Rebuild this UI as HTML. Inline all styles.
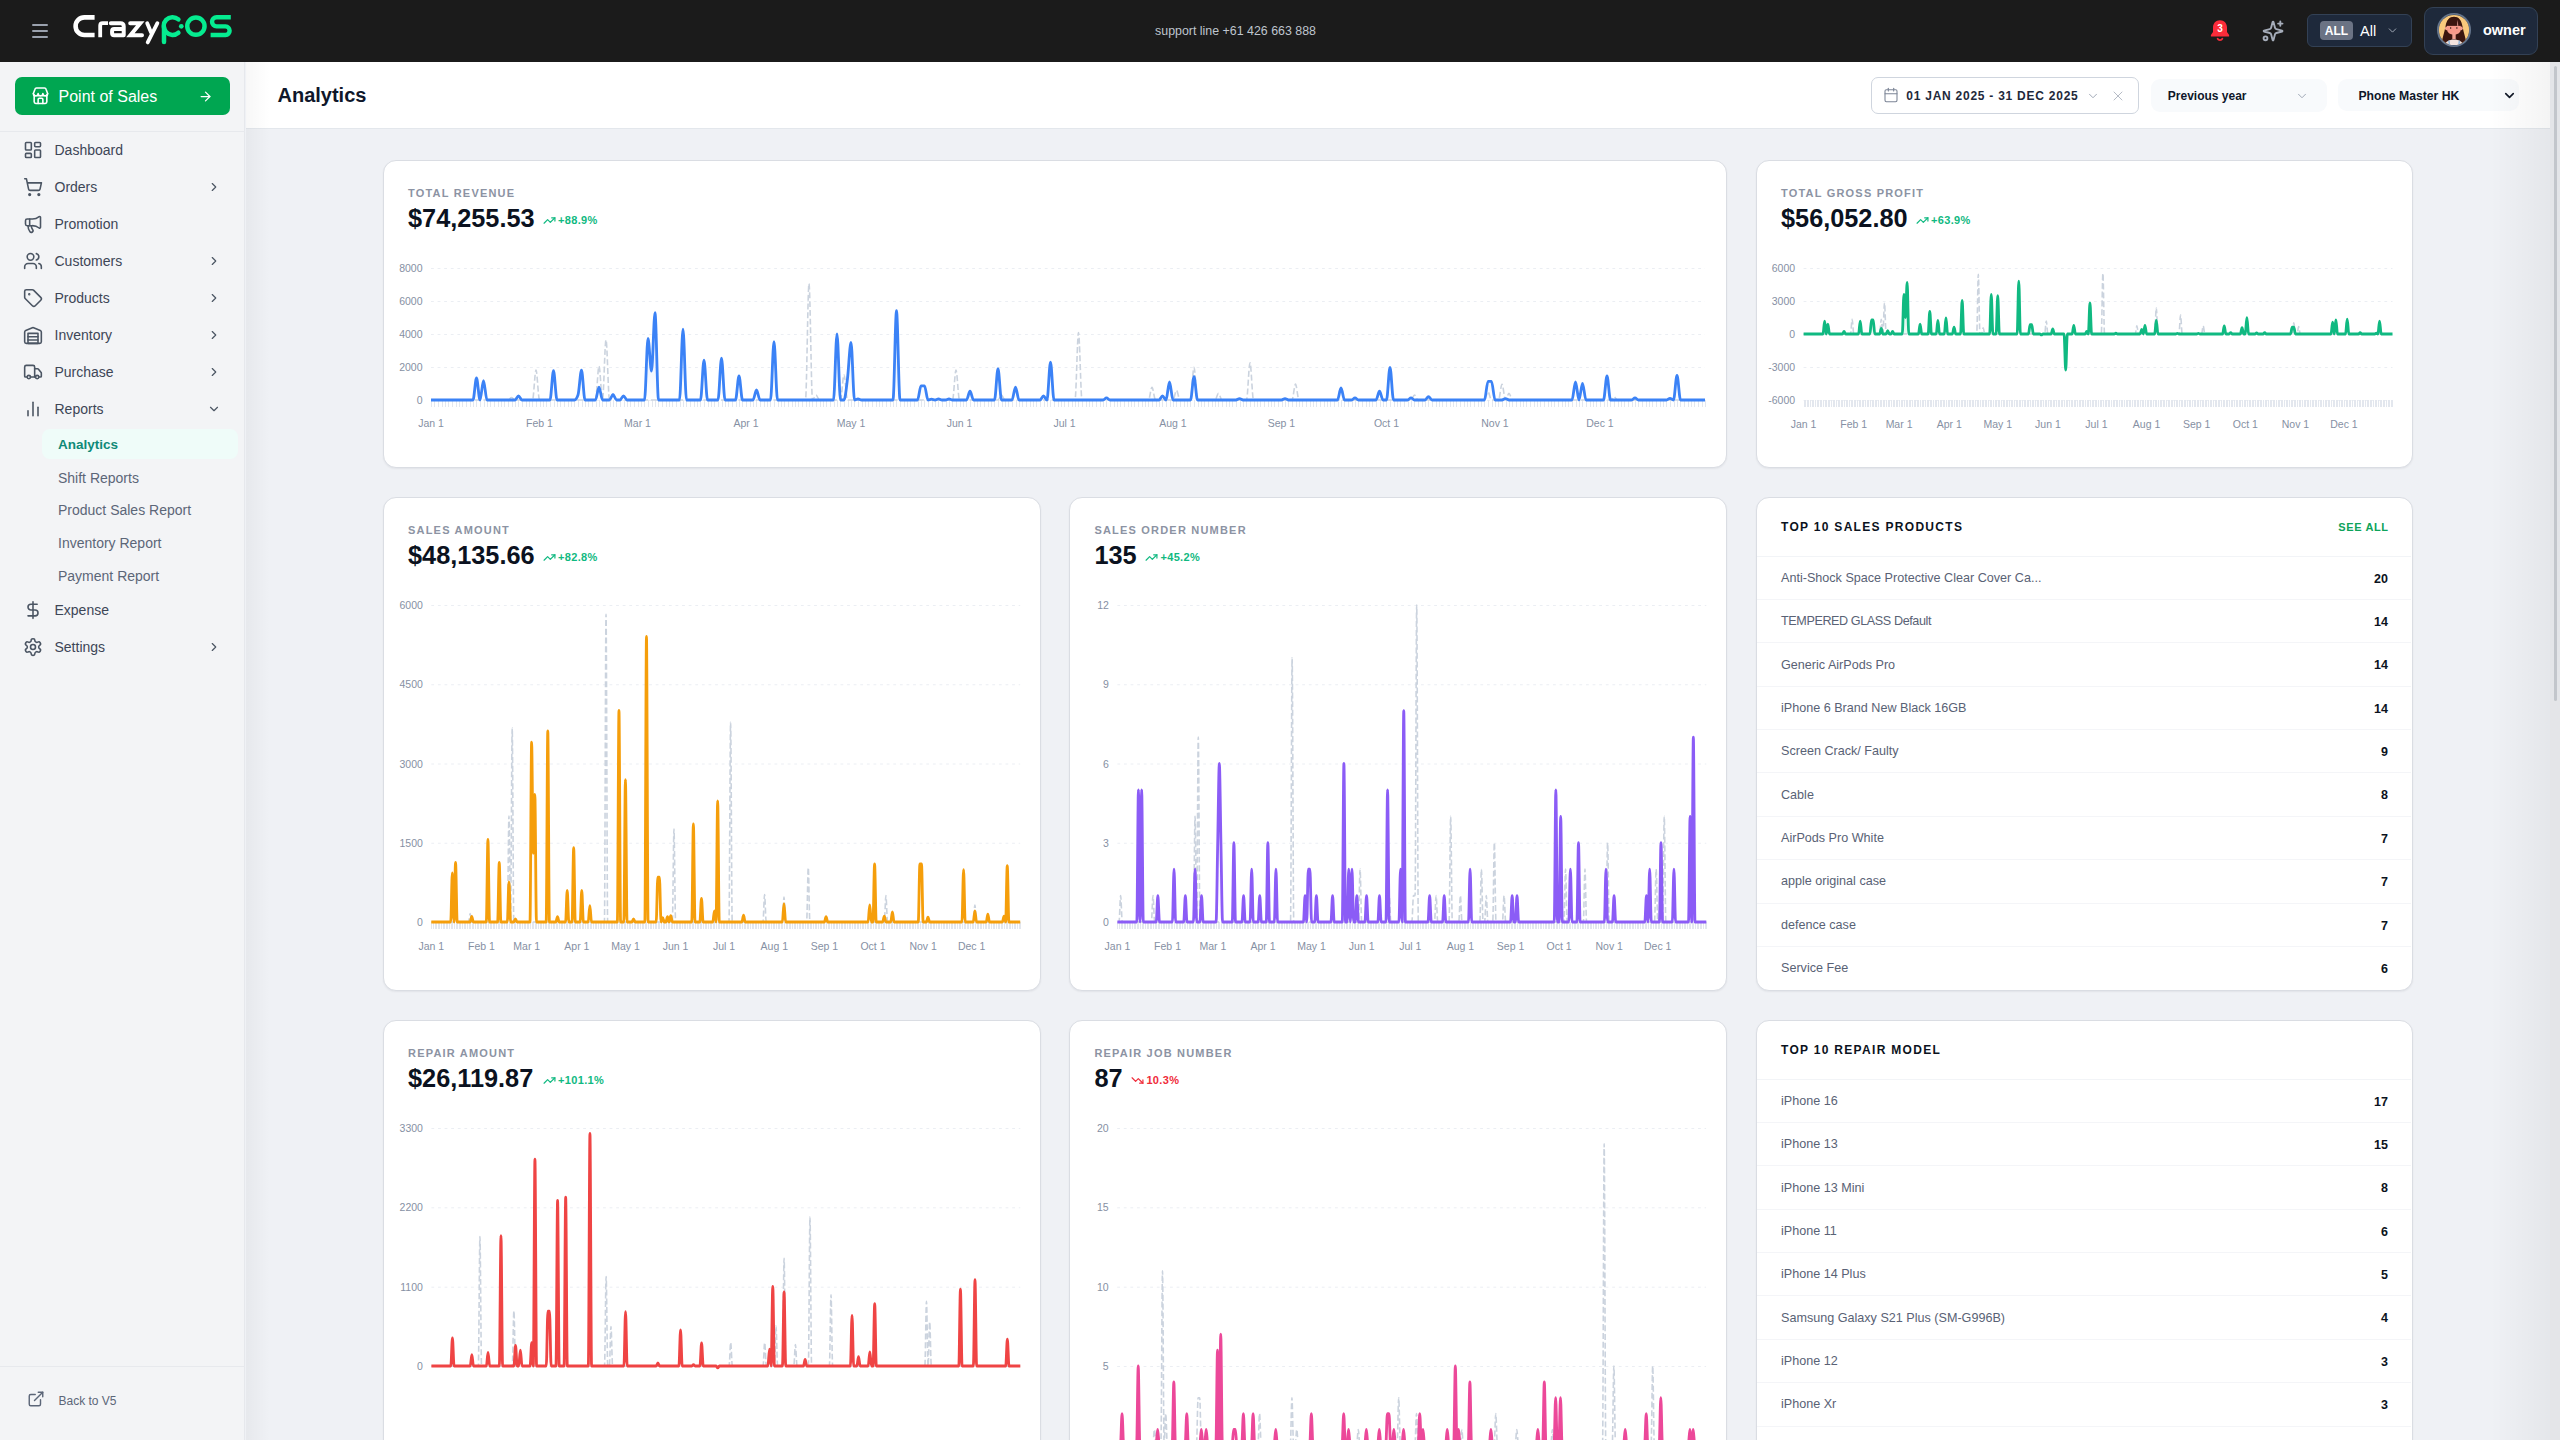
<!DOCTYPE html>
<html><head><meta charset="utf-8"><title>Analytics</title>
<style>
*{box-sizing:border-box;margin:0;padding:0}
html,body{width:2560px;height:1440px;overflow:hidden;background:#eff1f5;font-family:"Liberation Sans", sans-serif}
.t{position:absolute;white-space:nowrap}
.ic{position:absolute;display:block}
.abs{position:absolute}
.card{position:absolute;background:#fff;border:1px solid #dadde3;border-radius:13px;box-shadow:0 1px 2px rgba(16,24,40,.06)}
svg.ch{position:absolute;left:0;top:0;width:2560px;height:1440px;overflow:visible}
</style></head><body>

<div class="abs" style="left:245px;top:62px;width:2315px;height:1378px;background:#eff1f5"></div>
<div class="abs" style="left:246px;top:62px;width:24px;height:1378px;background:linear-gradient(90deg,rgba(0,0,0,.035),rgba(0,0,0,0))"></div>
<div class="abs" style="left:246px;top:62px;width:2304px;height:67px;background:#fff;border-bottom:1px solid #e3e7ec"></div>
<div class="abs" style="left:246px;top:62px;width:24px;height:67px;background:linear-gradient(90deg,rgba(0,0,0,.03),rgba(0,0,0,0))"></div>
<div class="t" style="top:85.07px;font-size:20px;line-height:20px;font-weight:700;color:#0f172a;left:277.5px;">Analytics</div>
<div class="abs" style="left:1871px;top:77px;width:268px;height:37px;border:1px solid #cfd5de;border-radius:7px;background:#fff"></div>
<svg class="ic" style="left:1883px;top:87px;width:16px;height:16px" viewBox="0 0 24 24" fill="none" stroke="#7c8596" stroke-width="1.6" stroke-linecap="round" stroke-linejoin="round"><rect width="18" height="18" x="3" y="4" rx="2" ry="2"/><line x1="16" x2="16" y1="2" y2="6"/><line x1="8" x2="8" y1="2" y2="6"/><line x1="3" x2="21" y1="10" y2="10"/></svg>
<div class="t" style="top:90.34px;font-size:12px;line-height:12px;font-weight:700;color:#1e293b;letter-spacing:0.75px;left:1906.3px;">01 JAN 2025 - 31 DEC 2025</div>
<svg class="ic" style="left:2086px;top:89px;width:14px;height:14px" viewBox="0 0 24 24" fill="none" stroke="#9aa3b2" stroke-width="1.6" stroke-linecap="round" stroke-linejoin="round"><path d="m6 9 6 6 6-6"/></svg>
<svg class="ic" style="left:2110px;top:88px;width:16px;height:16px" viewBox="0 0 24 24" fill="none" stroke="#b6bcc6" stroke-width="1.5" stroke-linecap="round" stroke-linejoin="round"><path d="M18 6 6 18"/><path d="m6 6 12 12"/></svg>
<div class="abs" style="left:2151px;top:79px;width:176px;height:33px;border-radius:9px;background:#f8fafc"></div>
<div class="t" style="top:90.34px;font-size:12px;line-height:12px;font-weight:700;color:#0f172a;left:2167.8px;">Previous year</div>
<svg class="ic" style="left:2295px;top:89px;width:14px;height:14px" viewBox="0 0 24 24" fill="none" stroke="#9aa3b2" stroke-width="1.6" stroke-linecap="round" stroke-linejoin="round"><path d="m6 9 6 6 6-6"/></svg>
<div class="abs" style="left:2338px;top:79px;width:181px;height:32px;border-radius:9px;background:#f8fafc"></div>
<div class="t" style="top:90.17px;font-size:12.2px;line-height:12.2px;font-weight:700;color:#0f172a;left:2358.4px;">Phone Master HK</div>
<svg class="ic" style="left:2502px;top:88px;width:15px;height:15px" viewBox="0 0 24 24" fill="none" stroke="#111827" stroke-width="2.6" stroke-linecap="round" stroke-linejoin="round"><path d="m6 9 6 6 6-6"/></svg>
<div class="abs" style="left:2490px;top:62px;width:60px;height:1378px;background:linear-gradient(90deg,rgba(0,0,0,0),rgba(0,0,0,.045))"></div>
<div class="abs" style="left:2550px;top:62px;width:10px;height:1378px;background:#e4e5e8"></div>
<div class="abs" style="left:2554px;top:66px;width:3px;height:635px;border-radius:2px;background:#c3c6cb"></div>
<div class="card" style="left:383px;top:160px;width:1344px;height:308px"></div>
<div class="card" style="left:1756px;top:160px;width:657px;height:308px"></div>
<div class="card" style="left:383px;top:497px;width:658px;height:494px"></div>
<div class="card" style="left:1069px;top:497px;width:658px;height:494px"></div>
<div class="card" style="left:1756px;top:497px;width:657px;height:494px"></div>
<div class="card" style="left:383px;top:1020px;width:658px;height:460px"></div>
<div class="card" style="left:1069px;top:1020px;width:658px;height:460px"></div>
<div class="card" style="left:1756px;top:1020px;width:657px;height:460px"></div>
<div class="t" style="top:187.69px;font-size:11px;line-height:11px;font-weight:700;color:#8c93a3;letter-spacing:1.2px;left:408px;">TOTAL REVENUE</div>
<div class="t" style="top:205.58px;font-size:25.3px;line-height:25.3px;font-weight:700;color:#0b1220;left:408px;">$74,255.53</div>
<svg class="ic" style="left:543px;top:214px;width:13px;height:13px" viewBox="0 0 24 24" fill="none" stroke="#10b981" stroke-width="2.2" stroke-linecap="round" stroke-linejoin="round"><polyline points="22 7 13.5 15.5 8.5 10.5 2 17"/><polyline points="16 7 22 7 22 13"/></svg>
<div class="t" style="top:214.69px;font-size:11px;line-height:11px;font-weight:700;color:#10b981;letter-spacing:0.35px;left:558px;">+88.9%</div>
<div class="t" style="top:187.69px;font-size:11px;line-height:11px;font-weight:700;color:#8c93a3;letter-spacing:1.2px;left:1781px;">TOTAL GROSS PROFIT</div>
<div class="t" style="top:205.58px;font-size:25.3px;line-height:25.3px;font-weight:700;color:#0b1220;left:1781px;">$56,052.80</div>
<svg class="ic" style="left:1916px;top:214px;width:13px;height:13px" viewBox="0 0 24 24" fill="none" stroke="#10b981" stroke-width="2.2" stroke-linecap="round" stroke-linejoin="round"><polyline points="22 7 13.5 15.5 8.5 10.5 2 17"/><polyline points="16 7 22 7 22 13"/></svg>
<div class="t" style="top:214.69px;font-size:11px;line-height:11px;font-weight:700;color:#10b981;letter-spacing:0.35px;left:1931px;">+63.9%</div>
<div class="t" style="top:524.69px;font-size:11px;line-height:11px;font-weight:700;color:#8c93a3;letter-spacing:1.2px;left:408px;">SALES AMOUNT</div>
<div class="t" style="top:542.58px;font-size:25.3px;line-height:25.3px;font-weight:700;color:#0b1220;left:408px;">$48,135.66</div>
<svg class="ic" style="left:543px;top:551px;width:13px;height:13px" viewBox="0 0 24 24" fill="none" stroke="#10b981" stroke-width="2.2" stroke-linecap="round" stroke-linejoin="round"><polyline points="22 7 13.5 15.5 8.5 10.5 2 17"/><polyline points="16 7 22 7 22 13"/></svg>
<div class="t" style="top:551.69px;font-size:11px;line-height:11px;font-weight:700;color:#10b981;letter-spacing:0.35px;left:558px;">+82.8%</div>
<div class="t" style="top:524.69px;font-size:11px;line-height:11px;font-weight:700;color:#8c93a3;letter-spacing:1.2px;left:1094.4px;">SALES ORDER NUMBER</div>
<div class="t" style="top:542.58px;font-size:25.3px;line-height:25.3px;font-weight:700;color:#0b1220;left:1094.4px;">135</div>
<svg class="ic" style="left:1145.4px;top:551px;width:13px;height:13px" viewBox="0 0 24 24" fill="none" stroke="#10b981" stroke-width="2.2" stroke-linecap="round" stroke-linejoin="round"><polyline points="22 7 13.5 15.5 8.5 10.5 2 17"/><polyline points="16 7 22 7 22 13"/></svg>
<div class="t" style="top:551.69px;font-size:11px;line-height:11px;font-weight:700;color:#10b981;letter-spacing:0.35px;left:1160.4px;">+45.2%</div>
<div class="t" style="top:1047.69px;font-size:11px;line-height:11px;font-weight:700;color:#8c93a3;letter-spacing:1.2px;left:408px;">REPAIR AMOUNT</div>
<div class="t" style="top:1065.58px;font-size:25.3px;line-height:25.3px;font-weight:700;color:#0b1220;left:408px;">$26,119.87</div>
<svg class="ic" style="left:543px;top:1074px;width:13px;height:13px" viewBox="0 0 24 24" fill="none" stroke="#10b981" stroke-width="2.2" stroke-linecap="round" stroke-linejoin="round"><polyline points="22 7 13.5 15.5 8.5 10.5 2 17"/><polyline points="16 7 22 7 22 13"/></svg>
<div class="t" style="top:1074.69px;font-size:11px;line-height:11px;font-weight:700;color:#10b981;letter-spacing:0.35px;left:558px;">+101.1%</div>
<div class="t" style="top:1047.69px;font-size:11px;line-height:11px;font-weight:700;color:#8c93a3;letter-spacing:1.2px;left:1094.4px;">REPAIR JOB NUMBER</div>
<div class="t" style="top:1065.58px;font-size:25.3px;line-height:25.3px;font-weight:700;color:#0b1220;left:1094.4px;">87</div>
<svg class="ic" style="left:1131.4px;top:1074px;width:13px;height:13px" viewBox="0 0 24 24" fill="none" stroke="#ef2b3a" stroke-width="2.2" stroke-linecap="round" stroke-linejoin="round"><polyline points="22 17 13.5 8.5 8.5 13.5 2 7"/><polyline points="16 17 22 17 22 11"/></svg>
<div class="t" style="top:1074.69px;font-size:11px;line-height:11px;font-weight:700;color:#ef2b3a;letter-spacing:0.35px;left:1146.4px;">10.3%</div>
<svg class="ch" viewBox="0 0 2560 1440"><line x1="431" x2="1705" y1="268.5" y2="268.5" stroke="#ebeef3" stroke-width="1" stroke-dasharray="2.8 3.8"/>
<line x1="431" x2="1705" y1="301.5" y2="301.5" stroke="#ebeef3" stroke-width="1" stroke-dasharray="2.8 3.8"/>
<line x1="431" x2="1705" y1="334.5" y2="334.5" stroke="#ebeef3" stroke-width="1" stroke-dasharray="2.8 3.8"/>
<line x1="431" x2="1705" y1="367.5" y2="367.5" stroke="#ebeef3" stroke-width="1" stroke-dasharray="2.8 3.8"/>
<line x1="431" x2="1705" y1="400.5" y2="400.5" stroke="#ebeef3" stroke-width="1" stroke-dasharray="2.8 3.8"/>
<path d="M431.5,400v7M434.5,400v7M438.5,400v7M442.5,400v7M445.5,400v7M448.5,400v7M452.5,400v7M456.5,400v7M459.5,400v7M462.5,400v7M466.5,400v7M470.5,400v7M473.5,400v7M476.5,400v7M480.5,400v7M484.5,400v7M487.5,400v7M490.5,400v7M494.5,400v7M498.5,400v7M501.5,400v7M504.5,400v7M508.5,400v7M512.5,400v7M515.5,400v7M518.5,400v7M522.5,400v7M526.5,400v7M529.5,400v7M532.5,400v7M536.5,400v7M540.5,400v7M543.5,400v7M546.5,400v7M550.5,400v7M554.5,400v7M557.5,400v7M560.5,400v7M564.5,400v7M568.5,400v7M571.5,400v7M574.5,400v7M578.5,400v7M582.5,400v7M585.5,400v7M588.5,400v7M592.5,400v7M596.5,400v7M599.5,400v7M602.5,400v7M606.5,400v7M610.5,400v7M613.5,400v7M616.5,400v7M620.5,400v7M624.5,400v7M627.5,400v7M630.5,400v7M634.5,400v7M638.5,400v7M641.5,400v7M644.5,400v7M648.5,400v7M652.5,400v7M655.5,400v7M658.5,400v7M662.5,400v7M666.5,400v7M669.5,400v7M672.5,400v7M676.5,400v7M680.5,400v7M683.5,400v7M686.5,400v7M690.5,400v7M694.5,400v7M697.5,400v7M700.5,400v7M704.5,400v7M708.5,400v7M711.5,400v7M714.5,400v7M718.5,400v7M722.5,400v7M725.5,400v7M728.5,400v7M732.5,400v7M736.5,400v7M739.5,400v7M742.5,400v7M746.5,400v7M750.5,400v7M753.5,400v7M756.5,400v7M760.5,400v7M764.5,400v7M767.5,400v7M770.5,400v7M774.5,400v7M778.5,400v7M781.5,400v7M784.5,400v7M788.5,400v7M792.5,400v7M795.5,400v7M798.5,400v7M802.5,400v7M806.5,400v7M809.5,400v7M812.5,400v7M816.5,400v7M820.5,400v7M823.5,400v7M826.5,400v7M830.5,400v7M834.5,400v7M837.5,400v7M840.5,400v7M844.5,400v7M848.5,400v7M851.5,400v7M854.5,400v7M858.5,400v7M862.5,400v7M865.5,400v7M868.5,400v7M872.5,400v7M876.5,400v7M879.5,400v7M882.5,400v7M886.5,400v7M890.5,400v7M893.5,400v7M896.5,400v7M900.5,400v7M904.5,400v7M907.5,400v7M910.5,400v7M914.5,400v7M918.5,400v7M921.5,400v7M924.5,400v7M928.5,400v7M932.5,400v7M935.5,400v7M938.5,400v7M942.5,400v7M946.5,400v7M949.5,400v7M952.5,400v7M956.5,400v7M960.5,400v7M963.5,400v7M966.5,400v7M970.5,400v7M974.5,400v7M977.5,400v7M980.5,400v7M984.5,400v7M988.5,400v7M991.5,400v7M994.5,400v7M998.5,400v7M1002.5,400v7M1005.5,400v7M1008.5,400v7M1012.5,400v7M1016.5,400v7M1019.5,400v7M1022.5,400v7M1026.5,400v7M1030.5,400v7M1033.5,400v7M1036.5,400v7M1040.5,400v7M1044.5,400v7M1047.5,400v7M1050.5,400v7M1054.5,400v7M1058.5,400v7M1061.5,400v7M1064.5,400v7M1068.5,400v7M1072.5,400v7M1075.5,400v7M1078.5,400v7M1082.5,400v7M1086.5,400v7M1089.5,400v7M1092.5,400v7M1096.5,400v7M1100.5,400v7M1103.5,400v7M1106.5,400v7M1110.5,400v7M1114.5,400v7M1117.5,400v7M1120.5,400v7M1124.5,400v7M1128.5,400v7M1131.5,400v7M1134.5,400v7M1138.5,400v7M1142.5,400v7M1145.5,400v7M1148.5,400v7M1152.5,400v7M1156.5,400v7M1159.5,400v7M1162.5,400v7M1166.5,400v7M1170.5,400v7M1173.5,400v7M1176.5,400v7M1180.5,400v7M1184.5,400v7M1187.5,400v7M1190.5,400v7M1194.5,400v7M1198.5,400v7M1201.5,400v7M1204.5,400v7M1208.5,400v7M1212.5,400v7M1215.5,400v7M1218.5,400v7M1222.5,400v7M1226.5,400v7M1229.5,400v7M1232.5,400v7M1236.5,400v7M1240.5,400v7M1243.5,400v7M1246.5,400v7M1250.5,400v7M1254.5,400v7M1257.5,400v7M1260.5,400v7M1264.5,400v7M1268.5,400v7M1271.5,400v7M1274.5,400v7M1278.5,400v7M1282.5,400v7M1285.5,400v7M1288.5,400v7M1292.5,400v7M1296.5,400v7M1299.5,400v7M1302.5,400v7M1306.5,400v7M1310.5,400v7M1313.5,400v7M1316.5,400v7M1320.5,400v7M1324.5,400v7M1327.5,400v7M1330.5,400v7M1334.5,400v7M1338.5,400v7M1341.5,400v7M1344.5,400v7M1348.5,400v7M1352.5,400v7M1355.5,400v7M1358.5,400v7M1362.5,400v7M1366.5,400v7M1369.5,400v7M1372.5,400v7M1376.5,400v7M1380.5,400v7M1383.5,400v7M1386.5,400v7M1390.5,400v7M1394.5,400v7M1397.5,400v7M1400.5,400v7M1404.5,400v7M1408.5,400v7M1411.5,400v7M1414.5,400v7M1418.5,400v7M1422.5,400v7M1425.5,400v7M1428.5,400v7M1432.5,400v7M1436.5,400v7M1439.5,400v7M1442.5,400v7M1446.5,400v7M1450.5,400v7M1453.5,400v7M1456.5,400v7M1460.5,400v7M1464.5,400v7M1467.5,400v7M1470.5,400v7M1474.5,400v7M1478.5,400v7M1481.5,400v7M1484.5,400v7M1488.5,400v7M1492.5,400v7M1495.5,400v7M1498.5,400v7M1502.5,400v7M1506.5,400v7M1509.5,400v7M1512.5,400v7M1516.5,400v7M1520.5,400v7M1523.5,400v7M1526.5,400v7M1530.5,400v7M1534.5,400v7M1537.5,400v7M1540.5,400v7M1544.5,400v7M1548.5,400v7M1551.5,400v7M1554.5,400v7M1558.5,400v7M1562.5,400v7M1565.5,400v7M1568.5,400v7M1572.5,400v7M1576.5,400v7M1579.5,400v7M1582.5,400v7M1586.5,400v7M1590.5,400v7M1593.5,400v7M1596.5,400v7M1600.5,400v7M1604.5,400v7M1607.5,400v7M1610.5,400v7M1614.5,400v7M1618.5,400v7M1621.5,400v7M1624.5,400v7M1628.5,400v7M1632.5,400v7M1635.5,400v7M1638.5,400v7M1642.5,400v7M1646.5,400v7M1649.5,400v7M1652.5,400v7M1656.5,400v7M1660.5,400v7M1663.5,400v7M1666.5,400v7M1670.5,400v7M1674.5,400v7M1677.5,400v7M1680.5,400v7M1684.5,400v7M1688.5,400v7M1691.5,400v7M1694.5,400v7M1698.5,400v7M1702.5,400v7M1705.5,400v7" stroke="#e3e7ee" stroke-width="1" fill="none"/>
<path d="M431.00,400.00L434.50,400.00L438.00,400.00L441.50,400.00L445.00,400.00L448.50,400.00L452.00,400.00L455.50,400.00L459.00,400.00L462.50,400.00L466.00,400.00L469.50,400.00L473.00,400.00L476.50,400.00L480.00,400.00L483.50,400.00L487.00,400.00L490.50,400.00L494.00,400.00L497.50,400.00L501.00,400.00L504.50,400.00L508.00,400.00C509.17,400.00,510.33,397.52,511.50,397.52C512.67,397.52,513.83,400.00,515.00,400.00L518.50,400.00L522.00,400.00L525.50,400.00L529.00,400.00L532.50,400.00C533.67,400.00,534.83,370.13,536.00,370.13C537.17,370.13,538.33,400.00,539.50,400.00L543.00,400.00L546.50,400.00L550.00,400.00L553.50,400.00L557.00,400.00L560.50,400.00L564.00,400.00L567.50,400.00L571.00,400.00L574.50,400.00L578.00,400.00L581.50,400.00L585.00,400.00L588.50,400.00L592.00,400.00L595.50,400.00C596.67,400.00,597.83,366.18,599.00,366.18C600.17,366.18,601.33,400.00,602.50,400.00C603.67,400.00,604.83,339.77,606.00,339.77C607.17,339.77,608.33,400.00,609.50,400.00C610.67,400.00,611.83,395.05,613.00,395.05C614.17,395.05,615.33,400.00,616.50,400.00L620.00,400.00L623.50,400.00L627.00,400.00L630.50,400.00L634.00,400.00L637.50,400.00L641.00,400.00L644.50,400.00L648.00,400.00L651.50,400.00L655.00,400.00L658.50,400.00L662.00,400.00L665.50,400.00L669.00,400.00L672.50,400.00L676.00,400.00L679.50,400.00L683.00,400.00L686.50,400.00L690.00,400.00L693.50,400.00L697.00,400.00L700.50,400.00L704.00,400.00L707.50,400.00L711.00,400.00L714.50,400.00L718.00,400.00L721.50,400.00L725.00,400.00L728.50,400.00L732.00,400.00L735.50,400.00L739.00,400.00L742.50,400.00L746.00,400.00L749.50,400.00L753.00,400.00L756.50,400.00L760.00,400.00L763.50,400.00L767.00,400.00L770.50,400.00L774.00,400.00L777.50,400.00L781.00,400.00L784.50,400.00L788.00,400.00L791.50,400.00L795.00,400.00L798.50,400.00L802.00,400.00L805.50,400.00C806.67,400.00,807.83,283.59,809.00,283.59C810.17,283.59,811.33,400.00,812.50,400.00C813.67,400.00,814.83,395.05,816.00,395.05C817.17,395.05,818.33,400.00,819.50,400.00L823.00,400.00L826.50,400.00L830.00,400.00L833.50,400.00L837.00,400.00L840.50,400.00C841.67,400.00,842.83,374.71,844.00,374.71C845.17,374.71,846.33,400.00,847.50,400.00L851.00,400.00L854.50,400.00L858.00,400.00L861.50,400.00L865.00,400.00L868.50,400.00L872.00,400.00L875.50,400.00L879.00,400.00L882.50,400.00L886.00,400.00L889.50,400.00L893.00,400.00L896.50,400.00L900.00,400.00L903.50,400.00L907.00,400.00L910.50,400.00L914.00,400.00L917.50,400.00L921.00,400.00L924.50,400.00L928.00,400.00L931.50,400.00L935.00,400.00L938.50,400.00L942.00,400.00L945.50,400.00L949.00,400.00L952.50,400.00C953.67,400.00,954.83,370.13,956.00,370.13C957.17,370.13,958.33,400.00,959.50,400.00L963.00,400.00L966.50,400.00L970.00,400.00L973.50,400.00L977.00,400.00L980.50,400.00L984.00,400.00L987.50,400.00L991.00,400.00L994.50,400.00L998.00,400.00C999.17,400.00,1000.33,395.05,1001.50,395.05C1002.67,395.05,1003.83,400.00,1005.00,400.00L1008.50,400.00L1012.00,400.00L1015.50,400.00L1019.00,400.00L1022.50,400.00L1026.00,400.00L1029.50,400.00L1033.00,400.00L1036.50,400.00L1040.00,400.00L1043.50,400.00L1047.00,400.00L1050.50,400.00L1054.00,400.00L1057.50,400.00L1061.00,400.00L1064.50,400.00L1068.00,400.00L1071.50,400.00L1075.00,400.00C1076.17,400.00,1077.33,332.51,1078.50,332.51C1079.67,332.51,1080.83,400.00,1082.00,400.00L1085.50,400.00L1089.00,400.00L1092.50,400.00L1096.00,400.00L1099.50,400.00L1103.00,400.00L1106.50,400.00L1110.00,400.00L1113.50,400.00L1117.00,400.00L1120.50,400.00L1124.00,400.00L1127.50,400.00L1131.00,400.00L1134.50,400.00L1138.00,400.00L1141.50,400.00L1145.00,400.00L1148.50,400.00C1149.67,400.00,1150.83,387.30,1152.00,387.30C1153.17,387.30,1154.33,400.00,1155.50,400.00L1159.00,400.00L1162.50,400.00L1166.00,400.00L1169.50,400.00L1173.00,400.00C1174.17,400.00,1175.33,390.43,1176.50,390.43C1177.67,390.43,1178.83,400.00,1180.00,400.00L1183.50,400.00L1187.00,400.00L1190.50,400.00C1191.67,400.00,1192.83,367.40,1194.00,367.40C1195.17,367.40,1196.33,400.00,1197.50,400.00L1201.00,400.00L1204.50,400.00L1208.00,400.00L1211.50,400.00L1215.00,400.00C1216.17,400.00,1217.33,393.40,1218.50,393.40C1219.67,393.40,1220.83,400.00,1222.00,400.00L1225.50,400.00L1229.00,400.00L1232.50,400.00L1236.00,400.00L1239.50,400.00L1243.00,400.00L1246.50,400.00C1247.67,400.00,1248.83,362.79,1250.00,362.79C1251.17,362.79,1252.33,400.00,1253.50,400.00L1257.00,400.00L1260.50,400.00L1264.00,400.00L1267.50,400.00L1271.00,400.00L1274.50,400.00L1278.00,400.00L1281.50,400.00L1285.00,400.00L1288.50,400.00L1292.00,400.00C1293.17,400.00,1294.33,384.16,1295.50,384.16C1296.67,384.16,1297.83,400.00,1299.00,400.00L1302.50,400.00L1306.00,400.00L1309.50,400.00L1313.00,400.00L1316.50,400.00L1320.00,400.00L1323.50,400.00L1327.00,400.00L1330.50,400.00L1334.00,400.00L1337.50,400.00L1341.00,400.00L1344.50,400.00L1348.00,400.00L1351.50,400.00L1355.00,400.00L1358.50,400.00L1362.00,400.00L1365.50,400.00L1369.00,400.00L1372.50,400.00L1376.00,400.00L1379.50,400.00L1383.00,400.00L1386.50,400.00L1390.00,400.00L1393.50,400.00L1397.00,400.00L1400.50,400.00L1404.00,400.00L1407.50,400.00L1411.00,400.00C1412.17,400.00,1413.33,395.05,1414.50,395.05C1415.67,395.05,1416.83,400.00,1418.00,400.00L1421.50,400.00L1425.00,400.00L1428.50,400.00L1432.00,400.00L1435.50,400.00L1439.00,400.00L1442.50,400.00L1446.00,400.00L1449.50,400.00L1453.00,400.00L1456.50,400.00L1460.00,400.00L1463.50,400.00L1467.00,400.00L1470.50,400.00L1474.00,400.00L1477.50,400.00L1481.00,400.00L1484.50,400.00C1485.67,400.00,1486.83,391.75,1488.00,391.75C1489.17,391.75,1490.33,400.00,1491.50,400.00L1495.00,400.00L1498.50,400.00C1499.67,400.00,1500.83,384.32,1502.00,384.32C1503.17,384.32,1504.33,400.00,1505.50,400.00C1506.67,400.00,1507.83,393.40,1509.00,393.40C1510.17,393.40,1511.33,400.00,1512.50,400.00L1516.00,400.00L1519.50,400.00L1523.00,400.00L1526.50,400.00L1530.00,400.00L1533.50,400.00L1537.00,400.00L1540.50,400.00L1544.00,400.00L1547.50,400.00L1551.00,400.00L1554.50,400.00L1558.00,400.00L1561.50,400.00L1565.00,400.00L1568.50,400.00L1572.00,400.00L1575.50,400.00L1579.00,400.00L1582.50,400.00L1586.00,400.00L1589.50,400.00L1593.00,400.00L1596.50,400.00L1600.00,400.00L1603.50,400.00L1607.00,400.00L1610.50,400.00C1611.67,400.00,1612.83,396.70,1614.00,396.70C1615.17,396.70,1616.33,400.00,1617.50,400.00L1621.00,400.00L1624.50,400.00L1628.00,400.00L1631.50,400.00L1635.00,400.00L1638.50,400.00L1642.00,400.00L1645.50,400.00L1649.00,400.00L1652.50,400.00L1656.00,400.00L1659.50,400.00L1663.00,400.00L1666.50,400.00L1670.00,400.00L1673.50,400.00L1677.00,400.00L1680.50,400.00L1684.00,400.00L1687.50,400.00L1691.00,400.00L1694.50,400.00L1698.00,400.00L1701.50,400.00L1705.00,400.00" stroke="#cbd3de" stroke-width="1.6" stroke-dasharray="6 2.75" fill="none"/>
<defs><linearGradient id="grev" x1="0" y1="0" x2="0" y2="1"><stop offset="0" stop-color="#3b82f6" stop-opacity="0.22"/><stop offset="1" stop-color="#3b82f6" stop-opacity="0"/></linearGradient></defs>
<path d="M431.00,400.00L434.50,400.00L438.00,400.00L441.50,400.00L445.00,400.00L448.50,400.00L452.00,400.00L455.50,400.00L459.00,400.00L462.50,400.00L466.00,400.00L469.50,400.00L473.00,400.00C474.17,400.00,475.33,378.01,476.50,378.01C477.67,378.01,478.83,400.00,480.00,400.00C481.17,400.00,482.33,380.61,483.50,380.61C484.67,380.61,485.83,400.00,487.00,400.00L490.50,400.00L494.00,400.00L497.50,400.00L501.00,400.00L504.50,400.00L508.00,400.00L511.50,400.00L515.00,400.00C516.17,400.00,517.33,395.88,518.50,395.88C519.67,395.88,520.83,400.00,522.00,400.00L525.50,400.00L529.00,400.00L532.50,400.00L536.00,400.00L539.50,400.00L543.00,400.00L546.50,400.00L550.00,400.00C551.17,400.00,552.33,370.71,553.50,370.71C554.67,370.71,555.83,400.00,557.00,400.00L560.50,400.00L564.00,400.00L567.50,400.00L571.00,400.00L574.50,400.00C575.67,400.00,576.83,398.35,578.00,395.05C579.17,391.75,580.33,370.13,581.50,370.13C582.67,370.13,583.83,400.00,585.00,400.00L588.50,400.00L592.00,400.00L595.50,400.00C596.67,400.00,597.83,387.21,599.00,387.21C600.17,387.21,601.33,400.00,602.50,400.00L606.00,400.00L609.50,400.00C610.67,400.00,611.83,394.51,613.00,394.51C614.17,394.51,615.33,400.00,616.50,400.00L620.00,400.00C621.17,400.00,622.33,395.79,623.50,395.79C624.67,395.79,625.83,400.00,627.00,400.00L630.50,400.00L634.00,400.00L637.50,400.00L641.00,400.00L644.50,400.00C645.67,400.00,646.83,338.41,648.00,338.41C649.17,338.41,650.33,371.12,651.50,371.12C652.67,371.12,653.83,312.71,655.00,312.71C656.17,312.71,657.33,400.00,658.50,400.00L662.00,400.00L665.50,400.00L669.00,400.00L672.50,400.00L676.00,400.00L679.50,400.00C680.67,400.00,681.83,329.22,683.00,329.22C684.17,329.22,685.33,400.00,686.50,400.00L690.00,400.00L693.50,400.00L697.00,400.00L700.50,400.00C701.67,400.00,702.83,360.20,704.00,360.20C705.17,360.20,706.33,400.00,707.50,400.00L711.00,400.00L714.50,400.00L718.00,400.00C719.17,400.00,720.33,358.21,721.50,358.21C722.67,358.21,723.83,400.00,725.00,400.00L728.50,400.00L732.00,400.00L735.50,400.00C736.67,400.00,737.83,375.99,739.00,375.99C740.17,375.99,741.33,400.00,742.50,400.00L746.00,400.00L749.50,400.00L753.00,400.00C754.17,400.00,755.33,389.90,756.50,389.90C757.67,389.90,758.83,400.00,760.00,400.00L763.50,400.00L767.00,400.00L770.50,400.00C771.67,400.00,772.83,341.71,774.00,341.71C775.17,341.71,776.33,400.00,777.50,400.00L781.00,400.00L784.50,400.00L788.00,400.00L791.50,400.00L795.00,400.00L798.50,400.00L802.00,400.00L805.50,400.00L809.00,400.00L812.50,400.00L816.00,400.00L819.50,400.00L823.00,400.00L826.50,400.00L830.00,400.00L833.50,400.00C834.67,400.00,835.83,333.80,837.00,333.80C838.17,333.80,839.33,400.00,840.50,400.00L844.00,400.00C845.17,400.00,846.33,388.15,847.50,378.55C848.67,368.95,849.83,342.42,851.00,342.42C852.17,342.42,853.33,400.00,854.50,400.00C855.67,400.00,856.83,399.01,858.00,399.01C859.17,399.01,860.33,400.00,861.50,400.00L865.00,400.00L868.50,400.00L872.00,400.00L875.50,400.00L879.00,400.00L882.50,400.00L886.00,400.00L889.50,400.00L893.00,400.00C894.17,400.00,895.33,310.70,896.50,310.70C897.67,310.70,898.83,400.00,900.00,400.00L903.50,400.00L907.00,400.00L910.50,400.00L914.00,400.00L917.50,400.00C918.67,400.00,919.83,385.89,921.00,385.89L924.50,385.89C925.67,385.89,926.83,400.00,928.00,400.00C929.17,400.00,930.33,399.18,931.50,399.18C932.67,399.18,933.83,400.00,935.00,400.00C936.17,400.00,937.33,398.85,938.50,398.85C939.67,398.85,940.83,400.00,942.00,400.00L945.50,400.00C946.67,400.00,947.83,399.01,949.00,399.01C950.17,399.01,951.33,400.00,952.50,400.00L956.00,400.00L959.50,400.00L963.00,400.00L966.50,400.00C967.67,400.00,968.83,391.21,970.00,391.21C971.17,391.21,972.33,400.00,973.50,400.00L977.00,400.00L980.50,400.00L984.00,400.00L987.50,400.00L991.00,400.00L994.50,400.00C995.67,400.00,996.83,368.70,998.00,368.70C999.17,368.70,1000.33,400.00,1001.50,400.00L1005.00,400.00L1008.50,400.00L1012.00,400.00C1013.17,400.00,1014.33,387.20,1015.50,387.20C1016.67,387.20,1017.83,400.00,1019.00,400.00L1022.50,400.00L1026.00,400.00L1029.50,400.00L1033.00,400.00L1036.50,400.00L1040.00,400.00C1041.17,400.00,1042.33,395.88,1043.50,395.88C1044.67,395.88,1045.83,400.00,1047.00,400.00C1048.17,400.00,1049.33,362.10,1050.50,362.10C1051.67,362.10,1052.83,400.00,1054.00,400.00L1057.50,400.00L1061.00,400.00L1064.50,400.00L1068.00,400.00L1071.50,400.00L1075.00,400.00L1078.50,400.00L1082.00,400.00L1085.50,400.00L1089.00,400.00L1092.50,400.00L1096.00,400.00L1099.50,400.00L1103.00,400.00C1104.17,400.00,1105.33,397.86,1106.50,397.86C1107.67,397.86,1108.83,400.00,1110.00,400.00L1113.50,400.00L1117.00,400.00L1120.50,400.00L1124.00,400.00L1127.50,400.00L1131.00,400.00L1134.50,400.00L1138.00,400.00L1141.50,400.00L1145.00,400.00L1148.50,400.00L1152.00,400.00L1155.50,400.00L1159.00,400.00C1160.17,400.00,1161.33,395.88,1162.50,395.88C1163.67,395.88,1164.83,400.00,1166.00,400.00C1167.17,400.00,1168.33,382.01,1169.50,382.01C1170.67,382.01,1171.83,400.00,1173.00,400.00L1176.50,400.00L1180.00,400.00L1183.50,400.00L1187.00,400.00L1190.50,400.00C1191.67,400.00,1192.83,376.70,1194.00,376.70C1195.17,376.70,1196.33,400.00,1197.50,400.00L1201.00,400.00L1204.50,400.00L1208.00,400.00L1211.50,400.00L1215.00,400.00L1218.50,400.00L1222.00,400.00L1225.50,400.00L1229.00,400.00L1232.50,400.00L1236.00,400.00C1237.17,400.00,1238.33,398.68,1239.50,398.68C1240.67,398.68,1241.83,400.00,1243.00,400.00L1246.50,400.00L1250.00,400.00L1253.50,400.00L1257.00,400.00L1260.50,400.00L1264.00,400.00L1267.50,400.00L1271.00,400.00L1274.50,400.00L1278.00,400.00L1281.50,400.00C1282.67,400.00,1283.83,398.68,1285.00,398.68C1286.17,398.68,1287.33,400.00,1288.50,400.00L1292.00,400.00L1295.50,400.00L1299.00,400.00L1302.50,400.00L1306.00,400.00L1309.50,400.00L1313.00,400.00L1316.50,400.00L1320.00,400.00L1323.50,400.00L1327.00,400.00L1330.50,400.00L1334.00,400.00L1337.50,400.00C1338.67,400.00,1339.83,387.91,1341.00,387.91C1342.17,387.91,1343.33,400.00,1344.50,400.00L1348.00,400.00L1351.50,400.00C1352.67,400.00,1353.83,397.86,1355.00,397.86C1356.17,397.86,1357.33,400.00,1358.50,400.00L1362.00,400.00L1365.50,400.00L1369.00,400.00L1372.50,400.00L1376.00,400.00C1377.17,400.00,1378.33,391.21,1379.50,391.21C1380.67,391.21,1381.83,400.00,1383.00,400.00L1386.50,400.00C1387.67,400.00,1388.83,367.40,1390.00,367.40C1391.17,367.40,1392.33,400.00,1393.50,400.00L1397.00,400.00L1400.50,400.00L1404.00,400.00L1407.50,400.00C1408.67,400.00,1409.83,397.86,1411.00,397.86C1412.17,397.86,1413.33,400.00,1414.50,400.00L1418.00,400.00L1421.50,400.00L1425.00,400.00C1426.17,400.00,1427.33,396.54,1428.50,396.54C1429.67,396.54,1430.83,400.00,1432.00,400.00L1435.50,400.00L1439.00,400.00L1442.50,400.00L1446.00,400.00L1449.50,400.00L1453.00,400.00L1456.50,400.00L1460.00,400.00L1463.50,400.00L1467.00,400.00L1470.50,400.00L1474.00,400.00L1477.50,400.00L1481.00,400.00L1484.50,400.00C1485.67,400.00,1486.83,381.31,1488.00,381.31L1491.50,381.31C1492.67,381.31,1493.83,400.00,1495.00,400.00L1498.50,400.00L1502.00,400.00C1503.17,400.00,1504.33,398.68,1505.50,398.68C1506.67,398.68,1507.83,400.00,1509.00,400.00L1512.50,400.00L1516.00,400.00L1519.50,400.00L1523.00,400.00L1526.50,400.00L1530.00,400.00L1533.50,400.00L1537.00,400.00L1540.50,400.00L1544.00,400.00L1547.50,400.00L1551.00,400.00L1554.50,400.00L1558.00,400.00L1561.50,400.00L1565.00,400.00L1568.50,400.00L1572.00,400.00C1573.17,400.00,1574.33,382.01,1575.50,382.01C1576.67,382.01,1577.83,400.00,1579.00,400.00C1580.17,400.00,1581.33,383.33,1582.50,383.33C1583.67,383.33,1584.83,400.00,1586.00,400.00L1589.50,400.00L1593.00,400.00L1596.50,400.00L1600.00,400.00L1603.50,400.00C1604.67,400.00,1605.83,375.99,1607.00,375.99C1608.17,375.99,1609.33,400.00,1610.50,400.00L1614.00,400.00L1617.50,400.00L1621.00,400.00L1624.50,400.00L1628.00,400.00L1631.50,400.00C1632.67,400.00,1633.83,397.86,1635.00,397.86C1636.17,397.86,1637.33,400.00,1638.50,400.00L1642.00,400.00L1645.50,400.00L1649.00,400.00L1652.50,400.00L1656.00,400.00L1659.50,400.00L1663.00,400.00L1666.50,400.00C1667.67,400.00,1668.83,398.35,1670.00,398.35C1671.17,398.35,1672.33,400.00,1673.50,400.00C1674.67,400.00,1675.83,375.33,1677.00,375.33C1678.17,375.33,1679.33,400.00,1680.50,400.00L1684.00,400.00L1687.50,400.00L1691.00,400.00L1694.50,400.00L1698.00,400.00L1701.50,400.00L1705.00,400.00L1705.00,400.00L431.00,400.00Z" fill="url(#grev)" stroke="none"/>
<path d="M431.00,400.00L434.50,400.00L438.00,400.00L441.50,400.00L445.00,400.00L448.50,400.00L452.00,400.00L455.50,400.00L459.00,400.00L462.50,400.00L466.00,400.00L469.50,400.00L473.00,400.00C474.17,400.00,475.33,378.01,476.50,378.01C477.67,378.01,478.83,400.00,480.00,400.00C481.17,400.00,482.33,380.61,483.50,380.61C484.67,380.61,485.83,400.00,487.00,400.00L490.50,400.00L494.00,400.00L497.50,400.00L501.00,400.00L504.50,400.00L508.00,400.00L511.50,400.00L515.00,400.00C516.17,400.00,517.33,395.88,518.50,395.88C519.67,395.88,520.83,400.00,522.00,400.00L525.50,400.00L529.00,400.00L532.50,400.00L536.00,400.00L539.50,400.00L543.00,400.00L546.50,400.00L550.00,400.00C551.17,400.00,552.33,370.71,553.50,370.71C554.67,370.71,555.83,400.00,557.00,400.00L560.50,400.00L564.00,400.00L567.50,400.00L571.00,400.00L574.50,400.00C575.67,400.00,576.83,398.35,578.00,395.05C579.17,391.75,580.33,370.13,581.50,370.13C582.67,370.13,583.83,400.00,585.00,400.00L588.50,400.00L592.00,400.00L595.50,400.00C596.67,400.00,597.83,387.21,599.00,387.21C600.17,387.21,601.33,400.00,602.50,400.00L606.00,400.00L609.50,400.00C610.67,400.00,611.83,394.51,613.00,394.51C614.17,394.51,615.33,400.00,616.50,400.00L620.00,400.00C621.17,400.00,622.33,395.79,623.50,395.79C624.67,395.79,625.83,400.00,627.00,400.00L630.50,400.00L634.00,400.00L637.50,400.00L641.00,400.00L644.50,400.00C645.67,400.00,646.83,338.41,648.00,338.41C649.17,338.41,650.33,371.12,651.50,371.12C652.67,371.12,653.83,312.71,655.00,312.71C656.17,312.71,657.33,400.00,658.50,400.00L662.00,400.00L665.50,400.00L669.00,400.00L672.50,400.00L676.00,400.00L679.50,400.00C680.67,400.00,681.83,329.22,683.00,329.22C684.17,329.22,685.33,400.00,686.50,400.00L690.00,400.00L693.50,400.00L697.00,400.00L700.50,400.00C701.67,400.00,702.83,360.20,704.00,360.20C705.17,360.20,706.33,400.00,707.50,400.00L711.00,400.00L714.50,400.00L718.00,400.00C719.17,400.00,720.33,358.21,721.50,358.21C722.67,358.21,723.83,400.00,725.00,400.00L728.50,400.00L732.00,400.00L735.50,400.00C736.67,400.00,737.83,375.99,739.00,375.99C740.17,375.99,741.33,400.00,742.50,400.00L746.00,400.00L749.50,400.00L753.00,400.00C754.17,400.00,755.33,389.90,756.50,389.90C757.67,389.90,758.83,400.00,760.00,400.00L763.50,400.00L767.00,400.00L770.50,400.00C771.67,400.00,772.83,341.71,774.00,341.71C775.17,341.71,776.33,400.00,777.50,400.00L781.00,400.00L784.50,400.00L788.00,400.00L791.50,400.00L795.00,400.00L798.50,400.00L802.00,400.00L805.50,400.00L809.00,400.00L812.50,400.00L816.00,400.00L819.50,400.00L823.00,400.00L826.50,400.00L830.00,400.00L833.50,400.00C834.67,400.00,835.83,333.80,837.00,333.80C838.17,333.80,839.33,400.00,840.50,400.00L844.00,400.00C845.17,400.00,846.33,388.15,847.50,378.55C848.67,368.95,849.83,342.42,851.00,342.42C852.17,342.42,853.33,400.00,854.50,400.00C855.67,400.00,856.83,399.01,858.00,399.01C859.17,399.01,860.33,400.00,861.50,400.00L865.00,400.00L868.50,400.00L872.00,400.00L875.50,400.00L879.00,400.00L882.50,400.00L886.00,400.00L889.50,400.00L893.00,400.00C894.17,400.00,895.33,310.70,896.50,310.70C897.67,310.70,898.83,400.00,900.00,400.00L903.50,400.00L907.00,400.00L910.50,400.00L914.00,400.00L917.50,400.00C918.67,400.00,919.83,385.89,921.00,385.89L924.50,385.89C925.67,385.89,926.83,400.00,928.00,400.00C929.17,400.00,930.33,399.18,931.50,399.18C932.67,399.18,933.83,400.00,935.00,400.00C936.17,400.00,937.33,398.85,938.50,398.85C939.67,398.85,940.83,400.00,942.00,400.00L945.50,400.00C946.67,400.00,947.83,399.01,949.00,399.01C950.17,399.01,951.33,400.00,952.50,400.00L956.00,400.00L959.50,400.00L963.00,400.00L966.50,400.00C967.67,400.00,968.83,391.21,970.00,391.21C971.17,391.21,972.33,400.00,973.50,400.00L977.00,400.00L980.50,400.00L984.00,400.00L987.50,400.00L991.00,400.00L994.50,400.00C995.67,400.00,996.83,368.70,998.00,368.70C999.17,368.70,1000.33,400.00,1001.50,400.00L1005.00,400.00L1008.50,400.00L1012.00,400.00C1013.17,400.00,1014.33,387.20,1015.50,387.20C1016.67,387.20,1017.83,400.00,1019.00,400.00L1022.50,400.00L1026.00,400.00L1029.50,400.00L1033.00,400.00L1036.50,400.00L1040.00,400.00C1041.17,400.00,1042.33,395.88,1043.50,395.88C1044.67,395.88,1045.83,400.00,1047.00,400.00C1048.17,400.00,1049.33,362.10,1050.50,362.10C1051.67,362.10,1052.83,400.00,1054.00,400.00L1057.50,400.00L1061.00,400.00L1064.50,400.00L1068.00,400.00L1071.50,400.00L1075.00,400.00L1078.50,400.00L1082.00,400.00L1085.50,400.00L1089.00,400.00L1092.50,400.00L1096.00,400.00L1099.50,400.00L1103.00,400.00C1104.17,400.00,1105.33,397.86,1106.50,397.86C1107.67,397.86,1108.83,400.00,1110.00,400.00L1113.50,400.00L1117.00,400.00L1120.50,400.00L1124.00,400.00L1127.50,400.00L1131.00,400.00L1134.50,400.00L1138.00,400.00L1141.50,400.00L1145.00,400.00L1148.50,400.00L1152.00,400.00L1155.50,400.00L1159.00,400.00C1160.17,400.00,1161.33,395.88,1162.50,395.88C1163.67,395.88,1164.83,400.00,1166.00,400.00C1167.17,400.00,1168.33,382.01,1169.50,382.01C1170.67,382.01,1171.83,400.00,1173.00,400.00L1176.50,400.00L1180.00,400.00L1183.50,400.00L1187.00,400.00L1190.50,400.00C1191.67,400.00,1192.83,376.70,1194.00,376.70C1195.17,376.70,1196.33,400.00,1197.50,400.00L1201.00,400.00L1204.50,400.00L1208.00,400.00L1211.50,400.00L1215.00,400.00L1218.50,400.00L1222.00,400.00L1225.50,400.00L1229.00,400.00L1232.50,400.00L1236.00,400.00C1237.17,400.00,1238.33,398.68,1239.50,398.68C1240.67,398.68,1241.83,400.00,1243.00,400.00L1246.50,400.00L1250.00,400.00L1253.50,400.00L1257.00,400.00L1260.50,400.00L1264.00,400.00L1267.50,400.00L1271.00,400.00L1274.50,400.00L1278.00,400.00L1281.50,400.00C1282.67,400.00,1283.83,398.68,1285.00,398.68C1286.17,398.68,1287.33,400.00,1288.50,400.00L1292.00,400.00L1295.50,400.00L1299.00,400.00L1302.50,400.00L1306.00,400.00L1309.50,400.00L1313.00,400.00L1316.50,400.00L1320.00,400.00L1323.50,400.00L1327.00,400.00L1330.50,400.00L1334.00,400.00L1337.50,400.00C1338.67,400.00,1339.83,387.91,1341.00,387.91C1342.17,387.91,1343.33,400.00,1344.50,400.00L1348.00,400.00L1351.50,400.00C1352.67,400.00,1353.83,397.86,1355.00,397.86C1356.17,397.86,1357.33,400.00,1358.50,400.00L1362.00,400.00L1365.50,400.00L1369.00,400.00L1372.50,400.00L1376.00,400.00C1377.17,400.00,1378.33,391.21,1379.50,391.21C1380.67,391.21,1381.83,400.00,1383.00,400.00L1386.50,400.00C1387.67,400.00,1388.83,367.40,1390.00,367.40C1391.17,367.40,1392.33,400.00,1393.50,400.00L1397.00,400.00L1400.50,400.00L1404.00,400.00L1407.50,400.00C1408.67,400.00,1409.83,397.86,1411.00,397.86C1412.17,397.86,1413.33,400.00,1414.50,400.00L1418.00,400.00L1421.50,400.00L1425.00,400.00C1426.17,400.00,1427.33,396.54,1428.50,396.54C1429.67,396.54,1430.83,400.00,1432.00,400.00L1435.50,400.00L1439.00,400.00L1442.50,400.00L1446.00,400.00L1449.50,400.00L1453.00,400.00L1456.50,400.00L1460.00,400.00L1463.50,400.00L1467.00,400.00L1470.50,400.00L1474.00,400.00L1477.50,400.00L1481.00,400.00L1484.50,400.00C1485.67,400.00,1486.83,381.31,1488.00,381.31L1491.50,381.31C1492.67,381.31,1493.83,400.00,1495.00,400.00L1498.50,400.00L1502.00,400.00C1503.17,400.00,1504.33,398.68,1505.50,398.68C1506.67,398.68,1507.83,400.00,1509.00,400.00L1512.50,400.00L1516.00,400.00L1519.50,400.00L1523.00,400.00L1526.50,400.00L1530.00,400.00L1533.50,400.00L1537.00,400.00L1540.50,400.00L1544.00,400.00L1547.50,400.00L1551.00,400.00L1554.50,400.00L1558.00,400.00L1561.50,400.00L1565.00,400.00L1568.50,400.00L1572.00,400.00C1573.17,400.00,1574.33,382.01,1575.50,382.01C1576.67,382.01,1577.83,400.00,1579.00,400.00C1580.17,400.00,1581.33,383.33,1582.50,383.33C1583.67,383.33,1584.83,400.00,1586.00,400.00L1589.50,400.00L1593.00,400.00L1596.50,400.00L1600.00,400.00L1603.50,400.00C1604.67,400.00,1605.83,375.99,1607.00,375.99C1608.17,375.99,1609.33,400.00,1610.50,400.00L1614.00,400.00L1617.50,400.00L1621.00,400.00L1624.50,400.00L1628.00,400.00L1631.50,400.00C1632.67,400.00,1633.83,397.86,1635.00,397.86C1636.17,397.86,1637.33,400.00,1638.50,400.00L1642.00,400.00L1645.50,400.00L1649.00,400.00L1652.50,400.00L1656.00,400.00L1659.50,400.00L1663.00,400.00L1666.50,400.00C1667.67,400.00,1668.83,398.35,1670.00,398.35C1671.17,398.35,1672.33,400.00,1673.50,400.00C1674.67,400.00,1675.83,375.33,1677.00,375.33C1678.17,375.33,1679.33,400.00,1680.50,400.00L1684.00,400.00L1687.50,400.00L1691.00,400.00L1694.50,400.00L1698.00,400.00L1701.50,400.00L1705.00,400.00" stroke="#3b82f6" stroke-width="2.8" fill="none" stroke-linejoin="round"/>
<line x1="1803.6" x2="2392.5" y1="268.5" y2="268.5" stroke="#ebeef3" stroke-width="1" stroke-dasharray="2.8 3.8"/>
<line x1="1803.6" x2="2392.5" y1="301.5" y2="301.5" stroke="#ebeef3" stroke-width="1" stroke-dasharray="2.8 3.8"/>
<line x1="1803.6" x2="2392.5" y1="334.5" y2="334.5" stroke="#ebeef3" stroke-width="1" stroke-dasharray="2.8 3.8"/>
<line x1="1803.6" x2="2392.5" y1="367.5" y2="367.5" stroke="#ebeef3" stroke-width="1" stroke-dasharray="2.8 3.8"/>
<line x1="1803.6" x2="2392.5" y1="400.5" y2="400.5" stroke="#ebeef3" stroke-width="1" stroke-dasharray="2.8 3.8"/>
<path d="M1804.5,400v7M1805.5,400v7M1807.5,400v7M1808.5,400v7M1810.5,400v7M1812.5,400v7M1813.5,400v7M1815.5,400v7M1817.5,400v7M1818.5,400v7M1820.5,400v7M1821.5,400v7M1823.5,400v7M1825.5,400v7M1826.5,400v7M1828.5,400v7M1829.5,400v7M1831.5,400v7M1833.5,400v7M1834.5,400v7M1836.5,400v7M1838.5,400v7M1839.5,400v7M1841.5,400v7M1842.5,400v7M1844.5,400v7M1846.5,400v7M1847.5,400v7M1849.5,400v7M1851.5,400v7M1852.5,400v7M1854.5,400v7M1855.5,400v7M1857.5,400v7M1859.5,400v7M1860.5,400v7M1862.5,400v7M1863.5,400v7M1865.5,400v7M1867.5,400v7M1868.5,400v7M1870.5,400v7M1872.5,400v7M1873.5,400v7M1875.5,400v7M1876.5,400v7M1878.5,400v7M1880.5,400v7M1881.5,400v7M1883.5,400v7M1884.5,400v7M1886.5,400v7M1888.5,400v7M1889.5,400v7M1891.5,400v7M1893.5,400v7M1894.5,400v7M1896.5,400v7M1897.5,400v7M1899.5,400v7M1901.5,400v7M1902.5,400v7M1904.5,400v7M1906.5,400v7M1907.5,400v7M1909.5,400v7M1910.5,400v7M1912.5,400v7M1914.5,400v7M1915.5,400v7M1917.5,400v7M1918.5,400v7M1920.5,400v7M1922.5,400v7M1923.5,400v7M1925.5,400v7M1927.5,400v7M1928.5,400v7M1930.5,400v7M1931.5,400v7M1933.5,400v7M1935.5,400v7M1936.5,400v7M1938.5,400v7M1940.5,400v7M1941.5,400v7M1943.5,400v7M1944.5,400v7M1946.5,400v7M1948.5,400v7M1949.5,400v7M1951.5,400v7M1952.5,400v7M1954.5,400v7M1956.5,400v7M1957.5,400v7M1959.5,400v7M1961.5,400v7M1962.5,400v7M1964.5,400v7M1965.5,400v7M1967.5,400v7M1969.5,400v7M1970.5,400v7M1972.5,400v7M1973.5,400v7M1975.5,400v7M1977.5,400v7M1978.5,400v7M1980.5,400v7M1982.5,400v7M1983.5,400v7M1985.5,400v7M1986.5,400v7M1988.5,400v7M1990.5,400v7M1991.5,400v7M1993.5,400v7M1995.5,400v7M1996.5,400v7M1998.5,400v7M1999.5,400v7M2001.5,400v7M2003.5,400v7M2004.5,400v7M2006.5,400v7M2007.5,400v7M2009.5,400v7M2011.5,400v7M2012.5,400v7M2014.5,400v7M2016.5,400v7M2017.5,400v7M2019.5,400v7M2020.5,400v7M2022.5,400v7M2024.5,400v7M2025.5,400v7M2027.5,400v7M2028.5,400v7M2030.5,400v7M2032.5,400v7M2033.5,400v7M2035.5,400v7M2037.5,400v7M2038.5,400v7M2040.5,400v7M2041.5,400v7M2043.5,400v7M2045.5,400v7M2046.5,400v7M2048.5,400v7M2050.5,400v7M2051.5,400v7M2053.5,400v7M2054.5,400v7M2056.5,400v7M2058.5,400v7M2059.5,400v7M2061.5,400v7M2062.5,400v7M2064.5,400v7M2066.5,400v7M2067.5,400v7M2069.5,400v7M2071.5,400v7M2072.5,400v7M2074.5,400v7M2075.5,400v7M2077.5,400v7M2079.5,400v7M2080.5,400v7M2082.5,400v7M2083.5,400v7M2085.5,400v7M2087.5,400v7M2088.5,400v7M2090.5,400v7M2092.5,400v7M2093.5,400v7M2095.5,400v7M2096.5,400v7M2098.5,400v7M2100.5,400v7M2101.5,400v7M2103.5,400v7M2105.5,400v7M2106.5,400v7M2108.5,400v7M2109.5,400v7M2111.5,400v7M2113.5,400v7M2114.5,400v7M2116.5,400v7M2117.5,400v7M2119.5,400v7M2121.5,400v7M2122.5,400v7M2124.5,400v7M2126.5,400v7M2127.5,400v7M2129.5,400v7M2130.5,400v7M2132.5,400v7M2134.5,400v7M2135.5,400v7M2137.5,400v7M2138.5,400v7M2140.5,400v7M2142.5,400v7M2143.5,400v7M2145.5,400v7M2147.5,400v7M2148.5,400v7M2150.5,400v7M2151.5,400v7M2153.5,400v7M2155.5,400v7M2156.5,400v7M2158.5,400v7M2160.5,400v7M2161.5,400v7M2163.5,400v7M2164.5,400v7M2166.5,400v7M2168.5,400v7M2169.5,400v7M2171.5,400v7M2172.5,400v7M2174.5,400v7M2176.5,400v7M2177.5,400v7M2179.5,400v7M2181.5,400v7M2182.5,400v7M2184.5,400v7M2185.5,400v7M2187.5,400v7M2189.5,400v7M2190.5,400v7M2192.5,400v7M2194.5,400v7M2195.5,400v7M2197.5,400v7M2198.5,400v7M2200.5,400v7M2202.5,400v7M2203.5,400v7M2205.5,400v7M2206.5,400v7M2208.5,400v7M2210.5,400v7M2211.5,400v7M2213.5,400v7M2215.5,400v7M2216.5,400v7M2218.5,400v7M2219.5,400v7M2221.5,400v7M2223.5,400v7M2224.5,400v7M2226.5,400v7M2227.5,400v7M2229.5,400v7M2231.5,400v7M2232.5,400v7M2234.5,400v7M2236.5,400v7M2237.5,400v7M2239.5,400v7M2240.5,400v7M2242.5,400v7M2244.5,400v7M2245.5,400v7M2247.5,400v7M2249.5,400v7M2250.5,400v7M2252.5,400v7M2253.5,400v7M2255.5,400v7M2257.5,400v7M2258.5,400v7M2260.5,400v7M2261.5,400v7M2263.5,400v7M2265.5,400v7M2266.5,400v7M2268.5,400v7M2270.5,400v7M2271.5,400v7M2273.5,400v7M2274.5,400v7M2276.5,400v7M2278.5,400v7M2279.5,400v7M2281.5,400v7M2282.5,400v7M2284.5,400v7M2286.5,400v7M2287.5,400v7M2289.5,400v7M2291.5,400v7M2292.5,400v7M2294.5,400v7M2295.5,400v7M2297.5,400v7M2299.5,400v7M2300.5,400v7M2302.5,400v7M2304.5,400v7M2305.5,400v7M2307.5,400v7M2308.5,400v7M2310.5,400v7M2312.5,400v7M2313.5,400v7M2315.5,400v7M2316.5,400v7M2318.5,400v7M2320.5,400v7M2321.5,400v7M2323.5,400v7M2325.5,400v7M2326.5,400v7M2328.5,400v7M2329.5,400v7M2331.5,400v7M2333.5,400v7M2334.5,400v7M2336.5,400v7M2337.5,400v7M2339.5,400v7M2341.5,400v7M2342.5,400v7M2344.5,400v7M2346.5,400v7M2347.5,400v7M2349.5,400v7M2350.5,400v7M2352.5,400v7M2354.5,400v7M2355.5,400v7M2357.5,400v7M2359.5,400v7M2360.5,400v7M2362.5,400v7M2363.5,400v7M2365.5,400v7M2367.5,400v7M2368.5,400v7M2370.5,400v7M2371.5,400v7M2373.5,400v7M2375.5,400v7M2376.5,400v7M2378.5,400v7M2380.5,400v7M2381.5,400v7M2383.5,400v7M2384.5,400v7M2386.5,400v7M2388.5,400v7M2389.5,400v7M2391.5,400v7M2392.5,400v7" stroke="#e3e7ee" stroke-width="1" fill="none"/>
<path d="M1803.60,334.00L1805.22,334.00L1806.84,334.00L1808.45,334.00L1810.07,334.00L1811.69,334.00L1813.31,334.00L1814.92,334.00L1816.54,334.00L1818.16,334.00L1819.78,334.00L1821.40,334.00L1823.01,334.00L1824.63,334.00L1826.25,334.00L1827.87,334.00L1829.49,334.00L1831.10,334.00L1832.72,334.00L1834.34,334.00L1835.96,334.00L1837.57,334.00L1839.19,334.00L1840.81,334.00L1842.43,334.00L1844.05,334.00L1845.66,334.00L1847.28,334.00L1848.90,334.00L1850.52,334.00C1851.06,334.00,1851.60,319.23,1852.14,319.23C1852.67,319.23,1853.21,334.00,1853.75,334.00L1855.37,334.00L1856.99,334.00L1858.61,334.00L1860.22,334.00L1861.84,334.00L1863.46,334.00L1865.08,334.00L1866.70,334.00L1868.31,334.00L1869.93,334.00L1871.55,334.00L1873.17,334.00L1874.79,334.00L1876.40,334.00L1878.02,334.00L1879.64,334.00C1880.18,334.00,1880.72,319.23,1881.26,319.23C1881.80,319.23,1882.34,334.00,1882.88,334.00C1883.41,334.00,1883.95,302.88,1884.49,302.88C1885.03,302.88,1885.57,334.00,1886.11,334.00L1887.73,334.00L1889.35,334.00L1890.96,334.00L1892.58,334.00L1894.20,334.00L1895.82,334.00L1897.44,334.00L1899.05,334.00L1900.67,334.00L1902.29,334.00L1903.91,334.00L1905.52,334.00L1907.14,334.00L1908.76,334.00L1910.38,334.00L1912.00,334.00L1913.61,334.00L1915.23,334.00L1916.85,334.00L1918.47,334.00L1920.09,334.00L1921.70,334.00L1923.32,334.00L1924.94,334.00L1926.56,334.00L1928.17,334.00L1929.79,334.00L1931.41,334.00L1933.03,334.00L1934.65,334.00L1936.26,334.00L1937.88,334.00L1939.50,334.00L1941.12,334.00L1942.74,334.00L1944.35,334.00L1945.97,334.00L1947.59,334.00L1949.21,334.00L1950.82,334.00L1952.44,334.00L1954.06,334.00L1955.68,334.00L1957.30,334.00L1958.91,334.00L1960.53,334.00L1962.15,334.00L1963.77,334.00L1965.39,334.00L1967.00,334.00L1968.62,334.00L1970.24,334.00L1971.86,334.00L1973.47,334.00L1975.09,334.00L1976.71,334.00C1977.25,334.00,1977.79,274.42,1978.33,274.42C1978.87,274.42,1979.41,334.00,1979.95,334.00L1981.56,334.00C1982.10,334.00,1982.64,327.71,1983.18,327.71C1983.72,327.71,1984.26,334.00,1984.80,334.00L1986.42,334.00L1988.04,334.00L1989.65,334.00L1991.27,334.00L1992.89,334.00L1994.51,334.00L1996.12,334.00L1997.74,334.00L1999.36,334.00L2000.98,334.00L2002.60,334.00L2004.21,334.00L2005.83,334.00L2007.45,334.00L2009.07,334.00L2010.69,334.00L2012.30,334.00L2013.92,334.00L2015.54,334.00L2017.16,334.00L2018.77,334.00L2020.39,334.00L2022.01,334.00L2023.63,334.00L2025.25,334.00L2026.86,334.00L2028.48,334.00L2030.10,334.00L2031.72,334.00L2033.34,334.00L2034.95,334.00L2036.57,334.00L2038.19,334.00L2039.81,334.00L2041.42,334.00L2043.04,334.00L2044.66,334.00C2045.20,334.00,2045.74,321.04,2046.28,321.04C2046.82,321.04,2047.36,334.00,2047.90,334.00L2049.51,334.00L2051.13,334.00L2052.75,334.00L2054.37,334.00L2055.99,334.00L2057.60,334.00L2059.22,334.00L2060.84,334.00L2062.46,334.00L2064.07,334.00L2065.69,334.00L2067.31,334.00L2068.93,334.00L2070.55,334.00L2072.16,334.00L2073.78,334.00L2075.40,334.00L2077.02,334.00L2078.64,334.00L2080.25,334.00L2081.87,334.00L2083.49,334.00L2085.11,334.00L2086.72,334.00L2088.34,334.00L2089.96,334.00L2091.58,334.00L2093.20,334.00L2094.81,334.00L2096.43,334.00L2098.05,334.00L2099.67,334.00L2101.29,334.00C2101.82,334.00,2102.36,273.21,2102.90,273.21C2103.44,273.21,2103.98,334.00,2104.52,334.00L2106.14,334.00L2107.76,334.00L2109.38,334.00L2110.99,334.00L2112.61,334.00L2114.23,334.00L2115.85,334.00L2117.46,334.00L2119.08,334.00L2120.70,334.00L2122.32,334.00L2123.94,334.00L2125.55,334.00L2127.17,334.00L2128.79,334.00L2130.41,334.00L2132.03,334.00L2133.64,334.00L2135.26,334.00C2135.80,334.00,2136.34,325.88,2136.88,325.88C2137.42,325.88,2137.96,334.00,2138.50,334.00L2140.11,334.00L2141.73,334.00L2143.35,334.00L2144.97,334.00L2146.59,334.00L2148.20,334.00L2149.82,334.00L2151.44,334.00L2153.06,334.00L2154.68,334.00C2155.21,334.00,2155.75,307.72,2156.29,307.72C2156.83,307.72,2157.37,334.00,2157.91,334.00L2159.53,334.00L2161.15,334.00L2162.76,334.00L2164.38,334.00L2166.00,334.00L2167.62,334.00L2169.24,334.00L2170.85,334.00L2172.47,334.00L2174.09,334.00L2175.71,334.00L2177.32,334.00L2178.94,334.00C2179.48,334.00,2180.02,314.99,2180.56,314.99C2181.10,314.99,2181.64,334.00,2182.18,334.00L2183.80,334.00L2185.41,334.00L2187.03,334.00L2188.65,334.00L2190.27,334.00L2191.89,334.00L2193.50,334.00L2195.12,334.00L2196.74,334.00L2198.36,334.00L2199.97,334.00L2201.59,334.00C2202.13,334.00,2202.67,325.88,2203.21,325.88C2203.75,325.88,2204.29,334.00,2204.83,334.00L2206.45,334.00L2208.06,334.00L2209.68,334.00L2211.30,334.00L2212.92,334.00L2214.54,334.00L2216.15,334.00L2217.77,334.00L2219.39,334.00L2221.01,334.00L2222.62,334.00L2224.24,334.00L2225.86,334.00L2227.48,334.00L2229.10,334.00L2230.71,334.00L2232.33,334.00L2233.95,334.00L2235.57,334.00L2237.19,334.00L2238.80,334.00L2240.42,334.00L2242.04,334.00L2243.66,334.00L2245.28,334.00L2246.89,334.00L2248.51,334.00L2250.13,334.00L2251.75,334.00L2253.36,334.00L2254.98,334.00L2256.60,334.00L2258.22,334.00L2259.84,334.00L2261.45,334.00L2263.07,334.00L2264.69,334.00L2266.31,334.00L2267.93,334.00L2269.54,334.00L2271.16,334.00L2272.78,334.00L2274.40,334.00L2276.01,334.00L2277.63,334.00L2279.25,334.00L2280.87,334.00L2282.49,334.00L2284.10,334.00L2285.72,334.00L2287.34,334.00L2288.96,334.00L2290.57,334.00L2292.19,334.00C2292.73,334.00,2293.27,322.86,2293.81,322.86C2294.35,322.86,2294.89,334.00,2295.43,334.00L2297.05,334.00C2297.59,334.00,2298.12,326.50,2298.66,326.50C2299.20,326.50,2299.74,334.00,2300.28,334.00L2301.90,334.00L2303.52,334.00L2305.14,334.00L2306.75,334.00L2308.37,334.00L2309.99,334.00L2311.61,334.00L2313.22,334.00L2314.84,334.00L2316.46,334.00L2318.08,334.00L2319.70,334.00L2321.31,334.00L2322.93,334.00L2324.55,334.00L2326.17,334.00L2327.79,334.00L2329.40,334.00L2331.02,334.00L2332.64,334.00L2334.26,334.00L2335.88,334.00L2337.49,334.00L2339.11,334.00L2340.73,334.00L2342.35,334.00L2343.96,334.00L2345.58,334.00L2347.20,334.00L2348.82,334.00L2350.44,334.00L2352.05,334.00L2353.67,334.00L2355.29,334.00L2356.91,334.00L2358.53,334.00L2360.14,334.00L2361.76,334.00L2363.38,334.00L2365.00,334.00L2366.61,334.00L2368.23,334.00L2369.85,334.00L2371.47,334.00L2373.09,334.00L2374.70,334.00L2376.32,334.00L2377.94,334.00L2379.56,334.00L2381.18,334.00L2382.79,334.00L2384.41,334.00L2386.03,334.00L2387.65,334.00L2389.26,334.00L2390.88,334.00L2392.50,334.00" stroke="#cbd3de" stroke-width="1.6" stroke-dasharray="6 2.75" fill="none"/>
<defs><linearGradient id="ggp" x1="0" y1="0" x2="0" y2="1"><stop offset="0" stop-color="#10b981" stop-opacity="0.22"/><stop offset="1" stop-color="#10b981" stop-opacity="0"/></linearGradient></defs>
<path d="M1803.60,334.00L1805.22,334.00L1806.84,334.00L1808.45,334.00L1810.07,334.00L1811.69,334.00L1813.31,334.00L1814.92,334.00L1816.54,334.00L1818.16,334.00L1819.78,334.00L1821.40,334.00L1823.01,334.00C1823.55,334.00,1824.09,321.04,1824.63,321.04C1825.17,321.04,1825.71,334.00,1826.25,334.00C1826.79,334.00,1827.33,324.07,1827.87,324.07C1828.41,324.07,1828.95,334.00,1829.49,334.00L1831.10,334.00L1832.72,334.00L1834.34,334.00L1835.96,334.00L1837.57,334.00L1839.19,334.00L1840.81,334.00L1842.43,334.00C1842.97,334.00,1843.51,331.34,1844.05,331.34C1844.59,331.34,1845.12,334.00,1845.66,334.00L1847.28,334.00L1848.90,334.00L1850.52,334.00L1852.14,334.00L1853.75,334.00L1855.37,334.00L1856.99,334.00L1858.61,334.00C1859.15,334.00,1859.69,321.04,1860.22,321.04C1860.76,321.04,1861.30,334.00,1861.84,334.00L1863.46,334.00L1865.08,334.00L1866.70,334.00L1868.31,334.00L1869.93,334.00C1870.47,334.00,1871.01,319.83,1871.55,319.83L1873.17,319.83C1873.71,319.83,1874.25,334.00,1874.79,334.00L1876.40,334.00L1878.02,334.00L1879.64,334.00C1880.18,334.00,1880.72,328.31,1881.26,328.31C1881.80,328.31,1882.34,334.00,1882.88,334.00L1884.49,334.00L1886.11,334.00C1886.65,334.00,1887.19,330.73,1887.73,330.73C1888.27,330.73,1888.81,334.00,1889.35,334.00L1890.96,334.00C1891.50,334.00,1892.04,331.34,1892.58,331.34C1893.12,331.34,1893.66,334.00,1894.20,334.00L1895.82,334.00L1897.44,334.00L1899.05,334.00L1900.67,334.00L1902.29,334.00C1902.83,334.00,1903.37,294.40,1903.91,294.40C1904.45,294.40,1904.99,317.50,1905.52,317.50C1906.06,317.50,1906.60,282.30,1907.14,282.30C1907.68,282.30,1908.22,334.00,1908.76,334.00L1910.38,334.00L1912.00,334.00L1913.61,334.00L1915.23,334.00L1916.85,334.00L1918.47,334.00C1919.01,334.00,1919.55,324.07,1920.09,324.07C1920.62,324.07,1921.16,334.00,1921.70,334.00L1923.32,334.00L1924.94,334.00L1926.56,334.00L1928.17,334.00C1928.71,334.00,1929.25,311.36,1929.79,311.36C1930.33,311.36,1930.87,334.00,1931.41,334.00L1933.03,334.00L1934.65,334.00L1936.26,334.00C1936.80,334.00,1937.34,320.44,1937.88,320.44C1938.42,320.44,1938.96,334.00,1939.50,334.00L1941.12,334.00L1942.74,334.00L1944.35,334.00C1944.89,334.00,1945.43,318.02,1945.97,318.02C1946.51,318.02,1947.05,334.00,1947.59,334.00L1949.21,334.00L1950.82,334.00L1952.44,334.00C1952.98,334.00,1953.52,327.10,1954.06,327.10C1954.60,327.10,1955.14,334.00,1955.68,334.00L1957.30,334.00L1958.91,334.00L1960.53,334.00C1961.07,334.00,1961.61,300.46,1962.15,300.46C1962.69,300.46,1963.23,334.00,1963.77,334.00L1965.39,334.00L1967.00,334.00L1968.62,334.00L1970.24,334.00L1971.86,334.00L1973.47,334.00L1975.09,334.00L1976.71,334.00L1978.33,334.00L1979.95,334.00L1981.56,334.00L1983.18,334.00L1984.80,334.00L1986.42,334.00L1988.04,334.00L1989.65,334.00C1990.19,334.00,1990.73,294.40,1991.27,294.40C1991.81,294.40,1992.35,334.00,1992.89,334.00L1994.51,334.00L1996.12,334.00C1996.66,334.00,1997.20,295.61,1997.74,295.61C1998.28,295.61,1998.82,334.00,1999.36,334.00L2000.98,334.00L2002.60,334.00L2004.21,334.00L2005.83,334.00L2007.45,334.00L2009.07,334.00L2010.69,334.00L2012.30,334.00L2013.92,334.00L2015.54,334.00L2017.16,334.00C2017.70,334.00,2018.24,281.09,2018.77,281.09C2019.31,281.09,2019.85,334.00,2020.39,334.00L2022.01,334.00L2023.63,334.00L2025.25,334.00L2026.86,334.00L2028.48,334.00C2029.02,334.00,2029.56,324.67,2030.10,324.67L2031.72,324.67C2032.26,324.67,2032.80,334.00,2033.34,334.00L2034.95,334.00L2036.57,334.00L2038.19,334.00L2039.81,334.00C2040.35,334.00,2040.89,334.97,2041.42,334.97C2041.96,334.97,2042.50,334.00,2043.04,334.00L2044.66,334.00L2046.28,334.00L2047.90,334.00L2049.51,334.00L2051.13,334.00C2051.67,334.00,2052.21,328.92,2052.75,328.92C2053.29,328.92,2053.83,334.00,2054.37,334.00L2055.99,334.00L2057.60,334.00L2059.22,334.00L2060.84,334.00L2062.46,334.00L2064.07,334.00C2064.61,334.00,2065.15,370.08,2065.69,370.08C2066.23,370.08,2066.77,334.00,2067.31,334.00L2068.93,334.00L2070.55,334.00L2072.16,334.00C2072.70,334.00,2073.24,325.28,2073.78,325.28C2074.32,325.28,2074.86,334.00,2075.40,334.00L2077.02,334.00L2078.64,334.00L2080.25,334.00L2081.87,334.00L2083.49,334.00L2085.11,334.00C2085.65,334.00,2086.19,331.34,2086.72,331.34C2087.26,331.34,2087.80,334.00,2088.34,334.00C2088.88,334.00,2089.42,302.88,2089.96,302.88C2090.50,302.88,2091.04,334.00,2091.58,334.00L2093.20,334.00L2094.81,334.00L2096.43,334.00L2098.05,334.00L2099.67,334.00L2101.29,334.00L2102.90,334.00L2104.52,334.00L2106.14,334.00L2107.76,334.00L2109.38,334.00L2110.99,334.00L2112.61,334.00L2114.23,334.00C2114.77,334.00,2115.31,333.12,2115.85,333.12C2116.39,333.12,2116.93,334.00,2117.46,334.00L2119.08,334.00L2120.70,334.00L2122.32,334.00L2123.94,334.00L2125.55,334.00L2127.17,334.00L2128.79,334.00L2130.41,334.00L2132.03,334.00L2133.64,334.00L2135.26,334.00L2136.88,334.00L2138.50,334.00L2140.11,334.00C2140.65,334.00,2141.19,329.52,2141.73,329.52C2142.27,329.52,2142.81,334.00,2143.35,334.00C2143.89,334.00,2144.43,325.28,2144.97,325.28C2145.51,325.28,2146.05,334.00,2146.59,334.00L2148.20,334.00L2149.82,334.00L2151.44,334.00L2153.06,334.00L2154.68,334.00C2155.21,334.00,2155.75,320.44,2156.29,320.44C2156.83,320.44,2157.37,334.00,2157.91,334.00L2159.53,334.00L2161.15,334.00L2162.76,334.00L2164.38,334.00L2166.00,334.00L2167.62,334.00L2169.24,334.00L2170.85,334.00L2172.47,334.00L2174.09,334.00L2175.71,334.00C2176.25,334.00,2176.79,333.34,2177.32,333.34C2177.86,333.34,2178.40,334.00,2178.94,334.00L2180.56,334.00L2182.18,334.00L2183.80,334.00L2185.41,334.00L2187.03,334.00L2188.65,334.00L2190.27,334.00L2191.89,334.00L2193.50,334.00L2195.12,334.00L2196.74,334.00C2197.28,334.00,2197.82,333.34,2198.36,333.34C2198.90,333.34,2199.44,334.00,2199.97,334.00L2201.59,334.00L2203.21,334.00L2204.83,334.00L2206.45,334.00L2208.06,334.00L2209.68,334.00L2211.30,334.00L2212.92,334.00L2214.54,334.00L2216.15,334.00L2217.77,334.00L2219.39,334.00L2221.01,334.00L2222.62,334.00C2223.16,334.00,2223.70,325.88,2224.24,325.88C2224.78,325.88,2225.32,334.00,2225.86,334.00L2227.48,334.00L2229.10,334.00C2229.64,334.00,2230.18,332.57,2230.71,332.57C2231.25,332.57,2231.79,334.00,2232.33,334.00L2233.95,334.00L2235.57,334.00L2237.19,334.00L2238.80,334.00L2240.42,334.00C2240.96,334.00,2241.50,327.71,2242.04,327.71C2242.58,327.71,2243.12,334.00,2243.66,334.00L2245.28,334.00C2245.81,334.00,2246.35,317.77,2246.89,317.77C2247.43,317.77,2247.97,334.00,2248.51,334.00L2250.13,334.00L2251.75,334.00L2253.36,334.00L2254.98,334.00C2255.52,334.00,2256.06,332.90,2256.60,332.90C2257.14,332.90,2257.68,334.00,2258.22,334.00L2259.84,334.00L2261.45,334.00L2263.07,334.00C2263.61,334.00,2264.15,332.57,2264.69,332.57C2265.23,332.57,2265.77,334.00,2266.31,334.00L2267.93,334.00L2269.54,334.00L2271.16,334.00L2272.78,334.00L2274.40,334.00L2276.01,334.00L2277.63,334.00L2279.25,334.00L2280.87,334.00L2282.49,334.00L2284.10,334.00L2285.72,334.00L2287.34,334.00L2288.96,334.00L2290.57,334.00C2291.11,334.00,2291.65,327.10,2292.19,327.10L2293.81,327.10C2294.35,327.10,2294.89,334.00,2295.43,334.00L2297.05,334.00L2298.66,334.00L2300.28,334.00L2301.90,334.00L2303.52,334.00L2305.14,334.00L2306.75,334.00L2308.37,334.00L2309.99,334.00L2311.61,334.00L2313.22,334.00L2314.84,334.00L2316.46,334.00L2318.08,334.00L2319.70,334.00L2321.31,334.00L2322.93,334.00L2324.55,334.00L2326.17,334.00L2327.79,334.00L2329.40,334.00L2331.02,334.00C2331.56,334.00,2332.10,322.25,2332.64,322.25C2333.18,322.25,2333.72,334.00,2334.26,334.00C2334.80,334.00,2335.34,319.83,2335.88,319.83C2336.41,319.83,2336.95,334.00,2337.49,334.00L2339.11,334.00L2340.73,334.00L2342.35,334.00L2343.96,334.00L2345.58,334.00C2346.12,334.00,2346.66,319.23,2347.20,319.23C2347.74,319.23,2348.28,334.00,2348.82,334.00L2350.44,334.00L2352.05,334.00L2353.67,334.00L2355.29,334.00L2356.91,334.00L2358.53,334.00C2359.06,334.00,2359.60,332.57,2360.14,332.57C2360.68,332.57,2361.22,334.00,2361.76,334.00L2363.38,334.00L2365.00,334.00L2366.61,334.00L2368.23,334.00L2369.85,334.00L2371.47,334.00L2373.09,334.00L2374.70,334.00C2375.24,334.00,2375.78,333.12,2376.32,333.12C2376.86,333.12,2377.40,334.00,2377.94,334.00C2378.48,334.00,2379.02,321.04,2379.56,321.04C2380.10,321.04,2380.64,334.00,2381.18,334.00L2382.79,334.00L2384.41,334.00L2386.03,334.00L2387.65,334.00L2389.26,334.00L2390.88,334.00L2392.50,334.00L2392.50,334.00L1803.60,334.00Z" fill="url(#ggp)" stroke="none"/>
<path d="M1803.60,334.00L1805.22,334.00L1806.84,334.00L1808.45,334.00L1810.07,334.00L1811.69,334.00L1813.31,334.00L1814.92,334.00L1816.54,334.00L1818.16,334.00L1819.78,334.00L1821.40,334.00L1823.01,334.00C1823.55,334.00,1824.09,321.04,1824.63,321.04C1825.17,321.04,1825.71,334.00,1826.25,334.00C1826.79,334.00,1827.33,324.07,1827.87,324.07C1828.41,324.07,1828.95,334.00,1829.49,334.00L1831.10,334.00L1832.72,334.00L1834.34,334.00L1835.96,334.00L1837.57,334.00L1839.19,334.00L1840.81,334.00L1842.43,334.00C1842.97,334.00,1843.51,331.34,1844.05,331.34C1844.59,331.34,1845.12,334.00,1845.66,334.00L1847.28,334.00L1848.90,334.00L1850.52,334.00L1852.14,334.00L1853.75,334.00L1855.37,334.00L1856.99,334.00L1858.61,334.00C1859.15,334.00,1859.69,321.04,1860.22,321.04C1860.76,321.04,1861.30,334.00,1861.84,334.00L1863.46,334.00L1865.08,334.00L1866.70,334.00L1868.31,334.00L1869.93,334.00C1870.47,334.00,1871.01,319.83,1871.55,319.83L1873.17,319.83C1873.71,319.83,1874.25,334.00,1874.79,334.00L1876.40,334.00L1878.02,334.00L1879.64,334.00C1880.18,334.00,1880.72,328.31,1881.26,328.31C1881.80,328.31,1882.34,334.00,1882.88,334.00L1884.49,334.00L1886.11,334.00C1886.65,334.00,1887.19,330.73,1887.73,330.73C1888.27,330.73,1888.81,334.00,1889.35,334.00L1890.96,334.00C1891.50,334.00,1892.04,331.34,1892.58,331.34C1893.12,331.34,1893.66,334.00,1894.20,334.00L1895.82,334.00L1897.44,334.00L1899.05,334.00L1900.67,334.00L1902.29,334.00C1902.83,334.00,1903.37,294.40,1903.91,294.40C1904.45,294.40,1904.99,317.50,1905.52,317.50C1906.06,317.50,1906.60,282.30,1907.14,282.30C1907.68,282.30,1908.22,334.00,1908.76,334.00L1910.38,334.00L1912.00,334.00L1913.61,334.00L1915.23,334.00L1916.85,334.00L1918.47,334.00C1919.01,334.00,1919.55,324.07,1920.09,324.07C1920.62,324.07,1921.16,334.00,1921.70,334.00L1923.32,334.00L1924.94,334.00L1926.56,334.00L1928.17,334.00C1928.71,334.00,1929.25,311.36,1929.79,311.36C1930.33,311.36,1930.87,334.00,1931.41,334.00L1933.03,334.00L1934.65,334.00L1936.26,334.00C1936.80,334.00,1937.34,320.44,1937.88,320.44C1938.42,320.44,1938.96,334.00,1939.50,334.00L1941.12,334.00L1942.74,334.00L1944.35,334.00C1944.89,334.00,1945.43,318.02,1945.97,318.02C1946.51,318.02,1947.05,334.00,1947.59,334.00L1949.21,334.00L1950.82,334.00L1952.44,334.00C1952.98,334.00,1953.52,327.10,1954.06,327.10C1954.60,327.10,1955.14,334.00,1955.68,334.00L1957.30,334.00L1958.91,334.00L1960.53,334.00C1961.07,334.00,1961.61,300.46,1962.15,300.46C1962.69,300.46,1963.23,334.00,1963.77,334.00L1965.39,334.00L1967.00,334.00L1968.62,334.00L1970.24,334.00L1971.86,334.00L1973.47,334.00L1975.09,334.00L1976.71,334.00L1978.33,334.00L1979.95,334.00L1981.56,334.00L1983.18,334.00L1984.80,334.00L1986.42,334.00L1988.04,334.00L1989.65,334.00C1990.19,334.00,1990.73,294.40,1991.27,294.40C1991.81,294.40,1992.35,334.00,1992.89,334.00L1994.51,334.00L1996.12,334.00C1996.66,334.00,1997.20,295.61,1997.74,295.61C1998.28,295.61,1998.82,334.00,1999.36,334.00L2000.98,334.00L2002.60,334.00L2004.21,334.00L2005.83,334.00L2007.45,334.00L2009.07,334.00L2010.69,334.00L2012.30,334.00L2013.92,334.00L2015.54,334.00L2017.16,334.00C2017.70,334.00,2018.24,281.09,2018.77,281.09C2019.31,281.09,2019.85,334.00,2020.39,334.00L2022.01,334.00L2023.63,334.00L2025.25,334.00L2026.86,334.00L2028.48,334.00C2029.02,334.00,2029.56,324.67,2030.10,324.67L2031.72,324.67C2032.26,324.67,2032.80,334.00,2033.34,334.00L2034.95,334.00L2036.57,334.00L2038.19,334.00L2039.81,334.00C2040.35,334.00,2040.89,334.97,2041.42,334.97C2041.96,334.97,2042.50,334.00,2043.04,334.00L2044.66,334.00L2046.28,334.00L2047.90,334.00L2049.51,334.00L2051.13,334.00C2051.67,334.00,2052.21,328.92,2052.75,328.92C2053.29,328.92,2053.83,334.00,2054.37,334.00L2055.99,334.00L2057.60,334.00L2059.22,334.00L2060.84,334.00L2062.46,334.00L2064.07,334.00C2064.61,334.00,2065.15,370.08,2065.69,370.08C2066.23,370.08,2066.77,334.00,2067.31,334.00L2068.93,334.00L2070.55,334.00L2072.16,334.00C2072.70,334.00,2073.24,325.28,2073.78,325.28C2074.32,325.28,2074.86,334.00,2075.40,334.00L2077.02,334.00L2078.64,334.00L2080.25,334.00L2081.87,334.00L2083.49,334.00L2085.11,334.00C2085.65,334.00,2086.19,331.34,2086.72,331.34C2087.26,331.34,2087.80,334.00,2088.34,334.00C2088.88,334.00,2089.42,302.88,2089.96,302.88C2090.50,302.88,2091.04,334.00,2091.58,334.00L2093.20,334.00L2094.81,334.00L2096.43,334.00L2098.05,334.00L2099.67,334.00L2101.29,334.00L2102.90,334.00L2104.52,334.00L2106.14,334.00L2107.76,334.00L2109.38,334.00L2110.99,334.00L2112.61,334.00L2114.23,334.00C2114.77,334.00,2115.31,333.12,2115.85,333.12C2116.39,333.12,2116.93,334.00,2117.46,334.00L2119.08,334.00L2120.70,334.00L2122.32,334.00L2123.94,334.00L2125.55,334.00L2127.17,334.00L2128.79,334.00L2130.41,334.00L2132.03,334.00L2133.64,334.00L2135.26,334.00L2136.88,334.00L2138.50,334.00L2140.11,334.00C2140.65,334.00,2141.19,329.52,2141.73,329.52C2142.27,329.52,2142.81,334.00,2143.35,334.00C2143.89,334.00,2144.43,325.28,2144.97,325.28C2145.51,325.28,2146.05,334.00,2146.59,334.00L2148.20,334.00L2149.82,334.00L2151.44,334.00L2153.06,334.00L2154.68,334.00C2155.21,334.00,2155.75,320.44,2156.29,320.44C2156.83,320.44,2157.37,334.00,2157.91,334.00L2159.53,334.00L2161.15,334.00L2162.76,334.00L2164.38,334.00L2166.00,334.00L2167.62,334.00L2169.24,334.00L2170.85,334.00L2172.47,334.00L2174.09,334.00L2175.71,334.00C2176.25,334.00,2176.79,333.34,2177.32,333.34C2177.86,333.34,2178.40,334.00,2178.94,334.00L2180.56,334.00L2182.18,334.00L2183.80,334.00L2185.41,334.00L2187.03,334.00L2188.65,334.00L2190.27,334.00L2191.89,334.00L2193.50,334.00L2195.12,334.00L2196.74,334.00C2197.28,334.00,2197.82,333.34,2198.36,333.34C2198.90,333.34,2199.44,334.00,2199.97,334.00L2201.59,334.00L2203.21,334.00L2204.83,334.00L2206.45,334.00L2208.06,334.00L2209.68,334.00L2211.30,334.00L2212.92,334.00L2214.54,334.00L2216.15,334.00L2217.77,334.00L2219.39,334.00L2221.01,334.00L2222.62,334.00C2223.16,334.00,2223.70,325.88,2224.24,325.88C2224.78,325.88,2225.32,334.00,2225.86,334.00L2227.48,334.00L2229.10,334.00C2229.64,334.00,2230.18,332.57,2230.71,332.57C2231.25,332.57,2231.79,334.00,2232.33,334.00L2233.95,334.00L2235.57,334.00L2237.19,334.00L2238.80,334.00L2240.42,334.00C2240.96,334.00,2241.50,327.71,2242.04,327.71C2242.58,327.71,2243.12,334.00,2243.66,334.00L2245.28,334.00C2245.81,334.00,2246.35,317.77,2246.89,317.77C2247.43,317.77,2247.97,334.00,2248.51,334.00L2250.13,334.00L2251.75,334.00L2253.36,334.00L2254.98,334.00C2255.52,334.00,2256.06,332.90,2256.60,332.90C2257.14,332.90,2257.68,334.00,2258.22,334.00L2259.84,334.00L2261.45,334.00L2263.07,334.00C2263.61,334.00,2264.15,332.57,2264.69,332.57C2265.23,332.57,2265.77,334.00,2266.31,334.00L2267.93,334.00L2269.54,334.00L2271.16,334.00L2272.78,334.00L2274.40,334.00L2276.01,334.00L2277.63,334.00L2279.25,334.00L2280.87,334.00L2282.49,334.00L2284.10,334.00L2285.72,334.00L2287.34,334.00L2288.96,334.00L2290.57,334.00C2291.11,334.00,2291.65,327.10,2292.19,327.10L2293.81,327.10C2294.35,327.10,2294.89,334.00,2295.43,334.00L2297.05,334.00L2298.66,334.00L2300.28,334.00L2301.90,334.00L2303.52,334.00L2305.14,334.00L2306.75,334.00L2308.37,334.00L2309.99,334.00L2311.61,334.00L2313.22,334.00L2314.84,334.00L2316.46,334.00L2318.08,334.00L2319.70,334.00L2321.31,334.00L2322.93,334.00L2324.55,334.00L2326.17,334.00L2327.79,334.00L2329.40,334.00L2331.02,334.00C2331.56,334.00,2332.10,322.25,2332.64,322.25C2333.18,322.25,2333.72,334.00,2334.26,334.00C2334.80,334.00,2335.34,319.83,2335.88,319.83C2336.41,319.83,2336.95,334.00,2337.49,334.00L2339.11,334.00L2340.73,334.00L2342.35,334.00L2343.96,334.00L2345.58,334.00C2346.12,334.00,2346.66,319.23,2347.20,319.23C2347.74,319.23,2348.28,334.00,2348.82,334.00L2350.44,334.00L2352.05,334.00L2353.67,334.00L2355.29,334.00L2356.91,334.00L2358.53,334.00C2359.06,334.00,2359.60,332.57,2360.14,332.57C2360.68,332.57,2361.22,334.00,2361.76,334.00L2363.38,334.00L2365.00,334.00L2366.61,334.00L2368.23,334.00L2369.85,334.00L2371.47,334.00L2373.09,334.00L2374.70,334.00C2375.24,334.00,2375.78,333.12,2376.32,333.12C2376.86,333.12,2377.40,334.00,2377.94,334.00C2378.48,334.00,2379.02,321.04,2379.56,321.04C2380.10,321.04,2380.64,334.00,2381.18,334.00L2382.79,334.00L2384.41,334.00L2386.03,334.00L2387.65,334.00L2389.26,334.00L2390.88,334.00L2392.50,334.00" stroke="#10b981" stroke-width="2.8" fill="none" stroke-linejoin="round"/>
<line x1="431.3" x2="1020.2" y1="605.5" y2="605.5" stroke="#ebeef3" stroke-width="1" stroke-dasharray="2.8 3.8"/>
<line x1="431.3" x2="1020.2" y1="684.75" y2="684.75" stroke="#ebeef3" stroke-width="1" stroke-dasharray="2.8 3.8"/>
<line x1="431.3" x2="1020.2" y1="764.0" y2="764.0" stroke="#ebeef3" stroke-width="1" stroke-dasharray="2.8 3.8"/>
<line x1="431.3" x2="1020.2" y1="843.25" y2="843.25" stroke="#ebeef3" stroke-width="1" stroke-dasharray="2.8 3.8"/>
<line x1="431.3" x2="1020.2" y1="922.5" y2="922.5" stroke="#ebeef3" stroke-width="1" stroke-dasharray="2.8 3.8"/>
<path d="M431.5,922v7M433.5,922v7M435.5,922v7M436.5,922v7M438.5,922v7M439.5,922v7M441.5,922v7M443.5,922v7M444.5,922v7M446.5,922v7M447.5,922v7M449.5,922v7M451.5,922v7M452.5,922v7M454.5,922v7M456.5,922v7M457.5,922v7M459.5,922v7M460.5,922v7M462.5,922v7M464.5,922v7M465.5,922v7M467.5,922v7M469.5,922v7M470.5,922v7M472.5,922v7M473.5,922v7M475.5,922v7M477.5,922v7M478.5,922v7M480.5,922v7M481.5,922v7M483.5,922v7M485.5,922v7M486.5,922v7M488.5,922v7M490.5,922v7M491.5,922v7M493.5,922v7M494.5,922v7M496.5,922v7M498.5,922v7M499.5,922v7M501.5,922v7M502.5,922v7M504.5,922v7M506.5,922v7M507.5,922v7M509.5,922v7M511.5,922v7M512.5,922v7M514.5,922v7M515.5,922v7M517.5,922v7M519.5,922v7M520.5,922v7M522.5,922v7M524.5,922v7M525.5,922v7M527.5,922v7M528.5,922v7M530.5,922v7M532.5,922v7M533.5,922v7M535.5,922v7M536.5,922v7M538.5,922v7M540.5,922v7M541.5,922v7M543.5,922v7M545.5,922v7M546.5,922v7M548.5,922v7M549.5,922v7M551.5,922v7M553.5,922v7M554.5,922v7M556.5,922v7M557.5,922v7M559.5,922v7M561.5,922v7M562.5,922v7M564.5,922v7M566.5,922v7M567.5,922v7M569.5,922v7M570.5,922v7M572.5,922v7M574.5,922v7M575.5,922v7M577.5,922v7M579.5,922v7M580.5,922v7M582.5,922v7M583.5,922v7M585.5,922v7M587.5,922v7M588.5,922v7M590.5,922v7M591.5,922v7M593.5,922v7M595.5,922v7M596.5,922v7M598.5,922v7M600.5,922v7M601.5,922v7M603.5,922v7M604.5,922v7M606.5,922v7M608.5,922v7M609.5,922v7M611.5,922v7M612.5,922v7M614.5,922v7M616.5,922v7M617.5,922v7M619.5,922v7M621.5,922v7M622.5,922v7M624.5,922v7M625.5,922v7M627.5,922v7M629.5,922v7M630.5,922v7M632.5,922v7M634.5,922v7M635.5,922v7M637.5,922v7M638.5,922v7M640.5,922v7M642.5,922v7M643.5,922v7M645.5,922v7M646.5,922v7M648.5,922v7M650.5,922v7M651.5,922v7M653.5,922v7M655.5,922v7M656.5,922v7M658.5,922v7M659.5,922v7M661.5,922v7M663.5,922v7M664.5,922v7M666.5,922v7M668.5,922v7M669.5,922v7M671.5,922v7M672.5,922v7M674.5,922v7M676.5,922v7M677.5,922v7M679.5,922v7M680.5,922v7M682.5,922v7M684.5,922v7M685.5,922v7M687.5,922v7M689.5,922v7M690.5,922v7M692.5,922v7M693.5,922v7M695.5,922v7M697.5,922v7M698.5,922v7M700.5,922v7M701.5,922v7M703.5,922v7M705.5,922v7M706.5,922v7M708.5,922v7M710.5,922v7M711.5,922v7M713.5,922v7M714.5,922v7M716.5,922v7M718.5,922v7M719.5,922v7M721.5,922v7M723.5,922v7M724.5,922v7M726.5,922v7M727.5,922v7M729.5,922v7M731.5,922v7M732.5,922v7M734.5,922v7M735.5,922v7M737.5,922v7M739.5,922v7M740.5,922v7M742.5,922v7M744.5,922v7M745.5,922v7M747.5,922v7M748.5,922v7M750.5,922v7M752.5,922v7M753.5,922v7M755.5,922v7M756.5,922v7M758.5,922v7M760.5,922v7M761.5,922v7M763.5,922v7M765.5,922v7M766.5,922v7M768.5,922v7M769.5,922v7M771.5,922v7M773.5,922v7M774.5,922v7M776.5,922v7M778.5,922v7M779.5,922v7M781.5,922v7M782.5,922v7M784.5,922v7M786.5,922v7M787.5,922v7M789.5,922v7M790.5,922v7M792.5,922v7M794.5,922v7M795.5,922v7M797.5,922v7M799.5,922v7M800.5,922v7M802.5,922v7M803.5,922v7M805.5,922v7M807.5,922v7M808.5,922v7M810.5,922v7M811.5,922v7M813.5,922v7M815.5,922v7M816.5,922v7M818.5,922v7M820.5,922v7M821.5,922v7M823.5,922v7M824.5,922v7M826.5,922v7M828.5,922v7M829.5,922v7M831.5,922v7M833.5,922v7M834.5,922v7M836.5,922v7M837.5,922v7M839.5,922v7M841.5,922v7M842.5,922v7M844.5,922v7M845.5,922v7M847.5,922v7M849.5,922v7M850.5,922v7M852.5,922v7M854.5,922v7M855.5,922v7M857.5,922v7M858.5,922v7M860.5,922v7M862.5,922v7M863.5,922v7M865.5,922v7M867.5,922v7M868.5,922v7M870.5,922v7M871.5,922v7M873.5,922v7M875.5,922v7M876.5,922v7M878.5,922v7M879.5,922v7M881.5,922v7M883.5,922v7M884.5,922v7M886.5,922v7M888.5,922v7M889.5,922v7M891.5,922v7M892.5,922v7M894.5,922v7M896.5,922v7M897.5,922v7M899.5,922v7M900.5,922v7M902.5,922v7M904.5,922v7M905.5,922v7M907.5,922v7M909.5,922v7M910.5,922v7M912.5,922v7M913.5,922v7M915.5,922v7M917.5,922v7M918.5,922v7M920.5,922v7M922.5,922v7M923.5,922v7M925.5,922v7M926.5,922v7M928.5,922v7M930.5,922v7M931.5,922v7M933.5,922v7M934.5,922v7M936.5,922v7M938.5,922v7M939.5,922v7M941.5,922v7M943.5,922v7M944.5,922v7M946.5,922v7M947.5,922v7M949.5,922v7M951.5,922v7M952.5,922v7M954.5,922v7M955.5,922v7M957.5,922v7M959.5,922v7M960.5,922v7M962.5,922v7M964.5,922v7M965.5,922v7M967.5,922v7M968.5,922v7M970.5,922v7M972.5,922v7M973.5,922v7M975.5,922v7M977.5,922v7M978.5,922v7M980.5,922v7M981.5,922v7M983.5,922v7M985.5,922v7M986.5,922v7M988.5,922v7M989.5,922v7M991.5,922v7M993.5,922v7M994.5,922v7M996.5,922v7M998.5,922v7M999.5,922v7M1001.5,922v7M1002.5,922v7M1004.5,922v7M1006.5,922v7M1007.5,922v7M1009.5,922v7M1010.5,922v7M1012.5,922v7M1014.5,922v7M1015.5,922v7M1017.5,922v7M1019.5,922v7M1020.5,922v7" stroke="#e3e7ee" stroke-width="1" fill="none"/>
<path d="M431.30,922.00L432.92,922.00L434.54,922.00L436.15,922.00L437.77,922.00L439.39,922.00L441.01,922.00L442.62,922.00L444.24,922.00L445.86,922.00L447.48,922.00L449.10,922.00L450.71,922.00L452.33,922.00L453.95,922.00L455.57,922.00L457.19,922.00L458.80,922.00L460.42,922.00L462.04,922.00L463.66,922.00L465.28,922.00L466.89,922.00L468.51,922.00C469.05,922.00,469.59,913.55,470.13,913.55C470.67,913.55,471.21,922.00,471.75,922.00L473.36,922.00L474.98,922.00L476.60,922.00L478.22,922.00L479.84,922.00L481.45,922.00L483.07,922.00L484.69,922.00L486.31,922.00L487.93,922.00L489.54,922.00L491.16,922.00L492.78,922.00L494.40,922.00L496.01,922.00L497.63,922.00L499.25,922.00L500.87,922.00L502.49,922.00L504.10,922.00L505.72,922.00L507.34,922.00C507.88,922.00,508.42,816.17,508.96,816.17C509.50,816.17,510.04,922.00,510.58,922.00C511.11,922.00,511.65,728.00,512.19,728.00C512.73,728.00,513.27,922.00,513.81,922.00L515.43,922.00L517.05,922.00L518.66,922.00L520.28,922.00L521.90,922.00L523.52,922.00L525.14,922.00L526.75,922.00L528.37,922.00L529.99,922.00L531.61,922.00L533.23,922.00L534.84,922.00L536.46,922.00L538.08,922.00L539.70,922.00L541.31,922.00L542.93,922.00L544.55,922.00L546.17,922.00L547.79,922.00L549.40,922.00L551.02,922.00L552.64,922.00L554.26,922.00L555.88,922.00L557.49,922.00L559.11,922.00L560.73,922.00L562.35,922.00L563.96,922.00L565.58,922.00L567.20,922.00L568.82,922.00L570.44,922.00L572.05,922.00L573.67,922.00L575.29,922.00L576.91,922.00L578.53,922.00L580.14,922.00L581.76,922.00L583.38,922.00L585.00,922.00L586.61,922.00L588.23,922.00L589.85,922.00L591.47,922.00L593.09,922.00L594.70,922.00L596.32,922.00L597.94,922.00L599.56,922.00L601.18,922.00L602.79,922.00L604.41,922.00C604.95,922.00,605.49,614.40,606.03,614.40C606.57,614.40,607.11,922.00,607.65,922.00L609.26,922.00L610.88,922.00L612.50,922.00L614.12,922.00L615.74,922.00L617.35,922.00L618.97,922.00L620.59,922.00L622.21,922.00L623.83,922.00L625.44,922.00L627.06,922.00L628.68,922.00L630.30,922.00L631.91,922.00L633.53,922.00L635.15,922.00L636.77,922.00L638.39,922.00L640.00,922.00L641.62,922.00L643.24,922.00L644.86,922.00L646.48,922.00L648.09,922.00L649.71,922.00L651.33,922.00L652.95,922.00L654.56,922.00L656.18,922.00L657.80,922.00L659.42,922.00L661.04,922.00L662.65,922.00L664.27,922.00L665.89,922.00L667.51,922.00L669.12,922.00L670.74,922.00L672.36,922.00C672.90,922.00,673.44,829.12,673.98,829.12C674.52,829.12,675.06,922.00,675.60,922.00L677.21,922.00L678.83,922.00L680.45,922.00L682.07,922.00L683.69,922.00L685.30,922.00L686.92,922.00L688.54,922.00L690.16,922.00L691.78,922.00L693.39,922.00L695.01,922.00L696.63,922.00L698.25,922.00L699.86,922.00L701.48,922.00L703.10,922.00L704.72,922.00L706.34,922.00L707.95,922.00L709.57,922.00L711.19,922.00L712.81,922.00L714.43,922.00L716.04,922.00L717.66,922.00L719.28,922.00L720.90,922.00L722.51,922.00L724.13,922.00L725.75,922.00L727.37,922.00L728.99,922.00C729.52,922.00,730.06,722.40,730.60,722.40C731.14,722.40,731.68,922.00,732.22,922.00L733.84,922.00L735.46,922.00L737.08,922.00L738.69,922.00L740.31,922.00L741.93,922.00L743.55,922.00L745.16,922.00L746.78,922.00L748.40,922.00L750.02,922.00L751.64,922.00L753.25,922.00L754.87,922.00L756.49,922.00L758.11,922.00L759.73,922.00L761.34,922.00L762.96,922.00C763.50,922.00,764.04,894.58,764.58,894.58C765.12,894.58,765.66,922.00,766.20,922.00L767.81,922.00L769.43,922.00L771.05,922.00L772.67,922.00L774.29,922.00L775.90,922.00L777.52,922.00L779.14,922.00L780.76,922.00L782.38,922.00C782.91,922.00,783.45,897.17,783.99,897.17C784.53,897.17,785.07,922.00,785.61,922.00L787.23,922.00L788.85,922.00L790.46,922.00L792.08,922.00L793.70,922.00L795.32,922.00L796.94,922.00L798.55,922.00L800.17,922.00L801.79,922.00L803.41,922.00L805.03,922.00L806.64,922.00C807.18,922.00,807.72,867.58,808.26,867.58C808.80,867.58,809.34,922.00,809.88,922.00L811.50,922.00L813.11,922.00L814.73,922.00L816.35,922.00L817.97,922.00L819.59,922.00L821.20,922.00L822.82,922.00L824.44,922.00L826.06,922.00L827.68,922.00L829.29,922.00L830.91,922.00L832.53,922.00L834.15,922.00L835.76,922.00L837.38,922.00L839.00,922.00L840.62,922.00L842.24,922.00L843.85,922.00L845.47,922.00L847.09,922.00L848.71,922.00L850.33,922.00L851.94,922.00L853.56,922.00L855.18,922.00L856.80,922.00L858.41,922.00L860.03,922.00L861.65,922.00L863.27,922.00L864.89,922.00L866.50,922.00L868.12,922.00L869.74,922.00L871.36,922.00L872.98,922.00L874.59,922.00L876.21,922.00L877.83,922.00L879.45,922.00L881.06,922.00L882.68,922.00L884.30,922.00C884.84,922.00,885.38,895.58,885.92,895.58C886.46,895.58,887.00,922.00,887.54,922.00L889.15,922.00L890.77,922.00L892.39,922.00L894.01,922.00L895.62,922.00L897.24,922.00L898.86,922.00L900.48,922.00L902.10,922.00L903.71,922.00L905.33,922.00L906.95,922.00L908.57,922.00L910.19,922.00L911.80,922.00L913.42,922.00L915.04,922.00L916.66,922.00L918.28,922.00L919.89,922.00L921.51,922.00L923.13,922.00L924.75,922.00L926.36,922.00L927.98,922.00L929.60,922.00L931.22,922.00L932.84,922.00L934.45,922.00L936.07,922.00L937.69,922.00L939.31,922.00L940.93,922.00L942.54,922.00L944.16,922.00L945.78,922.00L947.40,922.00L949.01,922.00L950.63,922.00L952.25,922.00L953.87,922.00L955.49,922.00L957.10,922.00L958.72,922.00L960.34,922.00L961.96,922.00L963.58,922.00L965.19,922.00L966.81,922.00L968.43,922.00L970.05,922.00L971.66,922.00L973.28,922.00C973.82,922.00,974.36,905.09,974.90,905.09C975.44,905.09,975.98,922.00,976.52,922.00L978.14,922.00L979.75,922.00L981.37,922.00L982.99,922.00L984.61,922.00L986.23,922.00L987.84,922.00L989.46,922.00L991.08,922.00L992.70,922.00L994.31,922.00L995.93,922.00L997.55,922.00L999.17,922.00L1000.79,922.00L1002.40,922.00L1004.02,922.00L1005.64,922.00L1007.26,922.00L1008.88,922.00L1010.49,922.00L1012.11,922.00L1013.73,922.00L1015.35,922.00L1016.96,922.00L1018.58,922.00L1020.20,922.00" stroke="#cbd3de" stroke-width="1.6" stroke-dasharray="6 2.75" fill="none"/>
<defs><linearGradient id="gsa" x1="0" y1="0" x2="0" y2="1"><stop offset="0" stop-color="#f59e0b" stop-opacity="0.22"/><stop offset="1" stop-color="#f59e0b" stop-opacity="0"/></linearGradient></defs>
<path d="M431.30,922.00L432.92,922.00L434.54,922.00L436.15,922.00L437.77,922.00L439.39,922.00L441.01,922.00L442.62,922.00L444.24,922.00L445.86,922.00L447.48,922.00L449.10,922.00L450.71,922.00C451.25,922.00,451.79,872.81,452.33,872.81C452.87,872.81,453.41,922.00,453.95,922.00C454.49,922.00,455.03,862.51,455.57,862.51C456.11,862.51,456.65,922.00,457.19,922.00L458.80,922.00L460.42,922.00L462.04,922.00L463.66,922.00L465.28,922.00L466.89,922.00L468.51,922.00L470.13,922.00C470.67,922.00,471.21,916.51,471.75,916.51C472.29,916.51,472.83,922.00,473.36,922.00L474.98,922.00L476.60,922.00L478.22,922.00L479.84,922.00L481.45,922.00L483.07,922.00L484.69,922.00L486.31,922.00C486.85,922.00,487.39,839.42,487.93,839.42C488.46,839.42,489.00,922.00,489.54,922.00L491.16,922.00L492.78,922.00L494.40,922.00L496.01,922.00L497.63,922.00C498.17,922.00,498.71,862.51,499.25,862.51C499.79,862.51,500.33,922.00,500.87,922.00L502.49,922.00L504.10,922.00L505.72,922.00L507.34,922.00C507.88,922.00,508.42,881.79,508.96,881.79C509.50,881.79,510.04,922.00,510.58,922.00L512.19,922.00L513.81,922.00C514.35,922.00,514.89,918.83,515.43,918.83C515.97,918.83,516.51,922.00,517.05,922.00L518.66,922.00L520.28,922.00L521.90,922.00L523.52,922.00L525.14,922.00L526.75,922.00L528.37,922.00L529.99,922.00C530.53,922.00,531.07,742.21,531.61,742.21C532.15,742.21,532.69,853.32,533.23,853.32C533.76,853.32,534.30,794.41,534.84,794.41C535.38,794.41,535.92,922.00,536.46,922.00L538.08,922.00L539.70,922.00L541.31,922.00L542.93,922.00L544.55,922.00L546.17,922.00C546.71,922.00,547.25,730.90,547.79,730.90C548.33,730.90,548.86,922.00,549.40,922.00L551.02,922.00L552.64,922.00L554.26,922.00L555.88,922.00C556.41,922.00,556.95,916.72,557.49,916.72C558.03,916.72,558.57,922.00,559.11,922.00L560.73,922.00L562.35,922.00L563.96,922.00L565.58,922.00C566.12,922.00,566.66,890.30,567.20,890.30C567.74,890.30,568.28,922.00,568.82,922.00L570.44,922.00L572.05,922.00C572.59,922.00,573.13,847.61,573.67,847.61C574.21,847.61,574.75,922.00,575.29,922.00L576.91,922.00L578.53,922.00L580.14,922.00C580.68,922.00,581.22,890.30,581.76,890.30C582.30,890.30,582.84,922.00,583.38,922.00L585.00,922.00L586.61,922.00L588.23,922.00C588.77,922.00,589.31,905.73,589.85,905.73C590.39,905.73,590.93,922.00,591.47,922.00L593.09,922.00L594.70,922.00L596.32,922.00L597.94,922.00L599.56,922.00L601.18,922.00L602.79,922.00L604.41,922.00L606.03,922.00L607.65,922.00L609.26,922.00L610.88,922.00L612.50,922.00L614.12,922.00L615.74,922.00L617.35,922.00C617.89,922.00,618.43,710.30,618.97,710.30C619.51,710.30,620.05,922.00,620.59,922.00L622.21,922.00L623.83,922.00C624.36,922.00,624.90,779.72,625.44,779.72C625.98,779.72,626.52,922.00,627.06,922.00L628.68,922.00L630.30,922.00L631.91,922.00C632.45,922.00,632.99,918.83,633.53,918.83C634.07,918.83,634.61,922.00,635.15,922.00L636.77,922.00L638.39,922.00L640.00,922.00L641.62,922.00L643.24,922.00L644.86,922.00C645.40,922.00,645.94,636.28,646.48,636.28C647.01,636.28,647.55,922.00,648.09,922.00L649.71,922.00L651.33,922.00L652.95,922.00L654.56,922.00L656.18,922.00C656.72,922.00,657.26,877.09,657.80,877.09L659.42,877.09C659.96,877.09,660.50,922.00,661.04,922.00C661.58,922.00,662.11,917.77,662.65,917.77C663.19,917.77,663.73,922.00,664.27,922.00L665.89,922.00C666.43,922.00,666.97,916.72,667.51,916.72C668.05,916.72,668.59,922.00,669.12,922.00C669.66,922.00,670.20,915.66,670.74,915.66C671.28,915.66,671.82,922.00,672.36,922.00L673.98,922.00L675.60,922.00L677.21,922.00L678.83,922.00L680.45,922.00L682.07,922.00L683.69,922.00L685.30,922.00L686.92,922.00L688.54,922.00L690.16,922.00L691.78,922.00C692.31,922.00,692.85,823.89,693.39,823.89C693.93,823.89,694.47,922.00,695.01,922.00L696.63,922.00L698.25,922.00L699.86,922.00C700.40,922.00,700.94,898.49,701.48,898.49C702.02,898.49,702.56,922.00,703.10,922.00L704.72,922.00L706.34,922.00L707.95,922.00L709.57,922.00L711.19,922.00L712.81,922.00C713.35,922.00,713.89,910.90,714.43,910.90C714.96,910.90,715.50,922.00,716.04,922.00C716.58,922.00,717.12,800.80,717.66,800.80C718.20,800.80,718.74,922.00,719.28,922.00L720.90,922.00L722.51,922.00L724.13,922.00L725.75,922.00L727.37,922.00L728.99,922.00L730.60,922.00L732.22,922.00L733.84,922.00L735.46,922.00L737.08,922.00L738.69,922.00L740.31,922.00L741.93,922.00C742.47,922.00,743.01,915.18,743.55,915.18C744.09,915.18,744.63,922.00,745.16,922.00L746.78,922.00L748.40,922.00L750.02,922.00L751.64,922.00L753.25,922.00L754.87,922.00L756.49,922.00L758.11,922.00L759.73,922.00L761.34,922.00L762.96,922.00L764.58,922.00L766.20,922.00L767.81,922.00L769.43,922.00L771.05,922.00L772.67,922.00L774.29,922.00L775.90,922.00L777.52,922.00L779.14,922.00L780.76,922.00L782.38,922.00C782.91,922.00,783.45,903.61,783.99,903.61C784.53,903.61,785.07,922.00,785.61,922.00L787.23,922.00L788.85,922.00L790.46,922.00L792.08,922.00L793.70,922.00L795.32,922.00L796.94,922.00L798.55,922.00L800.17,922.00L801.79,922.00L803.41,922.00L805.03,922.00L806.64,922.00L808.26,922.00L809.88,922.00L811.50,922.00L813.11,922.00L814.73,922.00L816.35,922.00L817.97,922.00L819.59,922.00L821.20,922.00L822.82,922.00L824.44,922.00C824.98,922.00,825.52,916.72,826.06,916.72C826.60,916.72,827.14,922.00,827.68,922.00L829.29,922.00L830.91,922.00L832.53,922.00L834.15,922.00L835.76,922.00L837.38,922.00L839.00,922.00L840.62,922.00L842.24,922.00L843.85,922.00L845.47,922.00L847.09,922.00L848.71,922.00L850.33,922.00L851.94,922.00L853.56,922.00L855.18,922.00L856.80,922.00L858.41,922.00L860.03,922.00L861.65,922.00L863.27,922.00L864.89,922.00L866.50,922.00L868.12,922.00C868.66,922.00,869.20,904.88,869.74,904.88C870.28,904.88,870.82,922.00,871.36,922.00L872.98,922.00C873.51,922.00,874.05,863.83,874.59,863.83C875.13,863.83,875.67,922.00,876.21,922.00L877.83,922.00L879.45,922.00L881.06,922.00L882.68,922.00C883.22,922.00,883.76,916.19,884.30,916.19C884.84,916.19,885.38,922.00,885.92,922.00L887.54,922.00L889.15,922.00L890.77,922.00C891.31,922.00,891.85,911.80,892.39,911.80C892.93,911.80,893.47,922.00,894.01,922.00L895.62,922.00L897.24,922.00L898.86,922.00L900.48,922.00L902.10,922.00L903.71,922.00L905.33,922.00L906.95,922.00L908.57,922.00L910.19,922.00L911.80,922.00L913.42,922.00L915.04,922.00L916.66,922.00L918.28,922.00C918.81,922.00,919.35,863.83,919.89,863.83L921.51,863.83C922.05,863.83,922.59,922.00,923.13,922.00L924.75,922.00L926.36,922.00C926.90,922.00,927.44,917.25,927.98,917.25C928.52,917.25,929.06,922.00,929.60,922.00L931.22,922.00L932.84,922.00L934.45,922.00L936.07,922.00L937.69,922.00L939.31,922.00L940.93,922.00L942.54,922.00L944.16,922.00L945.78,922.00L947.40,922.00L949.01,922.00L950.63,922.00L952.25,922.00L953.87,922.00L955.49,922.00L957.10,922.00L958.72,922.00L960.34,922.00L961.96,922.00C962.50,922.00,963.04,869.70,963.58,869.70C964.11,869.70,964.65,922.00,965.19,922.00L966.81,922.00L968.43,922.00L970.05,922.00L971.66,922.00L973.28,922.00C973.82,922.00,974.36,910.80,974.90,910.80C975.44,910.80,975.98,922.00,976.52,922.00L978.14,922.00L979.75,922.00L981.37,922.00L982.99,922.00L984.61,922.00L986.23,922.00C986.76,922.00,987.30,914.08,987.84,914.08C988.38,914.08,988.92,922.00,989.46,922.00L991.08,922.00L992.70,922.00L994.31,922.00L995.93,922.00L997.55,922.00L999.17,922.00L1000.79,922.00L1002.40,922.00C1002.94,922.00,1003.48,916.19,1004.02,916.19C1004.56,916.19,1005.10,922.00,1005.64,922.00C1006.18,922.00,1006.72,865.57,1007.26,865.57C1007.80,865.57,1008.34,922.00,1008.88,922.00L1010.49,922.00L1012.11,922.00L1013.73,922.00L1015.35,922.00L1016.96,922.00L1018.58,922.00L1020.20,922.00L1020.20,922.00L431.30,922.00Z" fill="url(#gsa)" stroke="none"/>
<path d="M431.30,922.00L432.92,922.00L434.54,922.00L436.15,922.00L437.77,922.00L439.39,922.00L441.01,922.00L442.62,922.00L444.24,922.00L445.86,922.00L447.48,922.00L449.10,922.00L450.71,922.00C451.25,922.00,451.79,872.81,452.33,872.81C452.87,872.81,453.41,922.00,453.95,922.00C454.49,922.00,455.03,862.51,455.57,862.51C456.11,862.51,456.65,922.00,457.19,922.00L458.80,922.00L460.42,922.00L462.04,922.00L463.66,922.00L465.28,922.00L466.89,922.00L468.51,922.00L470.13,922.00C470.67,922.00,471.21,916.51,471.75,916.51C472.29,916.51,472.83,922.00,473.36,922.00L474.98,922.00L476.60,922.00L478.22,922.00L479.84,922.00L481.45,922.00L483.07,922.00L484.69,922.00L486.31,922.00C486.85,922.00,487.39,839.42,487.93,839.42C488.46,839.42,489.00,922.00,489.54,922.00L491.16,922.00L492.78,922.00L494.40,922.00L496.01,922.00L497.63,922.00C498.17,922.00,498.71,862.51,499.25,862.51C499.79,862.51,500.33,922.00,500.87,922.00L502.49,922.00L504.10,922.00L505.72,922.00L507.34,922.00C507.88,922.00,508.42,881.79,508.96,881.79C509.50,881.79,510.04,922.00,510.58,922.00L512.19,922.00L513.81,922.00C514.35,922.00,514.89,918.83,515.43,918.83C515.97,918.83,516.51,922.00,517.05,922.00L518.66,922.00L520.28,922.00L521.90,922.00L523.52,922.00L525.14,922.00L526.75,922.00L528.37,922.00L529.99,922.00C530.53,922.00,531.07,742.21,531.61,742.21C532.15,742.21,532.69,853.32,533.23,853.32C533.76,853.32,534.30,794.41,534.84,794.41C535.38,794.41,535.92,922.00,536.46,922.00L538.08,922.00L539.70,922.00L541.31,922.00L542.93,922.00L544.55,922.00L546.17,922.00C546.71,922.00,547.25,730.90,547.79,730.90C548.33,730.90,548.86,922.00,549.40,922.00L551.02,922.00L552.64,922.00L554.26,922.00L555.88,922.00C556.41,922.00,556.95,916.72,557.49,916.72C558.03,916.72,558.57,922.00,559.11,922.00L560.73,922.00L562.35,922.00L563.96,922.00L565.58,922.00C566.12,922.00,566.66,890.30,567.20,890.30C567.74,890.30,568.28,922.00,568.82,922.00L570.44,922.00L572.05,922.00C572.59,922.00,573.13,847.61,573.67,847.61C574.21,847.61,574.75,922.00,575.29,922.00L576.91,922.00L578.53,922.00L580.14,922.00C580.68,922.00,581.22,890.30,581.76,890.30C582.30,890.30,582.84,922.00,583.38,922.00L585.00,922.00L586.61,922.00L588.23,922.00C588.77,922.00,589.31,905.73,589.85,905.73C590.39,905.73,590.93,922.00,591.47,922.00L593.09,922.00L594.70,922.00L596.32,922.00L597.94,922.00L599.56,922.00L601.18,922.00L602.79,922.00L604.41,922.00L606.03,922.00L607.65,922.00L609.26,922.00L610.88,922.00L612.50,922.00L614.12,922.00L615.74,922.00L617.35,922.00C617.89,922.00,618.43,710.30,618.97,710.30C619.51,710.30,620.05,922.00,620.59,922.00L622.21,922.00L623.83,922.00C624.36,922.00,624.90,779.72,625.44,779.72C625.98,779.72,626.52,922.00,627.06,922.00L628.68,922.00L630.30,922.00L631.91,922.00C632.45,922.00,632.99,918.83,633.53,918.83C634.07,918.83,634.61,922.00,635.15,922.00L636.77,922.00L638.39,922.00L640.00,922.00L641.62,922.00L643.24,922.00L644.86,922.00C645.40,922.00,645.94,636.28,646.48,636.28C647.01,636.28,647.55,922.00,648.09,922.00L649.71,922.00L651.33,922.00L652.95,922.00L654.56,922.00L656.18,922.00C656.72,922.00,657.26,877.09,657.80,877.09L659.42,877.09C659.96,877.09,660.50,922.00,661.04,922.00C661.58,922.00,662.11,917.77,662.65,917.77C663.19,917.77,663.73,922.00,664.27,922.00L665.89,922.00C666.43,922.00,666.97,916.72,667.51,916.72C668.05,916.72,668.59,922.00,669.12,922.00C669.66,922.00,670.20,915.66,670.74,915.66C671.28,915.66,671.82,922.00,672.36,922.00L673.98,922.00L675.60,922.00L677.21,922.00L678.83,922.00L680.45,922.00L682.07,922.00L683.69,922.00L685.30,922.00L686.92,922.00L688.54,922.00L690.16,922.00L691.78,922.00C692.31,922.00,692.85,823.89,693.39,823.89C693.93,823.89,694.47,922.00,695.01,922.00L696.63,922.00L698.25,922.00L699.86,922.00C700.40,922.00,700.94,898.49,701.48,898.49C702.02,898.49,702.56,922.00,703.10,922.00L704.72,922.00L706.34,922.00L707.95,922.00L709.57,922.00L711.19,922.00L712.81,922.00C713.35,922.00,713.89,910.90,714.43,910.90C714.96,910.90,715.50,922.00,716.04,922.00C716.58,922.00,717.12,800.80,717.66,800.80C718.20,800.80,718.74,922.00,719.28,922.00L720.90,922.00L722.51,922.00L724.13,922.00L725.75,922.00L727.37,922.00L728.99,922.00L730.60,922.00L732.22,922.00L733.84,922.00L735.46,922.00L737.08,922.00L738.69,922.00L740.31,922.00L741.93,922.00C742.47,922.00,743.01,915.18,743.55,915.18C744.09,915.18,744.63,922.00,745.16,922.00L746.78,922.00L748.40,922.00L750.02,922.00L751.64,922.00L753.25,922.00L754.87,922.00L756.49,922.00L758.11,922.00L759.73,922.00L761.34,922.00L762.96,922.00L764.58,922.00L766.20,922.00L767.81,922.00L769.43,922.00L771.05,922.00L772.67,922.00L774.29,922.00L775.90,922.00L777.52,922.00L779.14,922.00L780.76,922.00L782.38,922.00C782.91,922.00,783.45,903.61,783.99,903.61C784.53,903.61,785.07,922.00,785.61,922.00L787.23,922.00L788.85,922.00L790.46,922.00L792.08,922.00L793.70,922.00L795.32,922.00L796.94,922.00L798.55,922.00L800.17,922.00L801.79,922.00L803.41,922.00L805.03,922.00L806.64,922.00L808.26,922.00L809.88,922.00L811.50,922.00L813.11,922.00L814.73,922.00L816.35,922.00L817.97,922.00L819.59,922.00L821.20,922.00L822.82,922.00L824.44,922.00C824.98,922.00,825.52,916.72,826.06,916.72C826.60,916.72,827.14,922.00,827.68,922.00L829.29,922.00L830.91,922.00L832.53,922.00L834.15,922.00L835.76,922.00L837.38,922.00L839.00,922.00L840.62,922.00L842.24,922.00L843.85,922.00L845.47,922.00L847.09,922.00L848.71,922.00L850.33,922.00L851.94,922.00L853.56,922.00L855.18,922.00L856.80,922.00L858.41,922.00L860.03,922.00L861.65,922.00L863.27,922.00L864.89,922.00L866.50,922.00L868.12,922.00C868.66,922.00,869.20,904.88,869.74,904.88C870.28,904.88,870.82,922.00,871.36,922.00L872.98,922.00C873.51,922.00,874.05,863.83,874.59,863.83C875.13,863.83,875.67,922.00,876.21,922.00L877.83,922.00L879.45,922.00L881.06,922.00L882.68,922.00C883.22,922.00,883.76,916.19,884.30,916.19C884.84,916.19,885.38,922.00,885.92,922.00L887.54,922.00L889.15,922.00L890.77,922.00C891.31,922.00,891.85,911.80,892.39,911.80C892.93,911.80,893.47,922.00,894.01,922.00L895.62,922.00L897.24,922.00L898.86,922.00L900.48,922.00L902.10,922.00L903.71,922.00L905.33,922.00L906.95,922.00L908.57,922.00L910.19,922.00L911.80,922.00L913.42,922.00L915.04,922.00L916.66,922.00L918.28,922.00C918.81,922.00,919.35,863.83,919.89,863.83L921.51,863.83C922.05,863.83,922.59,922.00,923.13,922.00L924.75,922.00L926.36,922.00C926.90,922.00,927.44,917.25,927.98,917.25C928.52,917.25,929.06,922.00,929.60,922.00L931.22,922.00L932.84,922.00L934.45,922.00L936.07,922.00L937.69,922.00L939.31,922.00L940.93,922.00L942.54,922.00L944.16,922.00L945.78,922.00L947.40,922.00L949.01,922.00L950.63,922.00L952.25,922.00L953.87,922.00L955.49,922.00L957.10,922.00L958.72,922.00L960.34,922.00L961.96,922.00C962.50,922.00,963.04,869.70,963.58,869.70C964.11,869.70,964.65,922.00,965.19,922.00L966.81,922.00L968.43,922.00L970.05,922.00L971.66,922.00L973.28,922.00C973.82,922.00,974.36,910.80,974.90,910.80C975.44,910.80,975.98,922.00,976.52,922.00L978.14,922.00L979.75,922.00L981.37,922.00L982.99,922.00L984.61,922.00L986.23,922.00C986.76,922.00,987.30,914.08,987.84,914.08C988.38,914.08,988.92,922.00,989.46,922.00L991.08,922.00L992.70,922.00L994.31,922.00L995.93,922.00L997.55,922.00L999.17,922.00L1000.79,922.00L1002.40,922.00C1002.94,922.00,1003.48,916.19,1004.02,916.19C1004.56,916.19,1005.10,922.00,1005.64,922.00C1006.18,922.00,1006.72,865.57,1007.26,865.57C1007.80,865.57,1008.34,922.00,1008.88,922.00L1010.49,922.00L1012.11,922.00L1013.73,922.00L1015.35,922.00L1016.96,922.00L1018.58,922.00L1020.20,922.00" stroke="#f59e0b" stroke-width="2.8" fill="none" stroke-linejoin="round"/>
<line x1="1117.4" x2="1706.3" y1="605.5" y2="605.5" stroke="#ebeef3" stroke-width="1" stroke-dasharray="2.8 3.8"/>
<line x1="1117.4" x2="1706.3" y1="684.75" y2="684.75" stroke="#ebeef3" stroke-width="1" stroke-dasharray="2.8 3.8"/>
<line x1="1117.4" x2="1706.3" y1="764.0" y2="764.0" stroke="#ebeef3" stroke-width="1" stroke-dasharray="2.8 3.8"/>
<line x1="1117.4" x2="1706.3" y1="843.25" y2="843.25" stroke="#ebeef3" stroke-width="1" stroke-dasharray="2.8 3.8"/>
<line x1="1117.4" x2="1706.3" y1="922.5" y2="922.5" stroke="#ebeef3" stroke-width="1" stroke-dasharray="2.8 3.8"/>
<path d="M1117.5,922v7M1119.5,922v7M1121.5,922v7M1122.5,922v7M1124.5,922v7M1125.5,922v7M1127.5,922v7M1129.5,922v7M1130.5,922v7M1132.5,922v7M1134.5,922v7M1135.5,922v7M1137.5,922v7M1138.5,922v7M1140.5,922v7M1142.5,922v7M1143.5,922v7M1145.5,922v7M1147.5,922v7M1148.5,922v7M1150.5,922v7M1151.5,922v7M1153.5,922v7M1155.5,922v7M1156.5,922v7M1158.5,922v7M1159.5,922v7M1161.5,922v7M1163.5,922v7M1164.5,922v7M1166.5,922v7M1168.5,922v7M1169.5,922v7M1171.5,922v7M1172.5,922v7M1174.5,922v7M1176.5,922v7M1177.5,922v7M1179.5,922v7M1180.5,922v7M1182.5,922v7M1184.5,922v7M1185.5,922v7M1187.5,922v7M1189.5,922v7M1190.5,922v7M1192.5,922v7M1193.5,922v7M1195.5,922v7M1197.5,922v7M1198.5,922v7M1200.5,922v7M1202.5,922v7M1203.5,922v7M1205.5,922v7M1206.5,922v7M1208.5,922v7M1210.5,922v7M1211.5,922v7M1213.5,922v7M1214.5,922v7M1216.5,922v7M1218.5,922v7M1219.5,922v7M1221.5,922v7M1223.5,922v7M1224.5,922v7M1226.5,922v7M1227.5,922v7M1229.5,922v7M1231.5,922v7M1232.5,922v7M1234.5,922v7M1236.5,922v7M1237.5,922v7M1239.5,922v7M1240.5,922v7M1242.5,922v7M1244.5,922v7M1245.5,922v7M1247.5,922v7M1248.5,922v7M1250.5,922v7M1252.5,922v7M1253.5,922v7M1255.5,922v7M1257.5,922v7M1258.5,922v7M1260.5,922v7M1261.5,922v7M1263.5,922v7M1265.5,922v7M1266.5,922v7M1268.5,922v7M1269.5,922v7M1271.5,922v7M1273.5,922v7M1274.5,922v7M1276.5,922v7M1278.5,922v7M1279.5,922v7M1281.5,922v7M1282.5,922v7M1284.5,922v7M1286.5,922v7M1287.5,922v7M1289.5,922v7M1291.5,922v7M1292.5,922v7M1294.5,922v7M1295.5,922v7M1297.5,922v7M1299.5,922v7M1300.5,922v7M1302.5,922v7M1303.5,922v7M1305.5,922v7M1307.5,922v7M1308.5,922v7M1310.5,922v7M1312.5,922v7M1313.5,922v7M1315.5,922v7M1316.5,922v7M1318.5,922v7M1320.5,922v7M1321.5,922v7M1323.5,922v7M1324.5,922v7M1326.5,922v7M1328.5,922v7M1329.5,922v7M1331.5,922v7M1333.5,922v7M1334.5,922v7M1336.5,922v7M1337.5,922v7M1339.5,922v7M1341.5,922v7M1342.5,922v7M1344.5,922v7M1346.5,922v7M1347.5,922v7M1349.5,922v7M1350.5,922v7M1352.5,922v7M1354.5,922v7M1355.5,922v7M1357.5,922v7M1358.5,922v7M1360.5,922v7M1362.5,922v7M1363.5,922v7M1365.5,922v7M1367.5,922v7M1368.5,922v7M1370.5,922v7M1371.5,922v7M1373.5,922v7M1375.5,922v7M1376.5,922v7M1378.5,922v7M1379.5,922v7M1381.5,922v7M1383.5,922v7M1384.5,922v7M1386.5,922v7M1388.5,922v7M1389.5,922v7M1391.5,922v7M1392.5,922v7M1394.5,922v7M1396.5,922v7M1397.5,922v7M1399.5,922v7M1401.5,922v7M1402.5,922v7M1404.5,922v7M1405.5,922v7M1407.5,922v7M1409.5,922v7M1410.5,922v7M1412.5,922v7M1413.5,922v7M1415.5,922v7M1417.5,922v7M1418.5,922v7M1420.5,922v7M1422.5,922v7M1423.5,922v7M1425.5,922v7M1426.5,922v7M1428.5,922v7M1430.5,922v7M1431.5,922v7M1433.5,922v7M1434.5,922v7M1436.5,922v7M1438.5,922v7M1439.5,922v7M1441.5,922v7M1443.5,922v7M1444.5,922v7M1446.5,922v7M1447.5,922v7M1449.5,922v7M1451.5,922v7M1452.5,922v7M1454.5,922v7M1456.5,922v7M1457.5,922v7M1459.5,922v7M1460.5,922v7M1462.5,922v7M1464.5,922v7M1465.5,922v7M1467.5,922v7M1468.5,922v7M1470.5,922v7M1472.5,922v7M1473.5,922v7M1475.5,922v7M1477.5,922v7M1478.5,922v7M1480.5,922v7M1481.5,922v7M1483.5,922v7M1485.5,922v7M1486.5,922v7M1488.5,922v7M1490.5,922v7M1491.5,922v7M1493.5,922v7M1494.5,922v7M1496.5,922v7M1498.5,922v7M1499.5,922v7M1501.5,922v7M1502.5,922v7M1504.5,922v7M1506.5,922v7M1507.5,922v7M1509.5,922v7M1511.5,922v7M1512.5,922v7M1514.5,922v7M1515.5,922v7M1517.5,922v7M1519.5,922v7M1520.5,922v7M1522.5,922v7M1523.5,922v7M1525.5,922v7M1527.5,922v7M1528.5,922v7M1530.5,922v7M1532.5,922v7M1533.5,922v7M1535.5,922v7M1536.5,922v7M1538.5,922v7M1540.5,922v7M1541.5,922v7M1543.5,922v7M1545.5,922v7M1546.5,922v7M1548.5,922v7M1549.5,922v7M1551.5,922v7M1553.5,922v7M1554.5,922v7M1556.5,922v7M1557.5,922v7M1559.5,922v7M1561.5,922v7M1562.5,922v7M1564.5,922v7M1566.5,922v7M1567.5,922v7M1569.5,922v7M1570.5,922v7M1572.5,922v7M1574.5,922v7M1575.5,922v7M1577.5,922v7M1578.5,922v7M1580.5,922v7M1582.5,922v7M1583.5,922v7M1585.5,922v7M1587.5,922v7M1588.5,922v7M1590.5,922v7M1591.5,922v7M1593.5,922v7M1595.5,922v7M1596.5,922v7M1598.5,922v7M1600.5,922v7M1601.5,922v7M1603.5,922v7M1604.5,922v7M1606.5,922v7M1608.5,922v7M1609.5,922v7M1611.5,922v7M1612.5,922v7M1614.5,922v7M1616.5,922v7M1617.5,922v7M1619.5,922v7M1621.5,922v7M1622.5,922v7M1624.5,922v7M1625.5,922v7M1627.5,922v7M1629.5,922v7M1630.5,922v7M1632.5,922v7M1633.5,922v7M1635.5,922v7M1637.5,922v7M1638.5,922v7M1640.5,922v7M1642.5,922v7M1643.5,922v7M1645.5,922v7M1646.5,922v7M1648.5,922v7M1650.5,922v7M1651.5,922v7M1653.5,922v7M1655.5,922v7M1656.5,922v7M1658.5,922v7M1659.5,922v7M1661.5,922v7M1663.5,922v7M1664.5,922v7M1666.5,922v7M1667.5,922v7M1669.5,922v7M1671.5,922v7M1672.5,922v7M1674.5,922v7M1676.5,922v7M1677.5,922v7M1679.5,922v7M1680.5,922v7M1682.5,922v7M1684.5,922v7M1685.5,922v7M1687.5,922v7M1689.5,922v7M1690.5,922v7M1692.5,922v7M1693.5,922v7M1695.5,922v7M1697.5,922v7M1698.5,922v7M1700.5,922v7M1701.5,922v7M1703.5,922v7M1705.5,922v7M1706.5,922v7" stroke="#e3e7ee" stroke-width="1" fill="none"/>
<path d="M1117.40,922.00L1119.02,922.00C1119.56,922.00,1120.10,895.58,1120.64,895.58C1121.18,895.58,1121.71,922.00,1122.25,922.00L1123.87,922.00L1125.49,922.00L1127.11,922.00L1128.73,922.00L1130.34,922.00L1131.96,922.00L1133.58,922.00L1135.20,922.00L1136.81,922.00L1138.43,922.00L1140.05,922.00L1141.67,922.00L1143.29,922.00L1144.90,922.00L1146.52,922.00L1148.14,922.00L1149.76,922.00L1151.38,922.00C1151.91,922.00,1152.45,895.58,1152.99,895.58C1153.53,895.58,1154.07,922.00,1154.61,922.00L1156.23,922.00L1157.85,922.00L1159.46,922.00L1161.08,922.00L1162.70,922.00L1164.32,922.00L1165.94,922.00L1167.55,922.00L1169.17,922.00L1170.79,922.00L1172.41,922.00L1174.03,922.00L1175.64,922.00L1177.26,922.00L1178.88,922.00L1180.50,922.00L1182.11,922.00L1183.73,922.00L1185.35,922.00L1186.97,922.00L1188.59,922.00L1190.20,922.00L1191.82,922.00L1193.44,922.00C1193.98,922.00,1194.52,816.33,1195.06,816.33C1195.60,816.33,1196.14,922.00,1196.68,922.00C1197.21,922.00,1197.75,737.08,1198.29,737.08C1198.83,737.08,1199.37,922.00,1199.91,922.00L1201.53,922.00L1203.15,922.00L1204.76,922.00L1206.38,922.00L1208.00,922.00L1209.62,922.00L1211.24,922.00L1212.85,922.00L1214.47,922.00L1216.09,922.00L1217.71,922.00L1219.33,922.00L1220.94,922.00L1222.56,922.00L1224.18,922.00L1225.80,922.00L1227.41,922.00L1229.03,922.00L1230.65,922.00L1232.27,922.00L1233.89,922.00L1235.50,922.00L1237.12,922.00L1238.74,922.00L1240.36,922.00L1241.98,922.00L1243.59,922.00L1245.21,922.00L1246.83,922.00L1248.45,922.00L1250.06,922.00L1251.68,922.00L1253.30,922.00L1254.92,922.00L1256.54,922.00L1258.15,922.00L1259.77,922.00L1261.39,922.00L1263.01,922.00L1264.62,922.00L1266.24,922.00L1267.86,922.00L1269.48,922.00L1271.10,922.00L1272.71,922.00L1274.33,922.00L1275.95,922.00L1277.57,922.00L1279.19,922.00L1280.80,922.00L1282.42,922.00L1284.04,922.00L1285.66,922.00L1287.28,922.00L1288.89,922.00L1290.51,922.00C1291.05,922.00,1291.59,657.83,1292.13,657.83C1292.67,657.83,1293.21,922.00,1293.75,922.00L1295.36,922.00L1296.98,922.00L1298.60,922.00L1300.22,922.00L1301.84,922.00L1303.45,922.00L1305.07,922.00L1306.69,922.00L1308.31,922.00L1309.92,922.00L1311.54,922.00L1313.16,922.00L1314.78,922.00L1316.40,922.00L1318.01,922.00L1319.63,922.00L1321.25,922.00L1322.87,922.00L1324.49,922.00L1326.10,922.00L1327.72,922.00L1329.34,922.00L1330.96,922.00L1332.58,922.00L1334.19,922.00L1335.81,922.00L1337.43,922.00L1339.05,922.00L1340.66,922.00L1342.28,922.00L1343.90,922.00L1345.52,922.00L1347.14,922.00L1348.75,922.00L1350.37,922.00L1351.99,922.00L1353.61,922.00L1355.22,922.00L1356.84,922.00L1358.46,922.00C1359.00,922.00,1359.54,869.17,1360.08,869.17C1360.62,869.17,1361.16,922.00,1361.70,922.00L1363.31,922.00L1364.93,922.00L1366.55,922.00L1368.17,922.00L1369.79,922.00L1371.40,922.00L1373.02,922.00L1374.64,922.00L1376.26,922.00L1377.88,922.00L1379.49,922.00L1381.11,922.00L1382.73,922.00L1384.35,922.00L1385.96,922.00L1387.58,922.00C1388.12,922.00,1388.66,895.58,1389.20,895.58C1389.74,895.58,1390.28,922.00,1390.82,922.00L1392.44,922.00L1394.05,922.00L1395.67,922.00L1397.29,922.00L1398.91,922.00L1400.53,922.00L1402.14,922.00L1403.76,922.00L1405.38,922.00L1407.00,922.00L1408.61,922.00L1410.23,922.00L1411.85,922.00C1412.39,922.00,1412.93,895.58,1413.47,895.58L1415.09,895.58C1415.62,895.58,1416.16,605.00,1416.70,605.00C1417.24,605.00,1417.78,922.00,1418.32,922.00L1419.94,922.00L1421.56,922.00L1423.17,922.00L1424.79,922.00L1426.41,922.00L1428.03,922.00L1429.65,922.00L1431.26,922.00L1432.88,922.00L1434.50,922.00C1435.04,922.00,1435.58,895.58,1436.12,895.58C1436.66,895.58,1437.20,922.00,1437.74,922.00L1439.35,922.00L1440.97,922.00L1442.59,922.00L1444.21,922.00L1445.83,922.00L1447.44,922.00L1449.06,922.00C1449.60,922.00,1450.14,816.33,1450.68,816.33C1451.22,816.33,1451.76,922.00,1452.30,922.00L1453.91,922.00L1455.53,922.00L1457.15,922.00L1458.77,922.00C1459.31,922.00,1459.85,895.58,1460.39,895.58C1460.92,895.58,1461.46,922.00,1462.00,922.00L1463.62,922.00L1465.24,922.00L1466.86,922.00L1468.47,922.00L1470.09,922.00L1471.71,922.00L1473.33,922.00L1474.95,922.00L1476.56,922.00L1478.18,922.00L1479.80,922.00C1480.34,922.00,1480.88,869.17,1481.42,869.17C1481.96,869.17,1482.50,922.00,1483.04,922.00L1484.65,922.00C1485.19,922.00,1485.73,895.58,1486.27,895.58C1486.81,895.58,1487.35,922.00,1487.89,922.00L1489.51,922.00L1491.12,922.00L1492.74,922.00C1493.28,922.00,1493.82,842.75,1494.36,842.75C1494.90,842.75,1495.44,922.00,1495.98,922.00L1497.60,922.00L1499.21,922.00L1500.83,922.00L1502.45,922.00C1502.99,922.00,1503.53,895.58,1504.07,895.58C1504.61,895.58,1505.15,922.00,1505.69,922.00L1507.30,922.00L1508.92,922.00L1510.54,922.00L1512.16,922.00L1513.78,922.00L1515.39,922.00L1517.01,922.00L1518.63,922.00L1520.25,922.00L1521.86,922.00L1523.48,922.00L1525.10,922.00L1526.72,922.00L1528.34,922.00L1529.95,922.00L1531.57,922.00L1533.19,922.00L1534.81,922.00L1536.42,922.00L1538.04,922.00L1539.66,922.00L1541.28,922.00L1542.90,922.00L1544.51,922.00L1546.13,922.00L1547.75,922.00L1549.37,922.00L1550.99,922.00L1552.60,922.00L1554.22,922.00L1555.84,922.00L1557.46,922.00L1559.08,922.00L1560.69,922.00L1562.31,922.00L1563.93,922.00C1564.47,922.00,1565.01,869.17,1565.55,869.17C1566.09,869.17,1566.62,922.00,1567.16,922.00L1568.78,922.00L1570.40,922.00L1572.02,922.00L1573.64,922.00L1575.25,922.00L1576.87,922.00L1578.49,922.00L1580.11,922.00L1581.72,922.00L1583.34,922.00C1583.88,922.00,1584.42,869.17,1584.96,869.17C1585.50,869.17,1586.04,922.00,1586.58,922.00L1588.20,922.00L1589.81,922.00L1591.43,922.00L1593.05,922.00L1594.67,922.00L1596.29,922.00L1597.90,922.00L1599.52,922.00L1601.14,922.00L1602.76,922.00L1604.38,922.00L1605.99,922.00C1606.53,922.00,1607.07,842.75,1607.61,842.75C1608.15,842.75,1608.69,922.00,1609.23,922.00L1610.85,922.00L1612.46,922.00L1614.08,922.00L1615.70,922.00L1617.32,922.00L1618.94,922.00L1620.55,922.00L1622.17,922.00L1623.79,922.00L1625.41,922.00L1627.03,922.00L1628.64,922.00L1630.26,922.00L1631.88,922.00L1633.50,922.00L1635.11,922.00L1636.73,922.00L1638.35,922.00L1639.97,922.00L1641.59,922.00L1643.20,922.00L1644.82,922.00L1646.44,922.00L1648.06,922.00L1649.67,922.00L1651.29,922.00L1652.91,922.00L1654.53,922.00C1655.07,922.00,1655.61,869.17,1656.15,869.17C1656.69,869.17,1657.22,922.00,1657.76,922.00L1659.38,922.00L1661.00,922.00L1662.62,922.00C1663.16,922.00,1663.70,816.33,1664.24,816.33C1664.77,816.33,1665.31,922.00,1665.85,922.00L1667.47,922.00L1669.09,922.00L1670.71,922.00L1672.32,922.00L1673.94,922.00L1675.56,922.00L1677.18,922.00L1678.80,922.00L1680.41,922.00L1682.03,922.00L1683.65,922.00L1685.27,922.00L1686.89,922.00L1688.50,922.00L1690.12,922.00L1691.74,922.00L1693.36,922.00L1694.97,922.00L1696.59,922.00L1698.21,922.00L1699.83,922.00L1701.45,922.00L1703.06,922.00L1704.68,922.00L1706.30,922.00" stroke="#cbd3de" stroke-width="1.6" stroke-dasharray="6 2.75" fill="none"/>
<defs><linearGradient id="gso" x1="0" y1="0" x2="0" y2="1"><stop offset="0" stop-color="#8b5cf6" stop-opacity="0.22"/><stop offset="1" stop-color="#8b5cf6" stop-opacity="0"/></linearGradient></defs>
<path d="M1117.40,922.00L1119.02,922.00L1120.64,922.00L1122.25,922.00L1123.87,922.00L1125.49,922.00L1127.11,922.00L1128.73,922.00L1130.34,922.00L1131.96,922.00L1133.58,922.00L1135.20,922.00L1136.81,922.00C1137.35,922.00,1137.89,789.92,1138.43,789.92C1138.97,789.92,1139.51,922.00,1140.05,922.00C1140.59,922.00,1141.13,789.92,1141.67,789.92C1142.21,789.92,1142.75,922.00,1143.29,922.00L1144.90,922.00L1146.52,922.00L1148.14,922.00L1149.76,922.00L1151.38,922.00L1152.99,922.00L1154.61,922.00L1156.23,922.00C1156.77,922.00,1157.31,895.58,1157.85,895.58C1158.39,895.58,1158.93,922.00,1159.46,922.00L1161.08,922.00L1162.70,922.00L1164.32,922.00L1165.94,922.00L1167.55,922.00L1169.17,922.00L1170.79,922.00L1172.41,922.00C1172.95,922.00,1173.49,869.17,1174.03,869.17C1174.56,869.17,1175.10,922.00,1175.64,922.00L1177.26,922.00L1178.88,922.00L1180.50,922.00L1182.11,922.00L1183.73,922.00C1184.27,922.00,1184.81,895.58,1185.35,895.58C1185.89,895.58,1186.43,922.00,1186.97,922.00L1188.59,922.00L1190.20,922.00L1191.82,922.00L1193.44,922.00C1193.98,922.00,1194.52,869.17,1195.06,869.17C1195.60,869.17,1196.14,922.00,1196.68,922.00L1198.29,922.00L1199.91,922.00C1200.45,922.00,1200.99,895.58,1201.53,895.58C1202.07,895.58,1202.61,922.00,1203.15,922.00L1204.76,922.00L1206.38,922.00L1208.00,922.00L1209.62,922.00L1211.24,922.00L1212.85,922.00L1214.47,922.00L1216.09,922.00C1216.63,922.00,1217.17,869.17,1217.71,842.75C1218.25,816.33,1218.79,763.50,1219.33,763.50C1219.86,763.50,1220.40,816.33,1220.94,842.75C1221.48,869.17,1222.02,922.00,1222.56,922.00L1224.18,922.00L1225.80,922.00L1227.41,922.00L1229.03,922.00L1230.65,922.00L1232.27,922.00C1232.81,922.00,1233.35,842.75,1233.89,842.75C1234.42,842.75,1234.96,922.00,1235.50,922.00L1237.12,922.00L1238.74,922.00L1240.36,922.00L1241.98,922.00C1242.51,922.00,1243.05,895.58,1243.59,895.58C1244.13,895.58,1244.67,922.00,1245.21,922.00L1246.83,922.00L1248.45,922.00L1250.06,922.00C1250.60,922.00,1251.14,869.17,1251.68,869.17C1252.22,869.17,1252.76,922.00,1253.30,922.00L1254.92,922.00L1256.54,922.00L1258.15,922.00C1258.69,922.00,1259.23,895.58,1259.77,895.58C1260.31,895.58,1260.85,922.00,1261.39,922.00L1263.01,922.00L1264.62,922.00L1266.24,922.00C1266.78,922.00,1267.32,842.75,1267.86,842.75C1268.40,842.75,1268.94,922.00,1269.48,922.00L1271.10,922.00L1272.71,922.00L1274.33,922.00C1274.87,922.00,1275.41,869.17,1275.95,869.17C1276.49,869.17,1277.03,922.00,1277.57,922.00L1279.19,922.00L1280.80,922.00L1282.42,922.00L1284.04,922.00L1285.66,922.00L1287.28,922.00L1288.89,922.00L1290.51,922.00L1292.13,922.00L1293.75,922.00L1295.36,922.00L1296.98,922.00L1298.60,922.00L1300.22,922.00L1301.84,922.00L1303.45,922.00C1303.99,922.00,1304.53,895.58,1305.07,895.58C1305.61,895.58,1306.15,922.00,1306.69,922.00C1307.23,922.00,1307.77,869.17,1308.31,869.17L1309.92,869.17C1310.46,869.17,1311.00,922.00,1311.54,922.00L1313.16,922.00L1314.78,922.00C1315.32,922.00,1315.86,895.58,1316.40,895.58C1316.94,895.58,1317.48,922.00,1318.01,922.00L1319.63,922.00L1321.25,922.00L1322.87,922.00L1324.49,922.00L1326.10,922.00L1327.72,922.00L1329.34,922.00L1330.96,922.00C1331.50,922.00,1332.04,895.58,1332.58,895.58C1333.11,895.58,1333.65,922.00,1334.19,922.00L1335.81,922.00L1337.43,922.00L1339.05,922.00L1340.66,922.00L1342.28,922.00C1342.82,922.00,1343.36,763.50,1343.90,763.50C1344.44,763.50,1344.98,922.00,1345.52,922.00L1347.14,922.00C1347.67,922.00,1348.21,869.17,1348.75,869.17C1349.29,869.17,1349.83,922.00,1350.37,922.00C1350.91,922.00,1351.45,869.17,1351.99,869.17C1352.53,869.17,1353.07,922.00,1353.61,922.00L1355.22,922.00C1355.76,922.00,1356.30,895.58,1356.84,895.58C1357.38,895.58,1357.92,922.00,1358.46,922.00L1360.08,922.00L1361.70,922.00L1363.31,922.00L1364.93,922.00C1365.47,922.00,1366.01,895.58,1366.55,895.58C1367.09,895.58,1367.63,922.00,1368.17,922.00L1369.79,922.00L1371.40,922.00L1373.02,922.00L1374.64,922.00L1376.26,922.00L1377.88,922.00C1378.41,922.00,1378.95,895.58,1379.49,895.58C1380.03,895.58,1380.57,922.00,1381.11,922.00L1382.73,922.00L1384.35,922.00L1385.96,922.00C1386.50,922.00,1387.04,789.92,1387.58,789.92C1388.12,789.92,1388.66,922.00,1389.20,922.00L1390.82,922.00L1392.44,922.00L1394.05,922.00L1395.67,922.00L1397.29,922.00L1398.91,922.00C1399.45,922.00,1399.99,869.17,1400.53,869.17C1401.06,869.17,1401.60,922.00,1402.14,922.00C1402.68,922.00,1403.22,710.67,1403.76,710.67C1404.30,710.67,1404.84,922.00,1405.38,922.00L1407.00,922.00L1408.61,922.00L1410.23,922.00L1411.85,922.00L1413.47,922.00L1415.09,922.00L1416.70,922.00L1418.32,922.00L1419.94,922.00L1421.56,922.00L1423.17,922.00L1424.79,922.00L1426.41,922.00L1428.03,922.00C1428.57,922.00,1429.11,895.58,1429.65,895.58C1430.19,895.58,1430.73,922.00,1431.26,922.00L1432.88,922.00L1434.50,922.00L1436.12,922.00L1437.74,922.00L1439.35,922.00L1440.97,922.00L1442.59,922.00C1443.13,922.00,1443.67,895.58,1444.21,895.58C1444.75,895.58,1445.29,922.00,1445.83,922.00L1447.44,922.00L1449.06,922.00L1450.68,922.00L1452.30,922.00L1453.91,922.00L1455.53,922.00L1457.15,922.00L1458.77,922.00L1460.39,922.00L1462.00,922.00L1463.62,922.00L1465.24,922.00L1466.86,922.00L1468.47,922.00C1469.01,922.00,1469.55,869.17,1470.09,869.17C1470.63,869.17,1471.17,922.00,1471.71,922.00L1473.33,922.00L1474.95,922.00L1476.56,922.00L1478.18,922.00L1479.80,922.00L1481.42,922.00L1483.04,922.00L1484.65,922.00L1486.27,922.00L1487.89,922.00L1489.51,922.00L1491.12,922.00L1492.74,922.00L1494.36,922.00L1495.98,922.00L1497.60,922.00L1499.21,922.00L1500.83,922.00L1502.45,922.00L1504.07,922.00L1505.69,922.00L1507.30,922.00L1508.92,922.00L1510.54,922.00C1511.08,922.00,1511.62,895.58,1512.16,895.58C1512.70,895.58,1513.24,922.00,1513.78,922.00L1515.39,922.00C1515.93,922.00,1516.47,895.58,1517.01,895.58C1517.55,895.58,1518.09,922.00,1518.63,922.00L1520.25,922.00L1521.86,922.00L1523.48,922.00L1525.10,922.00L1526.72,922.00L1528.34,922.00L1529.95,922.00L1531.57,922.00L1533.19,922.00L1534.81,922.00L1536.42,922.00L1538.04,922.00L1539.66,922.00L1541.28,922.00L1542.90,922.00L1544.51,922.00L1546.13,922.00L1547.75,922.00L1549.37,922.00L1550.99,922.00L1552.60,922.00L1554.22,922.00C1554.76,922.00,1555.30,789.92,1555.84,789.92C1556.38,789.92,1556.92,922.00,1557.46,922.00L1559.08,922.00C1559.61,922.00,1560.15,816.33,1560.69,816.33C1561.23,816.33,1561.77,922.00,1562.31,922.00L1563.93,922.00L1565.55,922.00L1567.16,922.00L1568.78,922.00C1569.32,922.00,1569.86,869.17,1570.40,869.17C1570.94,869.17,1571.48,922.00,1572.02,922.00L1573.64,922.00L1575.25,922.00L1576.87,922.00C1577.41,922.00,1577.95,842.75,1578.49,842.75C1579.03,842.75,1579.57,922.00,1580.11,922.00L1581.72,922.00L1583.34,922.00L1584.96,922.00L1586.58,922.00L1588.20,922.00L1589.81,922.00L1591.43,922.00L1593.05,922.00L1594.67,922.00L1596.29,922.00L1597.90,922.00L1599.52,922.00L1601.14,922.00L1602.76,922.00L1604.38,922.00C1604.91,922.00,1605.45,869.17,1605.99,869.17C1606.53,869.17,1607.07,922.00,1607.61,922.00L1609.23,922.00L1610.85,922.00L1612.46,922.00C1613.00,922.00,1613.54,895.58,1614.08,895.58C1614.62,895.58,1615.16,922.00,1615.70,922.00L1617.32,922.00L1618.94,922.00L1620.55,922.00L1622.17,922.00L1623.79,922.00L1625.41,922.00L1627.03,922.00L1628.64,922.00L1630.26,922.00L1631.88,922.00L1633.50,922.00L1635.11,922.00L1636.73,922.00L1638.35,922.00L1639.97,922.00L1641.59,922.00L1643.20,922.00L1644.82,922.00C1645.36,922.00,1645.90,895.58,1646.44,895.58C1646.98,895.58,1647.52,922.00,1648.06,922.00C1648.60,922.00,1649.14,869.17,1649.67,869.17C1650.21,869.17,1650.75,922.00,1651.29,922.00L1652.91,922.00L1654.53,922.00L1656.15,922.00L1657.76,922.00L1659.38,922.00C1659.92,922.00,1660.46,842.75,1661.00,842.75C1661.54,842.75,1662.08,922.00,1662.62,922.00L1664.24,922.00L1665.85,922.00L1667.47,922.00L1669.09,922.00L1670.71,922.00L1672.32,922.00C1672.86,922.00,1673.40,869.17,1673.94,869.17C1674.48,869.17,1675.02,922.00,1675.56,922.00L1677.18,922.00L1678.80,922.00L1680.41,922.00L1682.03,922.00L1683.65,922.00L1685.27,922.00L1686.89,922.00L1688.50,922.00C1689.04,922.00,1689.58,816.33,1690.12,816.33C1690.66,816.33,1691.20,922.00,1691.74,922.00C1692.28,922.00,1692.82,737.08,1693.36,737.08C1693.90,737.08,1694.44,922.00,1694.97,922.00L1696.59,922.00L1698.21,922.00L1699.83,922.00L1701.45,922.00L1703.06,922.00L1704.68,922.00L1706.30,922.00L1706.30,922.00L1117.40,922.00Z" fill="url(#gso)" stroke="none"/>
<path d="M1117.40,922.00L1119.02,922.00L1120.64,922.00L1122.25,922.00L1123.87,922.00L1125.49,922.00L1127.11,922.00L1128.73,922.00L1130.34,922.00L1131.96,922.00L1133.58,922.00L1135.20,922.00L1136.81,922.00C1137.35,922.00,1137.89,789.92,1138.43,789.92C1138.97,789.92,1139.51,922.00,1140.05,922.00C1140.59,922.00,1141.13,789.92,1141.67,789.92C1142.21,789.92,1142.75,922.00,1143.29,922.00L1144.90,922.00L1146.52,922.00L1148.14,922.00L1149.76,922.00L1151.38,922.00L1152.99,922.00L1154.61,922.00L1156.23,922.00C1156.77,922.00,1157.31,895.58,1157.85,895.58C1158.39,895.58,1158.93,922.00,1159.46,922.00L1161.08,922.00L1162.70,922.00L1164.32,922.00L1165.94,922.00L1167.55,922.00L1169.17,922.00L1170.79,922.00L1172.41,922.00C1172.95,922.00,1173.49,869.17,1174.03,869.17C1174.56,869.17,1175.10,922.00,1175.64,922.00L1177.26,922.00L1178.88,922.00L1180.50,922.00L1182.11,922.00L1183.73,922.00C1184.27,922.00,1184.81,895.58,1185.35,895.58C1185.89,895.58,1186.43,922.00,1186.97,922.00L1188.59,922.00L1190.20,922.00L1191.82,922.00L1193.44,922.00C1193.98,922.00,1194.52,869.17,1195.06,869.17C1195.60,869.17,1196.14,922.00,1196.68,922.00L1198.29,922.00L1199.91,922.00C1200.45,922.00,1200.99,895.58,1201.53,895.58C1202.07,895.58,1202.61,922.00,1203.15,922.00L1204.76,922.00L1206.38,922.00L1208.00,922.00L1209.62,922.00L1211.24,922.00L1212.85,922.00L1214.47,922.00L1216.09,922.00C1216.63,922.00,1217.17,869.17,1217.71,842.75C1218.25,816.33,1218.79,763.50,1219.33,763.50C1219.86,763.50,1220.40,816.33,1220.94,842.75C1221.48,869.17,1222.02,922.00,1222.56,922.00L1224.18,922.00L1225.80,922.00L1227.41,922.00L1229.03,922.00L1230.65,922.00L1232.27,922.00C1232.81,922.00,1233.35,842.75,1233.89,842.75C1234.42,842.75,1234.96,922.00,1235.50,922.00L1237.12,922.00L1238.74,922.00L1240.36,922.00L1241.98,922.00C1242.51,922.00,1243.05,895.58,1243.59,895.58C1244.13,895.58,1244.67,922.00,1245.21,922.00L1246.83,922.00L1248.45,922.00L1250.06,922.00C1250.60,922.00,1251.14,869.17,1251.68,869.17C1252.22,869.17,1252.76,922.00,1253.30,922.00L1254.92,922.00L1256.54,922.00L1258.15,922.00C1258.69,922.00,1259.23,895.58,1259.77,895.58C1260.31,895.58,1260.85,922.00,1261.39,922.00L1263.01,922.00L1264.62,922.00L1266.24,922.00C1266.78,922.00,1267.32,842.75,1267.86,842.75C1268.40,842.75,1268.94,922.00,1269.48,922.00L1271.10,922.00L1272.71,922.00L1274.33,922.00C1274.87,922.00,1275.41,869.17,1275.95,869.17C1276.49,869.17,1277.03,922.00,1277.57,922.00L1279.19,922.00L1280.80,922.00L1282.42,922.00L1284.04,922.00L1285.66,922.00L1287.28,922.00L1288.89,922.00L1290.51,922.00L1292.13,922.00L1293.75,922.00L1295.36,922.00L1296.98,922.00L1298.60,922.00L1300.22,922.00L1301.84,922.00L1303.45,922.00C1303.99,922.00,1304.53,895.58,1305.07,895.58C1305.61,895.58,1306.15,922.00,1306.69,922.00C1307.23,922.00,1307.77,869.17,1308.31,869.17L1309.92,869.17C1310.46,869.17,1311.00,922.00,1311.54,922.00L1313.16,922.00L1314.78,922.00C1315.32,922.00,1315.86,895.58,1316.40,895.58C1316.94,895.58,1317.48,922.00,1318.01,922.00L1319.63,922.00L1321.25,922.00L1322.87,922.00L1324.49,922.00L1326.10,922.00L1327.72,922.00L1329.34,922.00L1330.96,922.00C1331.50,922.00,1332.04,895.58,1332.58,895.58C1333.11,895.58,1333.65,922.00,1334.19,922.00L1335.81,922.00L1337.43,922.00L1339.05,922.00L1340.66,922.00L1342.28,922.00C1342.82,922.00,1343.36,763.50,1343.90,763.50C1344.44,763.50,1344.98,922.00,1345.52,922.00L1347.14,922.00C1347.67,922.00,1348.21,869.17,1348.75,869.17C1349.29,869.17,1349.83,922.00,1350.37,922.00C1350.91,922.00,1351.45,869.17,1351.99,869.17C1352.53,869.17,1353.07,922.00,1353.61,922.00L1355.22,922.00C1355.76,922.00,1356.30,895.58,1356.84,895.58C1357.38,895.58,1357.92,922.00,1358.46,922.00L1360.08,922.00L1361.70,922.00L1363.31,922.00L1364.93,922.00C1365.47,922.00,1366.01,895.58,1366.55,895.58C1367.09,895.58,1367.63,922.00,1368.17,922.00L1369.79,922.00L1371.40,922.00L1373.02,922.00L1374.64,922.00L1376.26,922.00L1377.88,922.00C1378.41,922.00,1378.95,895.58,1379.49,895.58C1380.03,895.58,1380.57,922.00,1381.11,922.00L1382.73,922.00L1384.35,922.00L1385.96,922.00C1386.50,922.00,1387.04,789.92,1387.58,789.92C1388.12,789.92,1388.66,922.00,1389.20,922.00L1390.82,922.00L1392.44,922.00L1394.05,922.00L1395.67,922.00L1397.29,922.00L1398.91,922.00C1399.45,922.00,1399.99,869.17,1400.53,869.17C1401.06,869.17,1401.60,922.00,1402.14,922.00C1402.68,922.00,1403.22,710.67,1403.76,710.67C1404.30,710.67,1404.84,922.00,1405.38,922.00L1407.00,922.00L1408.61,922.00L1410.23,922.00L1411.85,922.00L1413.47,922.00L1415.09,922.00L1416.70,922.00L1418.32,922.00L1419.94,922.00L1421.56,922.00L1423.17,922.00L1424.79,922.00L1426.41,922.00L1428.03,922.00C1428.57,922.00,1429.11,895.58,1429.65,895.58C1430.19,895.58,1430.73,922.00,1431.26,922.00L1432.88,922.00L1434.50,922.00L1436.12,922.00L1437.74,922.00L1439.35,922.00L1440.97,922.00L1442.59,922.00C1443.13,922.00,1443.67,895.58,1444.21,895.58C1444.75,895.58,1445.29,922.00,1445.83,922.00L1447.44,922.00L1449.06,922.00L1450.68,922.00L1452.30,922.00L1453.91,922.00L1455.53,922.00L1457.15,922.00L1458.77,922.00L1460.39,922.00L1462.00,922.00L1463.62,922.00L1465.24,922.00L1466.86,922.00L1468.47,922.00C1469.01,922.00,1469.55,869.17,1470.09,869.17C1470.63,869.17,1471.17,922.00,1471.71,922.00L1473.33,922.00L1474.95,922.00L1476.56,922.00L1478.18,922.00L1479.80,922.00L1481.42,922.00L1483.04,922.00L1484.65,922.00L1486.27,922.00L1487.89,922.00L1489.51,922.00L1491.12,922.00L1492.74,922.00L1494.36,922.00L1495.98,922.00L1497.60,922.00L1499.21,922.00L1500.83,922.00L1502.45,922.00L1504.07,922.00L1505.69,922.00L1507.30,922.00L1508.92,922.00L1510.54,922.00C1511.08,922.00,1511.62,895.58,1512.16,895.58C1512.70,895.58,1513.24,922.00,1513.78,922.00L1515.39,922.00C1515.93,922.00,1516.47,895.58,1517.01,895.58C1517.55,895.58,1518.09,922.00,1518.63,922.00L1520.25,922.00L1521.86,922.00L1523.48,922.00L1525.10,922.00L1526.72,922.00L1528.34,922.00L1529.95,922.00L1531.57,922.00L1533.19,922.00L1534.81,922.00L1536.42,922.00L1538.04,922.00L1539.66,922.00L1541.28,922.00L1542.90,922.00L1544.51,922.00L1546.13,922.00L1547.75,922.00L1549.37,922.00L1550.99,922.00L1552.60,922.00L1554.22,922.00C1554.76,922.00,1555.30,789.92,1555.84,789.92C1556.38,789.92,1556.92,922.00,1557.46,922.00L1559.08,922.00C1559.61,922.00,1560.15,816.33,1560.69,816.33C1561.23,816.33,1561.77,922.00,1562.31,922.00L1563.93,922.00L1565.55,922.00L1567.16,922.00L1568.78,922.00C1569.32,922.00,1569.86,869.17,1570.40,869.17C1570.94,869.17,1571.48,922.00,1572.02,922.00L1573.64,922.00L1575.25,922.00L1576.87,922.00C1577.41,922.00,1577.95,842.75,1578.49,842.75C1579.03,842.75,1579.57,922.00,1580.11,922.00L1581.72,922.00L1583.34,922.00L1584.96,922.00L1586.58,922.00L1588.20,922.00L1589.81,922.00L1591.43,922.00L1593.05,922.00L1594.67,922.00L1596.29,922.00L1597.90,922.00L1599.52,922.00L1601.14,922.00L1602.76,922.00L1604.38,922.00C1604.91,922.00,1605.45,869.17,1605.99,869.17C1606.53,869.17,1607.07,922.00,1607.61,922.00L1609.23,922.00L1610.85,922.00L1612.46,922.00C1613.00,922.00,1613.54,895.58,1614.08,895.58C1614.62,895.58,1615.16,922.00,1615.70,922.00L1617.32,922.00L1618.94,922.00L1620.55,922.00L1622.17,922.00L1623.79,922.00L1625.41,922.00L1627.03,922.00L1628.64,922.00L1630.26,922.00L1631.88,922.00L1633.50,922.00L1635.11,922.00L1636.73,922.00L1638.35,922.00L1639.97,922.00L1641.59,922.00L1643.20,922.00L1644.82,922.00C1645.36,922.00,1645.90,895.58,1646.44,895.58C1646.98,895.58,1647.52,922.00,1648.06,922.00C1648.60,922.00,1649.14,869.17,1649.67,869.17C1650.21,869.17,1650.75,922.00,1651.29,922.00L1652.91,922.00L1654.53,922.00L1656.15,922.00L1657.76,922.00L1659.38,922.00C1659.92,922.00,1660.46,842.75,1661.00,842.75C1661.54,842.75,1662.08,922.00,1662.62,922.00L1664.24,922.00L1665.85,922.00L1667.47,922.00L1669.09,922.00L1670.71,922.00L1672.32,922.00C1672.86,922.00,1673.40,869.17,1673.94,869.17C1674.48,869.17,1675.02,922.00,1675.56,922.00L1677.18,922.00L1678.80,922.00L1680.41,922.00L1682.03,922.00L1683.65,922.00L1685.27,922.00L1686.89,922.00L1688.50,922.00C1689.04,922.00,1689.58,816.33,1690.12,816.33C1690.66,816.33,1691.20,922.00,1691.74,922.00C1692.28,922.00,1692.82,737.08,1693.36,737.08C1693.90,737.08,1694.44,922.00,1694.97,922.00L1696.59,922.00L1698.21,922.00L1699.83,922.00L1701.45,922.00L1703.06,922.00L1704.68,922.00L1706.30,922.00" stroke="#8b5cf6" stroke-width="2.8" fill="none" stroke-linejoin="round"/>
<line x1="431.4" x2="1020.3" y1="1128.5" y2="1128.5" stroke="#ebeef3" stroke-width="1" stroke-dasharray="2.8 3.8"/>
<line x1="431.4" x2="1020.3" y1="1207.8" y2="1207.8" stroke="#ebeef3" stroke-width="1" stroke-dasharray="2.8 3.8"/>
<line x1="431.4" x2="1020.3" y1="1287.2" y2="1287.2" stroke="#ebeef3" stroke-width="1" stroke-dasharray="2.8 3.8"/>
<line x1="431.4" x2="1020.3" y1="1366.5" y2="1366.5" stroke="#ebeef3" stroke-width="1" stroke-dasharray="2.8 3.8"/>
<path d="M431.40,1366.00L433.02,1366.00L434.64,1366.00L436.25,1366.00L437.87,1366.00L439.49,1366.00L441.11,1366.00L442.72,1366.00L444.34,1366.00L445.96,1366.00L447.58,1366.00L449.20,1366.00L450.81,1366.00L452.43,1366.00L454.05,1366.00L455.67,1366.00L457.29,1366.00L458.90,1366.00L460.52,1366.00L462.14,1366.00L463.76,1366.00L465.38,1366.00L466.99,1366.00L468.61,1366.00L470.23,1366.00L471.85,1366.00L473.46,1366.00L475.08,1366.00L476.70,1366.00L478.32,1366.00C478.86,1366.00,479.40,1236.61,479.94,1236.61C480.47,1236.61,481.01,1366.00,481.55,1366.00L483.17,1366.00L484.79,1366.00L486.41,1366.00L488.02,1366.00L489.64,1366.00L491.26,1366.00L492.88,1366.00L494.50,1366.00L496.11,1366.00L497.73,1366.00L499.35,1366.00L500.97,1366.00L502.59,1366.00L504.20,1366.00L505.82,1366.00L507.44,1366.00L509.06,1366.00L510.67,1366.00L512.29,1366.00C512.83,1366.00,513.37,1310.68,513.91,1310.68C514.45,1310.68,514.99,1366.00,515.53,1366.00L517.15,1366.00L518.76,1366.00L520.38,1366.00L522.00,1366.00L523.62,1366.00L525.24,1366.00L526.85,1366.00L528.47,1366.00L530.09,1366.00L531.71,1366.00L533.32,1366.00L534.94,1366.00L536.56,1366.00L538.18,1366.00L539.80,1366.00L541.41,1366.00L543.03,1366.00L544.65,1366.00L546.27,1366.00L547.89,1366.00L549.50,1366.00L551.12,1366.00L552.74,1366.00L554.36,1366.00L555.98,1366.00L557.59,1366.00L559.21,1366.00L560.83,1366.00L562.45,1366.00L564.06,1366.00L565.68,1366.00L567.30,1366.00L568.92,1366.00L570.54,1366.00L572.15,1366.00L573.77,1366.00L575.39,1366.00L577.01,1366.00L578.62,1366.00L580.24,1366.00L581.86,1366.00L583.48,1366.00L585.10,1366.00L586.71,1366.00L588.33,1366.00L589.95,1366.00L591.57,1366.00L593.19,1366.00L594.80,1366.00L596.42,1366.00L598.04,1366.00L599.66,1366.00L601.27,1366.00L602.89,1366.00L604.51,1366.00C605.05,1366.00,605.59,1276.57,606.13,1276.57C606.67,1276.57,607.21,1366.00,607.75,1366.00L609.36,1366.00C609.90,1366.00,610.44,1326.62,610.98,1326.62C611.52,1326.62,612.06,1366.00,612.60,1366.00L614.22,1366.00L615.84,1366.00L617.45,1366.00L619.07,1366.00L620.69,1366.00L622.31,1366.00L623.92,1366.00L625.54,1366.00L627.16,1366.00L628.78,1366.00L630.40,1366.00L632.01,1366.00L633.63,1366.00L635.25,1366.00L636.87,1366.00L638.49,1366.00L640.10,1366.00L641.72,1366.00L643.34,1366.00L644.96,1366.00L646.58,1366.00L648.19,1366.00L649.81,1366.00L651.43,1366.00L653.05,1366.00L654.66,1366.00L656.28,1366.00L657.90,1366.00L659.52,1366.00L661.14,1366.00L662.75,1366.00L664.37,1366.00L665.99,1366.00L667.61,1366.00L669.23,1366.00L670.84,1366.00L672.46,1366.00L674.08,1366.00L675.70,1366.00L677.31,1366.00L678.93,1366.00L680.55,1366.00L682.17,1366.00L683.79,1366.00L685.40,1366.00L687.02,1366.00L688.64,1366.00L690.26,1366.00L691.88,1366.00L693.49,1366.00L695.11,1366.00L696.73,1366.00L698.35,1366.00L699.96,1366.00L701.58,1366.00L703.20,1366.00L704.82,1366.00L706.44,1366.00L708.05,1366.00L709.67,1366.00L711.29,1366.00L712.91,1366.00L714.52,1366.00L716.14,1366.00L717.76,1366.00L719.38,1366.00L721.00,1366.00L722.61,1366.00L724.23,1366.00L725.85,1366.00L727.47,1366.00L729.09,1366.00C729.62,1366.00,730.16,1342.56,730.70,1342.56C731.24,1342.56,731.78,1366.00,732.32,1366.00L733.94,1366.00L735.56,1366.00L737.17,1366.00L738.79,1366.00L740.41,1366.00L742.03,1366.00L743.65,1366.00L745.26,1366.00L746.88,1366.00L748.50,1366.00L750.12,1366.00L751.74,1366.00L753.35,1366.00L754.97,1366.00L756.59,1366.00L758.21,1366.00L759.83,1366.00L761.44,1366.00L763.06,1366.00C763.60,1366.00,764.14,1342.56,764.68,1342.56C765.22,1342.56,765.76,1366.00,766.30,1366.00L767.91,1366.00L769.53,1366.00L771.15,1366.00L772.77,1366.00L774.39,1366.00C774.92,1366.00,775.46,1325.68,776.00,1325.68C776.54,1325.68,777.08,1366.00,777.62,1366.00L779.24,1366.00L780.86,1366.00L782.47,1366.00C783.01,1366.00,783.55,1258.18,784.09,1258.18C784.63,1258.18,785.17,1366.00,785.71,1366.00L787.33,1366.00L788.95,1366.00L790.56,1366.00L792.18,1366.00L793.80,1366.00C794.34,1366.00,794.88,1344.44,795.42,1344.44C795.96,1344.44,796.50,1366.00,797.04,1366.00L798.65,1366.00L800.27,1366.00L801.89,1366.00L803.51,1366.00L805.12,1366.00L806.74,1366.00L808.36,1366.00C808.90,1366.00,809.44,1216.93,809.98,1216.93C810.52,1216.93,811.06,1366.00,811.60,1366.00L813.21,1366.00L814.83,1366.00L816.45,1366.00L818.07,1366.00L819.69,1366.00L821.30,1366.00L822.92,1366.00L824.54,1366.00L826.16,1366.00L827.77,1366.00L829.39,1366.00C829.93,1366.00,830.47,1294.74,831.01,1294.74C831.55,1294.74,832.09,1366.00,832.63,1366.00L834.25,1366.00L835.86,1366.00L837.48,1366.00L839.10,1366.00L840.72,1366.00L842.34,1366.00L843.95,1366.00L845.57,1366.00L847.19,1366.00L848.81,1366.00L850.42,1366.00L852.04,1366.00L853.66,1366.00L855.28,1366.00L856.90,1366.00L858.51,1366.00L860.13,1366.00L861.75,1366.00L863.37,1366.00L864.99,1366.00L866.60,1366.00L868.22,1366.00L869.84,1366.00L871.46,1366.00L873.08,1366.00L874.69,1366.00L876.31,1366.00L877.93,1366.00L879.55,1366.00L881.16,1366.00L882.78,1366.00L884.40,1366.00L886.02,1366.00L887.64,1366.00L889.25,1366.00L890.87,1366.00L892.49,1366.00L894.11,1366.00L895.72,1366.00L897.34,1366.00L898.96,1366.00L900.58,1366.00L902.20,1366.00L903.81,1366.00L905.43,1366.00L907.05,1366.00L908.67,1366.00L910.29,1366.00L911.90,1366.00L913.52,1366.00L915.14,1366.00L916.76,1366.00L918.38,1366.00L919.99,1366.00L921.61,1366.00L923.23,1366.00L924.85,1366.00C925.39,1366.00,925.93,1301.31,926.46,1301.31C927.00,1301.31,927.54,1366.00,928.08,1366.00C928.62,1366.00,929.16,1321.93,929.70,1321.93C930.24,1321.93,930.78,1366.00,931.32,1366.00L932.94,1366.00L934.55,1366.00L936.17,1366.00L937.79,1366.00L939.41,1366.00L941.02,1366.00L942.64,1366.00L944.26,1366.00L945.88,1366.00L947.50,1366.00L949.11,1366.00L950.73,1366.00L952.35,1366.00L953.97,1366.00L955.59,1366.00L957.20,1366.00L958.82,1366.00L960.44,1366.00L962.06,1366.00L963.67,1366.00L965.29,1366.00L966.91,1366.00L968.53,1366.00L970.15,1366.00L971.76,1366.00L973.38,1366.00L975.00,1366.00L976.62,1366.00L978.24,1366.00L979.85,1366.00L981.47,1366.00L983.09,1366.00L984.71,1366.00L986.32,1366.00L987.94,1366.00L989.56,1366.00L991.18,1366.00L992.80,1366.00L994.41,1366.00L996.03,1366.00L997.65,1366.00L999.27,1366.00L1000.89,1366.00L1002.50,1366.00L1004.12,1366.00L1005.74,1366.00L1007.36,1366.00L1008.98,1366.00L1010.59,1366.00L1012.21,1366.00L1013.83,1366.00L1015.45,1366.00L1017.06,1366.00L1018.68,1366.00L1020.30,1366.00" stroke="#cbd3de" stroke-width="1.6" stroke-dasharray="6 2.75" fill="none"/>
<defs><linearGradient id="gra" x1="0" y1="0" x2="0" y2="1"><stop offset="0" stop-color="#ef4444" stop-opacity="0.22"/><stop offset="1" stop-color="#ef4444" stop-opacity="0"/></linearGradient></defs>
<path d="M431.40,1366.00L433.02,1366.00L434.64,1366.00L436.25,1366.00L437.87,1366.00L439.49,1366.00L441.11,1366.00L442.72,1366.00L444.34,1366.00L445.96,1366.00L447.58,1366.00L449.20,1366.00L450.81,1366.00C451.35,1366.00,451.89,1337.87,452.43,1337.87C452.97,1337.87,453.51,1366.00,454.05,1366.00L455.67,1366.00L457.29,1366.00L458.90,1366.00L460.52,1366.00L462.14,1366.00L463.76,1366.00L465.38,1366.00L466.99,1366.00L468.61,1366.00L470.23,1366.00C470.77,1366.00,471.31,1354.75,471.85,1354.75C472.39,1354.75,472.92,1366.00,473.46,1366.00L475.08,1366.00L476.70,1366.00L478.32,1366.00L479.94,1366.00L481.55,1366.00L483.17,1366.00L484.79,1366.00L486.41,1366.00C486.95,1366.00,487.49,1352.30,488.02,1352.30C488.56,1352.30,489.10,1366.00,489.64,1366.00L491.26,1366.00L492.88,1366.00L494.50,1366.00L496.11,1366.00L497.73,1366.00L499.35,1366.00C499.89,1366.00,500.43,1235.68,500.97,1235.68C501.51,1235.68,502.05,1366.00,502.59,1366.00L504.20,1366.00L505.82,1366.00L507.44,1366.00L509.06,1366.00L510.67,1366.00L512.29,1366.00L513.91,1366.00C514.45,1366.00,514.99,1345.37,515.53,1345.37C516.07,1345.37,516.61,1366.00,517.15,1366.00L518.76,1366.00C519.30,1366.00,519.84,1350.06,520.38,1350.06C520.92,1350.06,521.46,1366.00,522.00,1366.00L523.62,1366.00L525.24,1366.00L526.85,1366.00L528.47,1366.00L530.09,1366.00C530.63,1366.00,531.17,1342.56,531.71,1342.56C532.25,1342.56,532.79,1366.00,533.32,1366.00C533.86,1366.00,534.40,1159.16,534.94,1159.16C535.48,1159.16,536.02,1366.00,536.56,1366.00L538.18,1366.00L539.80,1366.00L541.41,1366.00L543.03,1366.00L544.65,1366.00L546.27,1366.00C546.81,1366.00,547.35,1311.04,547.89,1311.04L549.50,1311.04C550.04,1311.04,550.58,1366.00,551.12,1366.00L552.74,1366.00L554.36,1366.00L555.98,1366.00C556.51,1366.00,557.05,1200.41,557.59,1200.41C558.13,1200.41,558.67,1366.00,559.21,1366.00L560.83,1366.00L562.45,1366.00L564.06,1366.00C564.60,1366.00,565.14,1197.24,565.68,1197.24C566.22,1197.24,566.76,1366.00,567.30,1366.00L568.92,1366.00L570.54,1366.00L572.15,1366.00L573.77,1366.00L575.39,1366.00L577.01,1366.00L578.62,1366.00L580.24,1366.00L581.86,1366.00L583.48,1366.00L585.10,1366.00L586.71,1366.00L588.33,1366.00C588.87,1366.00,589.41,1133.48,589.95,1133.48C590.49,1133.48,591.03,1366.00,591.57,1366.00L593.19,1366.00L594.80,1366.00L596.42,1366.00L598.04,1366.00L599.66,1366.00L601.27,1366.00L602.89,1366.00L604.51,1366.00L606.13,1366.00L607.75,1366.00L609.36,1366.00L610.98,1366.00L612.60,1366.00L614.22,1366.00L615.84,1366.00L617.45,1366.00L619.07,1366.00L620.69,1366.00L622.31,1366.00L623.92,1366.00C624.46,1366.00,625.00,1311.62,625.54,1311.62C626.08,1311.62,626.62,1366.00,627.16,1366.00L628.78,1366.00L630.40,1366.00L632.01,1366.00L633.63,1366.00L635.25,1366.00L636.87,1366.00L638.49,1366.00L640.10,1366.00L641.72,1366.00L643.34,1366.00L644.96,1366.00L646.58,1366.00L648.19,1366.00L649.81,1366.00L651.43,1366.00L653.05,1366.00L654.66,1366.00L656.28,1366.00C656.82,1366.00,657.36,1362.83,657.90,1362.83C658.44,1362.83,658.98,1366.00,659.52,1366.00L661.14,1366.00L662.75,1366.00L664.37,1366.00L665.99,1366.00L667.61,1366.00L669.23,1366.00L670.84,1366.00L672.46,1366.00L674.08,1366.00L675.70,1366.00L677.31,1366.00L678.93,1366.00C679.47,1366.00,680.01,1329.80,680.55,1329.80C681.09,1329.80,681.63,1366.00,682.17,1366.00L683.79,1366.00L685.40,1366.00L687.02,1366.00L688.64,1366.00L690.26,1366.00L691.88,1366.00C692.41,1366.00,692.95,1364.56,693.49,1364.56C694.03,1364.56,694.57,1366.00,695.11,1366.00L696.73,1366.00L698.35,1366.00L699.96,1366.00C700.50,1366.00,701.04,1342.92,701.58,1342.92C702.12,1342.92,702.66,1366.00,703.20,1366.00L704.82,1366.00L706.44,1366.00L708.05,1366.00L709.67,1366.00L711.29,1366.00L712.91,1366.00L714.52,1366.00L716.14,1366.00C716.68,1366.00,717.22,1367.88,717.76,1367.88C718.30,1367.88,718.84,1366.00,719.38,1366.00L721.00,1366.00L722.61,1366.00L724.23,1366.00L725.85,1366.00L727.47,1366.00L729.09,1366.00L730.70,1366.00L732.32,1366.00L733.94,1366.00L735.56,1366.00L737.17,1366.00L738.79,1366.00L740.41,1366.00L742.03,1366.00L743.65,1366.00L745.26,1366.00L746.88,1366.00L748.50,1366.00L750.12,1366.00L751.74,1366.00L753.35,1366.00L754.97,1366.00L756.59,1366.00L758.21,1366.00L759.83,1366.00L761.44,1366.00L763.06,1366.00L764.68,1366.00L766.30,1366.00L767.91,1366.00C768.45,1366.00,768.99,1349.12,769.53,1349.12C770.07,1349.12,770.61,1366.00,771.15,1366.00C771.69,1366.00,772.23,1286.31,772.77,1286.31C773.31,1286.31,773.85,1366.00,774.39,1366.00L776.00,1366.00L777.62,1366.00L779.24,1366.00L780.86,1366.00L782.47,1366.00C783.01,1366.00,783.55,1291.93,784.09,1291.93C784.63,1291.93,785.17,1366.00,785.71,1366.00L787.33,1366.00L788.95,1366.00L790.56,1366.00L792.18,1366.00L793.80,1366.00L795.42,1366.00L797.04,1366.00L798.65,1366.00L800.27,1366.00L801.89,1366.00L803.51,1366.00C804.05,1366.00,804.59,1359.44,805.12,1359.44C805.66,1359.44,806.20,1366.00,806.74,1366.00L808.36,1366.00L809.98,1366.00L811.60,1366.00L813.21,1366.00L814.83,1366.00L816.45,1366.00L818.07,1366.00L819.69,1366.00L821.30,1366.00L822.92,1366.00L824.54,1366.00L826.16,1366.00L827.77,1366.00L829.39,1366.00L831.01,1366.00L832.63,1366.00L834.25,1366.00L835.86,1366.00L837.48,1366.00L839.10,1366.00L840.72,1366.00L842.34,1366.00L843.95,1366.00L845.57,1366.00L847.19,1366.00L848.81,1366.00L850.42,1366.00C850.96,1366.00,851.50,1315.37,852.04,1315.37C852.58,1315.37,853.12,1366.00,853.66,1366.00L855.28,1366.00L856.90,1366.00C857.44,1366.00,857.98,1356.62,858.51,1356.62C859.05,1356.62,859.59,1366.00,860.13,1366.00L861.75,1366.00L863.37,1366.00L864.99,1366.00L866.60,1366.00L868.22,1366.00C868.76,1366.00,869.30,1351.94,869.84,1351.94C870.38,1351.94,870.92,1366.00,871.46,1366.00L873.08,1366.00C873.61,1366.00,874.15,1303.54,874.69,1303.54C875.23,1303.54,875.77,1366.00,876.31,1366.00L877.93,1366.00L879.55,1366.00L881.16,1366.00L882.78,1366.00L884.40,1366.00L886.02,1366.00L887.64,1366.00L889.25,1366.00L890.87,1366.00L892.49,1366.00L894.11,1366.00L895.72,1366.00L897.34,1366.00L898.96,1366.00L900.58,1366.00L902.20,1366.00L903.81,1366.00L905.43,1366.00L907.05,1366.00L908.67,1366.00L910.29,1366.00L911.90,1366.00L913.52,1366.00L915.14,1366.00L916.76,1366.00L918.38,1366.00L919.99,1366.00L921.61,1366.00L923.23,1366.00L924.85,1366.00L926.46,1366.00L928.08,1366.00L929.70,1366.00L931.32,1366.00L932.94,1366.00L934.55,1366.00L936.17,1366.00L937.79,1366.00L939.41,1366.00L941.02,1366.00L942.64,1366.00L944.26,1366.00L945.88,1366.00L947.50,1366.00L949.11,1366.00L950.73,1366.00L952.35,1366.00L953.97,1366.00L955.59,1366.00L957.20,1366.00L958.82,1366.00C959.36,1366.00,959.90,1289.12,960.44,1289.12C960.98,1289.12,961.52,1366.00,962.06,1366.00L963.67,1366.00L965.29,1366.00L966.91,1366.00L968.53,1366.00L970.15,1366.00L971.76,1366.00L973.38,1366.00C973.92,1366.00,974.46,1279.74,975.00,1279.74C975.54,1279.74,976.08,1366.00,976.62,1366.00L978.24,1366.00L979.85,1366.00L981.47,1366.00L983.09,1366.00L984.71,1366.00L986.32,1366.00L987.94,1366.00L989.56,1366.00L991.18,1366.00L992.80,1366.00L994.41,1366.00L996.03,1366.00L997.65,1366.00L999.27,1366.00L1000.89,1366.00L1002.50,1366.00L1004.12,1366.00L1005.74,1366.00C1006.28,1366.00,1006.82,1339.17,1007.36,1339.17C1007.90,1339.17,1008.44,1366.00,1008.98,1366.00L1010.59,1366.00L1012.21,1366.00L1013.83,1366.00L1015.45,1366.00L1017.06,1366.00L1018.68,1366.00L1020.30,1366.00L1020.30,1366.00L431.40,1366.00Z" fill="url(#gra)" stroke="none"/>
<path d="M431.40,1366.00L433.02,1366.00L434.64,1366.00L436.25,1366.00L437.87,1366.00L439.49,1366.00L441.11,1366.00L442.72,1366.00L444.34,1366.00L445.96,1366.00L447.58,1366.00L449.20,1366.00L450.81,1366.00C451.35,1366.00,451.89,1337.87,452.43,1337.87C452.97,1337.87,453.51,1366.00,454.05,1366.00L455.67,1366.00L457.29,1366.00L458.90,1366.00L460.52,1366.00L462.14,1366.00L463.76,1366.00L465.38,1366.00L466.99,1366.00L468.61,1366.00L470.23,1366.00C470.77,1366.00,471.31,1354.75,471.85,1354.75C472.39,1354.75,472.92,1366.00,473.46,1366.00L475.08,1366.00L476.70,1366.00L478.32,1366.00L479.94,1366.00L481.55,1366.00L483.17,1366.00L484.79,1366.00L486.41,1366.00C486.95,1366.00,487.49,1352.30,488.02,1352.30C488.56,1352.30,489.10,1366.00,489.64,1366.00L491.26,1366.00L492.88,1366.00L494.50,1366.00L496.11,1366.00L497.73,1366.00L499.35,1366.00C499.89,1366.00,500.43,1235.68,500.97,1235.68C501.51,1235.68,502.05,1366.00,502.59,1366.00L504.20,1366.00L505.82,1366.00L507.44,1366.00L509.06,1366.00L510.67,1366.00L512.29,1366.00L513.91,1366.00C514.45,1366.00,514.99,1345.37,515.53,1345.37C516.07,1345.37,516.61,1366.00,517.15,1366.00L518.76,1366.00C519.30,1366.00,519.84,1350.06,520.38,1350.06C520.92,1350.06,521.46,1366.00,522.00,1366.00L523.62,1366.00L525.24,1366.00L526.85,1366.00L528.47,1366.00L530.09,1366.00C530.63,1366.00,531.17,1342.56,531.71,1342.56C532.25,1342.56,532.79,1366.00,533.32,1366.00C533.86,1366.00,534.40,1159.16,534.94,1159.16C535.48,1159.16,536.02,1366.00,536.56,1366.00L538.18,1366.00L539.80,1366.00L541.41,1366.00L543.03,1366.00L544.65,1366.00L546.27,1366.00C546.81,1366.00,547.35,1311.04,547.89,1311.04L549.50,1311.04C550.04,1311.04,550.58,1366.00,551.12,1366.00L552.74,1366.00L554.36,1366.00L555.98,1366.00C556.51,1366.00,557.05,1200.41,557.59,1200.41C558.13,1200.41,558.67,1366.00,559.21,1366.00L560.83,1366.00L562.45,1366.00L564.06,1366.00C564.60,1366.00,565.14,1197.24,565.68,1197.24C566.22,1197.24,566.76,1366.00,567.30,1366.00L568.92,1366.00L570.54,1366.00L572.15,1366.00L573.77,1366.00L575.39,1366.00L577.01,1366.00L578.62,1366.00L580.24,1366.00L581.86,1366.00L583.48,1366.00L585.10,1366.00L586.71,1366.00L588.33,1366.00C588.87,1366.00,589.41,1133.48,589.95,1133.48C590.49,1133.48,591.03,1366.00,591.57,1366.00L593.19,1366.00L594.80,1366.00L596.42,1366.00L598.04,1366.00L599.66,1366.00L601.27,1366.00L602.89,1366.00L604.51,1366.00L606.13,1366.00L607.75,1366.00L609.36,1366.00L610.98,1366.00L612.60,1366.00L614.22,1366.00L615.84,1366.00L617.45,1366.00L619.07,1366.00L620.69,1366.00L622.31,1366.00L623.92,1366.00C624.46,1366.00,625.00,1311.62,625.54,1311.62C626.08,1311.62,626.62,1366.00,627.16,1366.00L628.78,1366.00L630.40,1366.00L632.01,1366.00L633.63,1366.00L635.25,1366.00L636.87,1366.00L638.49,1366.00L640.10,1366.00L641.72,1366.00L643.34,1366.00L644.96,1366.00L646.58,1366.00L648.19,1366.00L649.81,1366.00L651.43,1366.00L653.05,1366.00L654.66,1366.00L656.28,1366.00C656.82,1366.00,657.36,1362.83,657.90,1362.83C658.44,1362.83,658.98,1366.00,659.52,1366.00L661.14,1366.00L662.75,1366.00L664.37,1366.00L665.99,1366.00L667.61,1366.00L669.23,1366.00L670.84,1366.00L672.46,1366.00L674.08,1366.00L675.70,1366.00L677.31,1366.00L678.93,1366.00C679.47,1366.00,680.01,1329.80,680.55,1329.80C681.09,1329.80,681.63,1366.00,682.17,1366.00L683.79,1366.00L685.40,1366.00L687.02,1366.00L688.64,1366.00L690.26,1366.00L691.88,1366.00C692.41,1366.00,692.95,1364.56,693.49,1364.56C694.03,1364.56,694.57,1366.00,695.11,1366.00L696.73,1366.00L698.35,1366.00L699.96,1366.00C700.50,1366.00,701.04,1342.92,701.58,1342.92C702.12,1342.92,702.66,1366.00,703.20,1366.00L704.82,1366.00L706.44,1366.00L708.05,1366.00L709.67,1366.00L711.29,1366.00L712.91,1366.00L714.52,1366.00L716.14,1366.00C716.68,1366.00,717.22,1367.88,717.76,1367.88C718.30,1367.88,718.84,1366.00,719.38,1366.00L721.00,1366.00L722.61,1366.00L724.23,1366.00L725.85,1366.00L727.47,1366.00L729.09,1366.00L730.70,1366.00L732.32,1366.00L733.94,1366.00L735.56,1366.00L737.17,1366.00L738.79,1366.00L740.41,1366.00L742.03,1366.00L743.65,1366.00L745.26,1366.00L746.88,1366.00L748.50,1366.00L750.12,1366.00L751.74,1366.00L753.35,1366.00L754.97,1366.00L756.59,1366.00L758.21,1366.00L759.83,1366.00L761.44,1366.00L763.06,1366.00L764.68,1366.00L766.30,1366.00L767.91,1366.00C768.45,1366.00,768.99,1349.12,769.53,1349.12C770.07,1349.12,770.61,1366.00,771.15,1366.00C771.69,1366.00,772.23,1286.31,772.77,1286.31C773.31,1286.31,773.85,1366.00,774.39,1366.00L776.00,1366.00L777.62,1366.00L779.24,1366.00L780.86,1366.00L782.47,1366.00C783.01,1366.00,783.55,1291.93,784.09,1291.93C784.63,1291.93,785.17,1366.00,785.71,1366.00L787.33,1366.00L788.95,1366.00L790.56,1366.00L792.18,1366.00L793.80,1366.00L795.42,1366.00L797.04,1366.00L798.65,1366.00L800.27,1366.00L801.89,1366.00L803.51,1366.00C804.05,1366.00,804.59,1359.44,805.12,1359.44C805.66,1359.44,806.20,1366.00,806.74,1366.00L808.36,1366.00L809.98,1366.00L811.60,1366.00L813.21,1366.00L814.83,1366.00L816.45,1366.00L818.07,1366.00L819.69,1366.00L821.30,1366.00L822.92,1366.00L824.54,1366.00L826.16,1366.00L827.77,1366.00L829.39,1366.00L831.01,1366.00L832.63,1366.00L834.25,1366.00L835.86,1366.00L837.48,1366.00L839.10,1366.00L840.72,1366.00L842.34,1366.00L843.95,1366.00L845.57,1366.00L847.19,1366.00L848.81,1366.00L850.42,1366.00C850.96,1366.00,851.50,1315.37,852.04,1315.37C852.58,1315.37,853.12,1366.00,853.66,1366.00L855.28,1366.00L856.90,1366.00C857.44,1366.00,857.98,1356.62,858.51,1356.62C859.05,1356.62,859.59,1366.00,860.13,1366.00L861.75,1366.00L863.37,1366.00L864.99,1366.00L866.60,1366.00L868.22,1366.00C868.76,1366.00,869.30,1351.94,869.84,1351.94C870.38,1351.94,870.92,1366.00,871.46,1366.00L873.08,1366.00C873.61,1366.00,874.15,1303.54,874.69,1303.54C875.23,1303.54,875.77,1366.00,876.31,1366.00L877.93,1366.00L879.55,1366.00L881.16,1366.00L882.78,1366.00L884.40,1366.00L886.02,1366.00L887.64,1366.00L889.25,1366.00L890.87,1366.00L892.49,1366.00L894.11,1366.00L895.72,1366.00L897.34,1366.00L898.96,1366.00L900.58,1366.00L902.20,1366.00L903.81,1366.00L905.43,1366.00L907.05,1366.00L908.67,1366.00L910.29,1366.00L911.90,1366.00L913.52,1366.00L915.14,1366.00L916.76,1366.00L918.38,1366.00L919.99,1366.00L921.61,1366.00L923.23,1366.00L924.85,1366.00L926.46,1366.00L928.08,1366.00L929.70,1366.00L931.32,1366.00L932.94,1366.00L934.55,1366.00L936.17,1366.00L937.79,1366.00L939.41,1366.00L941.02,1366.00L942.64,1366.00L944.26,1366.00L945.88,1366.00L947.50,1366.00L949.11,1366.00L950.73,1366.00L952.35,1366.00L953.97,1366.00L955.59,1366.00L957.20,1366.00L958.82,1366.00C959.36,1366.00,959.90,1289.12,960.44,1289.12C960.98,1289.12,961.52,1366.00,962.06,1366.00L963.67,1366.00L965.29,1366.00L966.91,1366.00L968.53,1366.00L970.15,1366.00L971.76,1366.00L973.38,1366.00C973.92,1366.00,974.46,1279.74,975.00,1279.74C975.54,1279.74,976.08,1366.00,976.62,1366.00L978.24,1366.00L979.85,1366.00L981.47,1366.00L983.09,1366.00L984.71,1366.00L986.32,1366.00L987.94,1366.00L989.56,1366.00L991.18,1366.00L992.80,1366.00L994.41,1366.00L996.03,1366.00L997.65,1366.00L999.27,1366.00L1000.89,1366.00L1002.50,1366.00L1004.12,1366.00L1005.74,1366.00C1006.28,1366.00,1006.82,1339.17,1007.36,1339.17C1007.90,1339.17,1008.44,1366.00,1008.98,1366.00L1010.59,1366.00L1012.21,1366.00L1013.83,1366.00L1015.45,1366.00L1017.06,1366.00L1018.68,1366.00L1020.30,1366.00" stroke="#ef4444" stroke-width="2.8" fill="none" stroke-linejoin="round"/>
<line x1="1117.2" x2="1706.1" y1="1128.5" y2="1128.5" stroke="#ebeef3" stroke-width="1" stroke-dasharray="2.8 3.8"/>
<line x1="1117.2" x2="1706.1" y1="1207.8" y2="1207.8" stroke="#ebeef3" stroke-width="1" stroke-dasharray="2.8 3.8"/>
<line x1="1117.2" x2="1706.1" y1="1287.2" y2="1287.2" stroke="#ebeef3" stroke-width="1" stroke-dasharray="2.8 3.8"/>
<line x1="1117.2" x2="1706.1" y1="1366.5" y2="1366.5" stroke="#ebeef3" stroke-width="1" stroke-dasharray="2.8 3.8"/>
<line x1="1117.2" x2="1706.1" y1="1445.8" y2="1445.8" stroke="#ebeef3" stroke-width="1" stroke-dasharray="2.8 3.8"/>
<path d="M1117.20,1445.30L1118.82,1445.30L1120.44,1445.30L1122.05,1445.30L1123.67,1445.30L1125.29,1445.30L1126.91,1445.30L1128.53,1445.30L1130.14,1445.30L1131.76,1445.30L1133.38,1445.30L1135.00,1445.30L1136.61,1445.30L1138.23,1445.30L1139.85,1445.30L1141.47,1445.30L1143.09,1445.30L1144.70,1445.30L1146.32,1445.30L1147.94,1445.30L1149.56,1445.30L1151.17,1445.30L1152.79,1445.30C1153.33,1445.30,1153.87,1429.43,1154.41,1429.43C1154.95,1429.43,1155.49,1445.30,1156.03,1445.30L1157.65,1445.30L1159.26,1445.30L1160.88,1445.30C1161.42,1445.30,1161.96,1270.78,1162.50,1270.78C1163.04,1270.78,1163.58,1445.30,1164.12,1445.30C1164.66,1445.30,1165.20,1413.57,1165.74,1413.57C1166.28,1413.57,1166.81,1445.30,1167.35,1445.30L1168.97,1445.30L1170.59,1445.30L1172.21,1445.30L1173.83,1445.30L1175.44,1445.30L1177.06,1445.30L1178.68,1445.30L1180.30,1445.30L1181.91,1445.30L1183.53,1445.30L1185.15,1445.30L1186.77,1445.30L1188.39,1445.30L1190.00,1445.30L1191.62,1445.30L1193.24,1445.30L1194.86,1445.30L1196.47,1445.30C1197.01,1445.30,1197.55,1397.70,1198.09,1397.70L1199.71,1397.70C1200.25,1397.70,1200.79,1445.30,1201.33,1445.30L1202.95,1445.30L1204.56,1445.30L1206.18,1445.30L1207.80,1445.30L1209.42,1445.30L1211.04,1445.30L1212.65,1445.30L1214.27,1445.30L1215.89,1445.30L1217.51,1445.30L1219.12,1445.30L1220.74,1445.30L1222.36,1445.30L1223.98,1445.30L1225.60,1445.30L1227.21,1445.30L1228.83,1445.30L1230.45,1445.30L1232.07,1445.30L1233.69,1445.30L1235.30,1445.30L1236.92,1445.30L1238.54,1445.30L1240.16,1445.30L1241.78,1445.30L1243.39,1445.30L1245.01,1445.30L1246.63,1445.30L1248.25,1445.30L1249.86,1445.30L1251.48,1445.30L1253.10,1445.30L1254.72,1445.30L1256.34,1445.30L1257.95,1445.30C1258.49,1445.30,1259.03,1413.57,1259.57,1413.57C1260.11,1413.57,1260.65,1445.30,1261.19,1445.30L1262.81,1445.30L1264.42,1445.30L1266.04,1445.30L1267.66,1445.30L1269.28,1445.30L1270.90,1445.30L1272.51,1445.30L1274.13,1445.30L1275.75,1445.30L1277.37,1445.30L1278.99,1445.30L1280.60,1445.30L1282.22,1445.30L1283.84,1445.30L1285.46,1445.30L1287.08,1445.30L1288.69,1445.30L1290.31,1445.30C1290.85,1445.30,1291.39,1397.70,1291.93,1397.70C1292.47,1397.70,1293.01,1445.30,1293.55,1445.30L1295.16,1445.30C1295.70,1445.30,1296.24,1429.43,1296.78,1429.43C1297.32,1429.43,1297.86,1445.30,1298.40,1445.30L1300.02,1445.30L1301.64,1445.30L1303.25,1445.30L1304.87,1445.30L1306.49,1445.30L1308.11,1445.30L1309.72,1445.30L1311.34,1445.30L1312.96,1445.30L1314.58,1445.30L1316.20,1445.30L1317.81,1445.30L1319.43,1445.30L1321.05,1445.30L1322.67,1445.30L1324.29,1445.30L1325.90,1445.30L1327.52,1445.30L1329.14,1445.30L1330.76,1445.30L1332.38,1445.30L1333.99,1445.30L1335.61,1445.30L1337.23,1445.30L1338.85,1445.30L1340.46,1445.30L1342.08,1445.30L1343.70,1445.30L1345.32,1445.30L1346.94,1445.30L1348.55,1445.30L1350.17,1445.30L1351.79,1445.30L1353.41,1445.30L1355.03,1445.30L1356.64,1445.30C1357.18,1445.30,1357.72,1429.43,1358.26,1429.43C1358.80,1429.43,1359.34,1445.30,1359.88,1445.30L1361.50,1445.30L1363.11,1445.30L1364.73,1445.30L1366.35,1445.30L1367.97,1445.30L1369.59,1445.30L1371.20,1445.30L1372.82,1445.30L1374.44,1445.30L1376.06,1445.30L1377.67,1445.30L1379.29,1445.30L1380.91,1445.30L1382.53,1445.30L1384.15,1445.30L1385.76,1445.30L1387.38,1445.30L1389.00,1445.30L1390.62,1445.30L1392.24,1445.30L1393.85,1445.30L1395.47,1445.30L1397.09,1445.30C1397.63,1445.30,1398.17,1397.70,1398.71,1397.70C1399.25,1397.70,1399.79,1445.30,1400.33,1445.30L1401.94,1445.30L1403.56,1445.30L1405.18,1445.30L1406.80,1445.30L1408.41,1445.30L1410.03,1445.30L1411.65,1445.30L1413.27,1445.30L1414.89,1445.30C1415.42,1445.30,1415.96,1413.57,1416.50,1413.57C1417.04,1413.57,1417.58,1445.30,1418.12,1445.30L1419.74,1445.30L1421.36,1445.30L1422.97,1445.30L1424.59,1445.30L1426.21,1445.30L1427.83,1445.30L1429.45,1445.30L1431.06,1445.30L1432.68,1445.30L1434.30,1445.30L1435.92,1445.30L1437.54,1445.30L1439.15,1445.30L1440.77,1445.30L1442.39,1445.30L1444.01,1445.30L1445.62,1445.30L1447.24,1445.30L1448.86,1445.30L1450.48,1445.30L1452.10,1445.30L1453.71,1445.30L1455.33,1445.30L1456.95,1445.30L1458.57,1445.30L1460.19,1445.30C1460.72,1445.30,1461.26,1429.43,1461.80,1429.43C1462.34,1429.43,1462.88,1445.30,1463.42,1445.30L1465.04,1445.30L1466.66,1445.30L1468.28,1445.30L1469.89,1445.30L1471.51,1445.30L1473.13,1445.30L1474.75,1445.30L1476.36,1445.30L1477.98,1445.30L1479.60,1445.30L1481.22,1445.30L1482.84,1445.30L1484.45,1445.30L1486.07,1445.30L1487.69,1445.30L1489.31,1445.30L1490.92,1445.30L1492.54,1445.30L1494.16,1445.30C1494.70,1445.30,1495.24,1413.57,1495.78,1413.57C1496.32,1413.57,1496.86,1445.30,1497.40,1445.30L1499.01,1445.30L1500.63,1445.30L1502.25,1445.30L1503.87,1445.30L1505.49,1445.30L1507.10,1445.30L1508.72,1445.30L1510.34,1445.30L1511.96,1445.30L1513.57,1445.30L1515.19,1445.30C1515.73,1445.30,1516.27,1429.43,1516.81,1429.43C1517.35,1429.43,1517.89,1445.30,1518.43,1445.30L1520.05,1445.30L1521.66,1445.30L1523.28,1445.30L1524.90,1445.30L1526.52,1445.30L1528.14,1445.30L1529.75,1445.30L1531.37,1445.30L1532.99,1445.30L1534.61,1445.30L1536.22,1445.30L1537.84,1445.30L1539.46,1445.30L1541.08,1445.30L1542.70,1445.30L1544.31,1445.30L1545.93,1445.30L1547.55,1445.30L1549.17,1445.30L1550.79,1445.30C1551.33,1445.30,1551.86,1429.43,1552.40,1429.43C1552.94,1429.43,1553.48,1445.30,1554.02,1445.30L1555.64,1445.30L1557.26,1445.30L1558.88,1445.30L1560.49,1445.30L1562.11,1445.30L1563.73,1445.30L1565.35,1445.30L1566.96,1445.30L1568.58,1445.30L1570.20,1445.30L1571.82,1445.30L1573.44,1445.30L1575.05,1445.30L1576.67,1445.30L1578.29,1445.30L1579.91,1445.30L1581.52,1445.30L1583.14,1445.30L1584.76,1445.30L1586.38,1445.30L1588.00,1445.30L1589.61,1445.30L1591.23,1445.30L1592.85,1445.30L1594.47,1445.30L1596.09,1445.30L1597.70,1445.30L1599.32,1445.30L1600.94,1445.30L1602.56,1445.30C1603.10,1445.30,1603.64,1143.87,1604.17,1143.87C1604.71,1143.87,1605.25,1445.30,1605.79,1445.30L1607.41,1445.30L1609.03,1445.30L1610.65,1445.30L1612.26,1445.30C1612.80,1445.30,1613.34,1365.97,1613.88,1365.97C1614.42,1365.97,1614.96,1445.30,1615.50,1445.30L1617.12,1445.30L1618.74,1445.30L1620.35,1445.30L1621.97,1445.30L1623.59,1445.30L1625.21,1445.30L1626.82,1445.30L1628.44,1445.30L1630.06,1445.30L1631.68,1445.30L1633.30,1445.30L1634.91,1445.30L1636.53,1445.30L1638.15,1445.30L1639.77,1445.30L1641.39,1445.30L1643.00,1445.30L1644.62,1445.30L1646.24,1445.30L1647.86,1445.30L1649.47,1445.30L1651.09,1445.30C1651.63,1445.30,1652.17,1365.97,1652.71,1365.97C1653.25,1365.97,1653.79,1445.30,1654.33,1445.30L1655.95,1445.30L1657.56,1445.30L1659.18,1445.30L1660.80,1445.30L1662.42,1445.30L1664.04,1445.30L1665.65,1445.30L1667.27,1445.30L1668.89,1445.30L1670.51,1445.30L1672.12,1445.30L1673.74,1445.30L1675.36,1445.30L1676.98,1445.30L1678.60,1445.30L1680.21,1445.30L1681.83,1445.30L1683.45,1445.30L1685.07,1445.30L1686.69,1445.30L1688.30,1445.30L1689.92,1445.30L1691.54,1445.30L1693.16,1445.30L1694.77,1445.30L1696.39,1445.30L1698.01,1445.30L1699.63,1445.30L1701.25,1445.30L1702.86,1445.30L1704.48,1445.30L1706.10,1445.30" stroke="#cbd3de" stroke-width="1.6" stroke-dasharray="6 2.75" fill="none"/>
<defs><linearGradient id="grj" x1="0" y1="0" x2="0" y2="1"><stop offset="0" stop-color="#ec4899" stop-opacity="0.22"/><stop offset="1" stop-color="#ec4899" stop-opacity="0"/></linearGradient></defs>
<path d="M1117.20,1445.30L1118.82,1445.30L1120.44,1445.30C1120.98,1445.30,1121.51,1413.57,1122.05,1413.57C1122.59,1413.57,1123.13,1445.30,1123.67,1445.30L1125.29,1445.30L1126.91,1445.30L1128.53,1445.30L1130.14,1445.30L1131.76,1445.30L1133.38,1445.30L1135.00,1445.30L1136.61,1445.30C1137.15,1445.30,1137.69,1365.97,1138.23,1365.97C1138.77,1365.97,1139.31,1445.30,1139.85,1445.30L1141.47,1445.30L1143.09,1445.30L1144.70,1445.30L1146.32,1445.30L1147.94,1445.30L1149.56,1445.30L1151.17,1445.30L1152.79,1445.30L1154.41,1445.30L1156.03,1445.30C1156.57,1445.30,1157.11,1429.43,1157.65,1429.43C1158.19,1429.43,1158.73,1445.30,1159.26,1445.30L1160.88,1445.30L1162.50,1445.30L1164.12,1445.30L1165.74,1445.30L1167.35,1445.30L1168.97,1445.30L1170.59,1445.30L1172.21,1445.30C1172.75,1445.30,1173.29,1381.84,1173.83,1381.84C1174.36,1381.84,1174.90,1445.30,1175.44,1445.30L1177.06,1445.30L1178.68,1445.30L1180.30,1445.30L1181.91,1445.30L1183.53,1445.30L1185.15,1445.30C1185.69,1445.30,1186.23,1413.57,1186.77,1413.57C1187.31,1413.57,1187.85,1445.30,1188.39,1445.30L1190.00,1445.30L1191.62,1445.30L1193.24,1445.30L1194.86,1445.30L1196.47,1445.30L1198.09,1445.30L1199.71,1445.30C1200.25,1445.30,1200.79,1429.43,1201.33,1429.43C1201.87,1429.43,1202.41,1445.30,1202.95,1445.30L1204.56,1445.30C1205.10,1445.30,1205.64,1429.43,1206.18,1429.43C1206.72,1429.43,1207.26,1445.30,1207.80,1445.30L1209.42,1445.30L1211.04,1445.30L1212.65,1445.30L1214.27,1445.30L1215.89,1445.30C1216.43,1445.30,1216.97,1350.11,1217.51,1350.11C1218.05,1350.11,1218.59,1445.30,1219.12,1445.30C1219.66,1445.30,1220.20,1334.24,1220.74,1334.24C1221.28,1334.24,1221.82,1445.30,1222.36,1445.30L1223.98,1445.30L1225.60,1445.30L1227.21,1445.30L1228.83,1445.30L1230.45,1445.30L1232.07,1445.30C1232.61,1445.30,1233.15,1429.43,1233.69,1429.43L1235.30,1429.43C1235.84,1429.43,1236.38,1445.30,1236.92,1445.30L1238.54,1445.30L1240.16,1445.30L1241.78,1445.30C1242.31,1445.30,1242.85,1413.57,1243.39,1413.57C1243.93,1413.57,1244.47,1445.30,1245.01,1445.30L1246.63,1445.30L1248.25,1445.30L1249.86,1445.30L1251.48,1445.30C1252.02,1445.30,1252.56,1413.57,1253.10,1413.57C1253.64,1413.57,1254.18,1445.30,1254.72,1445.30L1256.34,1445.30L1257.95,1445.30L1259.57,1445.30L1261.19,1445.30L1262.81,1445.30L1264.42,1445.30L1266.04,1445.30L1267.66,1445.30L1269.28,1445.30L1270.90,1445.30L1272.51,1445.30L1274.13,1445.30C1274.67,1445.30,1275.21,1429.43,1275.75,1429.43C1276.29,1429.43,1276.83,1445.30,1277.37,1445.30L1278.99,1445.30L1280.60,1445.30L1282.22,1445.30L1283.84,1445.30L1285.46,1445.30L1287.08,1445.30L1288.69,1445.30L1290.31,1445.30L1291.93,1445.30L1293.55,1445.30L1295.16,1445.30L1296.78,1445.30L1298.40,1445.30L1300.02,1445.30L1301.64,1445.30L1303.25,1445.30L1304.87,1445.30L1306.49,1445.30L1308.11,1445.30L1309.72,1445.30C1310.26,1445.30,1310.80,1413.57,1311.34,1413.57C1311.88,1413.57,1312.42,1445.30,1312.96,1445.30L1314.58,1445.30L1316.20,1445.30L1317.81,1445.30L1319.43,1445.30L1321.05,1445.30L1322.67,1445.30L1324.29,1445.30L1325.90,1445.30L1327.52,1445.30L1329.14,1445.30L1330.76,1445.30L1332.38,1445.30L1333.99,1445.30L1335.61,1445.30L1337.23,1445.30L1338.85,1445.30L1340.46,1445.30L1342.08,1445.30C1342.62,1445.30,1343.16,1413.57,1343.70,1413.57C1344.24,1413.57,1344.78,1445.30,1345.32,1445.30L1346.94,1445.30C1347.47,1445.30,1348.01,1429.43,1348.55,1429.43C1349.09,1429.43,1349.63,1445.30,1350.17,1445.30L1351.79,1445.30L1353.41,1445.30L1355.03,1445.30L1356.64,1445.30L1358.26,1445.30L1359.88,1445.30L1361.50,1445.30L1363.11,1445.30L1364.73,1445.30C1365.27,1445.30,1365.81,1429.43,1366.35,1429.43C1366.89,1429.43,1367.43,1445.30,1367.97,1445.30L1369.59,1445.30L1371.20,1445.30L1372.82,1445.30L1374.44,1445.30L1376.06,1445.30L1377.67,1445.30C1378.21,1445.30,1378.75,1429.43,1379.29,1429.43C1379.83,1429.43,1380.37,1445.30,1380.91,1445.30L1382.53,1445.30L1384.15,1445.30L1385.76,1445.30C1386.30,1445.30,1386.84,1413.57,1387.38,1413.57L1389.00,1413.57C1389.54,1413.57,1390.08,1445.30,1390.62,1445.30L1392.24,1445.30C1392.77,1445.30,1393.31,1429.43,1393.85,1429.43C1394.39,1429.43,1394.93,1445.30,1395.47,1445.30L1397.09,1445.30L1398.71,1445.30L1400.33,1445.30L1401.94,1445.30C1402.48,1445.30,1403.02,1429.43,1403.56,1429.43C1404.10,1429.43,1404.64,1445.30,1405.18,1445.30L1406.80,1445.30L1408.41,1445.30L1410.03,1445.30L1411.65,1445.30L1413.27,1445.30L1414.89,1445.30L1416.50,1445.30L1418.12,1445.30C1418.66,1445.30,1419.20,1413.57,1419.74,1413.57C1420.28,1413.57,1420.82,1445.30,1421.36,1445.30C1421.90,1445.30,1422.44,1429.43,1422.97,1429.43C1423.51,1429.43,1424.05,1445.30,1424.59,1445.30L1426.21,1445.30L1427.83,1445.30L1429.45,1445.30L1431.06,1445.30L1432.68,1445.30L1434.30,1445.30L1435.92,1445.30L1437.54,1445.30L1439.15,1445.30L1440.77,1445.30L1442.39,1445.30L1444.01,1445.30L1445.62,1445.30C1446.16,1445.30,1446.70,1429.43,1447.24,1429.43C1447.78,1429.43,1448.32,1445.30,1448.86,1445.30L1450.48,1445.30L1452.10,1445.30L1453.71,1445.30C1454.25,1445.30,1454.79,1365.97,1455.33,1365.97C1455.87,1365.97,1456.41,1445.30,1456.95,1445.30C1457.49,1445.30,1458.03,1429.43,1458.57,1429.43C1459.11,1429.43,1459.65,1445.30,1460.19,1445.30L1461.80,1445.30L1463.42,1445.30L1465.04,1445.30L1466.66,1445.30L1468.28,1445.30C1468.81,1445.30,1469.35,1381.84,1469.89,1381.84C1470.43,1381.84,1470.97,1445.30,1471.51,1445.30L1473.13,1445.30L1474.75,1445.30L1476.36,1445.30L1477.98,1445.30L1479.60,1445.30L1481.22,1445.30L1482.84,1445.30L1484.45,1445.30L1486.07,1445.30L1487.69,1445.30L1489.31,1445.30C1489.85,1445.30,1490.39,1429.43,1490.92,1429.43C1491.46,1429.43,1492.00,1445.30,1492.54,1445.30L1494.16,1445.30L1495.78,1445.30L1497.40,1445.30L1499.01,1445.30L1500.63,1445.30L1502.25,1445.30L1503.87,1445.30L1505.49,1445.30L1507.10,1445.30L1508.72,1445.30L1510.34,1445.30L1511.96,1445.30L1513.57,1445.30L1515.19,1445.30L1516.81,1445.30L1518.43,1445.30L1520.05,1445.30L1521.66,1445.30L1523.28,1445.30L1524.90,1445.30L1526.52,1445.30L1528.14,1445.30L1529.75,1445.30L1531.37,1445.30L1532.99,1445.30L1534.61,1445.30L1536.22,1445.30C1536.76,1445.30,1537.30,1429.43,1537.84,1429.43C1538.38,1429.43,1538.92,1445.30,1539.46,1445.30L1541.08,1445.30L1542.70,1445.30C1543.24,1445.30,1543.77,1381.84,1544.31,1381.84C1544.85,1381.84,1545.39,1445.30,1545.93,1445.30L1547.55,1445.30L1549.17,1445.30L1550.79,1445.30L1552.40,1445.30L1554.02,1445.30C1554.56,1445.30,1555.10,1397.70,1555.64,1397.70C1556.18,1397.70,1556.72,1445.30,1557.26,1445.30L1558.88,1445.30C1559.41,1445.30,1559.95,1397.70,1560.49,1397.70C1561.03,1397.70,1561.57,1445.30,1562.11,1445.30L1563.73,1445.30L1565.35,1445.30L1566.96,1445.30L1568.58,1445.30L1570.20,1445.30L1571.82,1445.30L1573.44,1445.30L1575.05,1445.30L1576.67,1445.30L1578.29,1445.30L1579.91,1445.30L1581.52,1445.30L1583.14,1445.30L1584.76,1445.30L1586.38,1445.30L1588.00,1445.30L1589.61,1445.30L1591.23,1445.30L1592.85,1445.30L1594.47,1445.30L1596.09,1445.30L1597.70,1445.30L1599.32,1445.30L1600.94,1445.30L1602.56,1445.30L1604.17,1445.30L1605.79,1445.30L1607.41,1445.30L1609.03,1445.30L1610.65,1445.30L1612.26,1445.30L1613.88,1445.30L1615.50,1445.30L1617.12,1445.30L1618.74,1445.30L1620.35,1445.30L1621.97,1445.30L1623.59,1445.30C1624.13,1445.30,1624.67,1429.43,1625.21,1429.43C1625.75,1429.43,1626.29,1445.30,1626.82,1445.30L1628.44,1445.30L1630.06,1445.30L1631.68,1445.30L1633.30,1445.30L1634.91,1445.30L1636.53,1445.30L1638.15,1445.30L1639.77,1445.30L1641.39,1445.30L1643.00,1445.30L1644.62,1445.30C1645.16,1445.30,1645.70,1413.57,1646.24,1413.57C1646.78,1413.57,1647.32,1445.30,1647.86,1445.30L1649.47,1445.30L1651.09,1445.30L1652.71,1445.30L1654.33,1445.30L1655.95,1445.30L1657.56,1445.30L1659.18,1445.30C1659.72,1445.30,1660.26,1397.70,1660.80,1397.70C1661.34,1397.70,1661.88,1445.30,1662.42,1445.30L1664.04,1445.30L1665.65,1445.30L1667.27,1445.30L1668.89,1445.30L1670.51,1445.30L1672.12,1445.30L1673.74,1445.30L1675.36,1445.30L1676.98,1445.30L1678.60,1445.30L1680.21,1445.30L1681.83,1445.30L1683.45,1445.30L1685.07,1445.30L1686.69,1445.30L1688.30,1445.30C1688.84,1445.30,1689.38,1429.43,1689.92,1429.43C1690.46,1429.43,1691.00,1445.30,1691.54,1445.30C1692.08,1445.30,1692.62,1429.43,1693.16,1429.43C1693.70,1429.43,1694.24,1445.30,1694.77,1445.30L1696.39,1445.30L1698.01,1445.30L1699.63,1445.30L1701.25,1445.30L1702.86,1445.30L1704.48,1445.30L1706.10,1445.30L1706.10,1445.30L1117.20,1445.30Z" fill="url(#grj)" stroke="none"/>
<path d="M1117.20,1445.30L1118.82,1445.30L1120.44,1445.30C1120.98,1445.30,1121.51,1413.57,1122.05,1413.57C1122.59,1413.57,1123.13,1445.30,1123.67,1445.30L1125.29,1445.30L1126.91,1445.30L1128.53,1445.30L1130.14,1445.30L1131.76,1445.30L1133.38,1445.30L1135.00,1445.30L1136.61,1445.30C1137.15,1445.30,1137.69,1365.97,1138.23,1365.97C1138.77,1365.97,1139.31,1445.30,1139.85,1445.30L1141.47,1445.30L1143.09,1445.30L1144.70,1445.30L1146.32,1445.30L1147.94,1445.30L1149.56,1445.30L1151.17,1445.30L1152.79,1445.30L1154.41,1445.30L1156.03,1445.30C1156.57,1445.30,1157.11,1429.43,1157.65,1429.43C1158.19,1429.43,1158.73,1445.30,1159.26,1445.30L1160.88,1445.30L1162.50,1445.30L1164.12,1445.30L1165.74,1445.30L1167.35,1445.30L1168.97,1445.30L1170.59,1445.30L1172.21,1445.30C1172.75,1445.30,1173.29,1381.84,1173.83,1381.84C1174.36,1381.84,1174.90,1445.30,1175.44,1445.30L1177.06,1445.30L1178.68,1445.30L1180.30,1445.30L1181.91,1445.30L1183.53,1445.30L1185.15,1445.30C1185.69,1445.30,1186.23,1413.57,1186.77,1413.57C1187.31,1413.57,1187.85,1445.30,1188.39,1445.30L1190.00,1445.30L1191.62,1445.30L1193.24,1445.30L1194.86,1445.30L1196.47,1445.30L1198.09,1445.30L1199.71,1445.30C1200.25,1445.30,1200.79,1429.43,1201.33,1429.43C1201.87,1429.43,1202.41,1445.30,1202.95,1445.30L1204.56,1445.30C1205.10,1445.30,1205.64,1429.43,1206.18,1429.43C1206.72,1429.43,1207.26,1445.30,1207.80,1445.30L1209.42,1445.30L1211.04,1445.30L1212.65,1445.30L1214.27,1445.30L1215.89,1445.30C1216.43,1445.30,1216.97,1350.11,1217.51,1350.11C1218.05,1350.11,1218.59,1445.30,1219.12,1445.30C1219.66,1445.30,1220.20,1334.24,1220.74,1334.24C1221.28,1334.24,1221.82,1445.30,1222.36,1445.30L1223.98,1445.30L1225.60,1445.30L1227.21,1445.30L1228.83,1445.30L1230.45,1445.30L1232.07,1445.30C1232.61,1445.30,1233.15,1429.43,1233.69,1429.43L1235.30,1429.43C1235.84,1429.43,1236.38,1445.30,1236.92,1445.30L1238.54,1445.30L1240.16,1445.30L1241.78,1445.30C1242.31,1445.30,1242.85,1413.57,1243.39,1413.57C1243.93,1413.57,1244.47,1445.30,1245.01,1445.30L1246.63,1445.30L1248.25,1445.30L1249.86,1445.30L1251.48,1445.30C1252.02,1445.30,1252.56,1413.57,1253.10,1413.57C1253.64,1413.57,1254.18,1445.30,1254.72,1445.30L1256.34,1445.30L1257.95,1445.30L1259.57,1445.30L1261.19,1445.30L1262.81,1445.30L1264.42,1445.30L1266.04,1445.30L1267.66,1445.30L1269.28,1445.30L1270.90,1445.30L1272.51,1445.30L1274.13,1445.30C1274.67,1445.30,1275.21,1429.43,1275.75,1429.43C1276.29,1429.43,1276.83,1445.30,1277.37,1445.30L1278.99,1445.30L1280.60,1445.30L1282.22,1445.30L1283.84,1445.30L1285.46,1445.30L1287.08,1445.30L1288.69,1445.30L1290.31,1445.30L1291.93,1445.30L1293.55,1445.30L1295.16,1445.30L1296.78,1445.30L1298.40,1445.30L1300.02,1445.30L1301.64,1445.30L1303.25,1445.30L1304.87,1445.30L1306.49,1445.30L1308.11,1445.30L1309.72,1445.30C1310.26,1445.30,1310.80,1413.57,1311.34,1413.57C1311.88,1413.57,1312.42,1445.30,1312.96,1445.30L1314.58,1445.30L1316.20,1445.30L1317.81,1445.30L1319.43,1445.30L1321.05,1445.30L1322.67,1445.30L1324.29,1445.30L1325.90,1445.30L1327.52,1445.30L1329.14,1445.30L1330.76,1445.30L1332.38,1445.30L1333.99,1445.30L1335.61,1445.30L1337.23,1445.30L1338.85,1445.30L1340.46,1445.30L1342.08,1445.30C1342.62,1445.30,1343.16,1413.57,1343.70,1413.57C1344.24,1413.57,1344.78,1445.30,1345.32,1445.30L1346.94,1445.30C1347.47,1445.30,1348.01,1429.43,1348.55,1429.43C1349.09,1429.43,1349.63,1445.30,1350.17,1445.30L1351.79,1445.30L1353.41,1445.30L1355.03,1445.30L1356.64,1445.30L1358.26,1445.30L1359.88,1445.30L1361.50,1445.30L1363.11,1445.30L1364.73,1445.30C1365.27,1445.30,1365.81,1429.43,1366.35,1429.43C1366.89,1429.43,1367.43,1445.30,1367.97,1445.30L1369.59,1445.30L1371.20,1445.30L1372.82,1445.30L1374.44,1445.30L1376.06,1445.30L1377.67,1445.30C1378.21,1445.30,1378.75,1429.43,1379.29,1429.43C1379.83,1429.43,1380.37,1445.30,1380.91,1445.30L1382.53,1445.30L1384.15,1445.30L1385.76,1445.30C1386.30,1445.30,1386.84,1413.57,1387.38,1413.57L1389.00,1413.57C1389.54,1413.57,1390.08,1445.30,1390.62,1445.30L1392.24,1445.30C1392.77,1445.30,1393.31,1429.43,1393.85,1429.43C1394.39,1429.43,1394.93,1445.30,1395.47,1445.30L1397.09,1445.30L1398.71,1445.30L1400.33,1445.30L1401.94,1445.30C1402.48,1445.30,1403.02,1429.43,1403.56,1429.43C1404.10,1429.43,1404.64,1445.30,1405.18,1445.30L1406.80,1445.30L1408.41,1445.30L1410.03,1445.30L1411.65,1445.30L1413.27,1445.30L1414.89,1445.30L1416.50,1445.30L1418.12,1445.30C1418.66,1445.30,1419.20,1413.57,1419.74,1413.57C1420.28,1413.57,1420.82,1445.30,1421.36,1445.30C1421.90,1445.30,1422.44,1429.43,1422.97,1429.43C1423.51,1429.43,1424.05,1445.30,1424.59,1445.30L1426.21,1445.30L1427.83,1445.30L1429.45,1445.30L1431.06,1445.30L1432.68,1445.30L1434.30,1445.30L1435.92,1445.30L1437.54,1445.30L1439.15,1445.30L1440.77,1445.30L1442.39,1445.30L1444.01,1445.30L1445.62,1445.30C1446.16,1445.30,1446.70,1429.43,1447.24,1429.43C1447.78,1429.43,1448.32,1445.30,1448.86,1445.30L1450.48,1445.30L1452.10,1445.30L1453.71,1445.30C1454.25,1445.30,1454.79,1365.97,1455.33,1365.97C1455.87,1365.97,1456.41,1445.30,1456.95,1445.30C1457.49,1445.30,1458.03,1429.43,1458.57,1429.43C1459.11,1429.43,1459.65,1445.30,1460.19,1445.30L1461.80,1445.30L1463.42,1445.30L1465.04,1445.30L1466.66,1445.30L1468.28,1445.30C1468.81,1445.30,1469.35,1381.84,1469.89,1381.84C1470.43,1381.84,1470.97,1445.30,1471.51,1445.30L1473.13,1445.30L1474.75,1445.30L1476.36,1445.30L1477.98,1445.30L1479.60,1445.30L1481.22,1445.30L1482.84,1445.30L1484.45,1445.30L1486.07,1445.30L1487.69,1445.30L1489.31,1445.30C1489.85,1445.30,1490.39,1429.43,1490.92,1429.43C1491.46,1429.43,1492.00,1445.30,1492.54,1445.30L1494.16,1445.30L1495.78,1445.30L1497.40,1445.30L1499.01,1445.30L1500.63,1445.30L1502.25,1445.30L1503.87,1445.30L1505.49,1445.30L1507.10,1445.30L1508.72,1445.30L1510.34,1445.30L1511.96,1445.30L1513.57,1445.30L1515.19,1445.30L1516.81,1445.30L1518.43,1445.30L1520.05,1445.30L1521.66,1445.30L1523.28,1445.30L1524.90,1445.30L1526.52,1445.30L1528.14,1445.30L1529.75,1445.30L1531.37,1445.30L1532.99,1445.30L1534.61,1445.30L1536.22,1445.30C1536.76,1445.30,1537.30,1429.43,1537.84,1429.43C1538.38,1429.43,1538.92,1445.30,1539.46,1445.30L1541.08,1445.30L1542.70,1445.30C1543.24,1445.30,1543.77,1381.84,1544.31,1381.84C1544.85,1381.84,1545.39,1445.30,1545.93,1445.30L1547.55,1445.30L1549.17,1445.30L1550.79,1445.30L1552.40,1445.30L1554.02,1445.30C1554.56,1445.30,1555.10,1397.70,1555.64,1397.70C1556.18,1397.70,1556.72,1445.30,1557.26,1445.30L1558.88,1445.30C1559.41,1445.30,1559.95,1397.70,1560.49,1397.70C1561.03,1397.70,1561.57,1445.30,1562.11,1445.30L1563.73,1445.30L1565.35,1445.30L1566.96,1445.30L1568.58,1445.30L1570.20,1445.30L1571.82,1445.30L1573.44,1445.30L1575.05,1445.30L1576.67,1445.30L1578.29,1445.30L1579.91,1445.30L1581.52,1445.30L1583.14,1445.30L1584.76,1445.30L1586.38,1445.30L1588.00,1445.30L1589.61,1445.30L1591.23,1445.30L1592.85,1445.30L1594.47,1445.30L1596.09,1445.30L1597.70,1445.30L1599.32,1445.30L1600.94,1445.30L1602.56,1445.30L1604.17,1445.30L1605.79,1445.30L1607.41,1445.30L1609.03,1445.30L1610.65,1445.30L1612.26,1445.30L1613.88,1445.30L1615.50,1445.30L1617.12,1445.30L1618.74,1445.30L1620.35,1445.30L1621.97,1445.30L1623.59,1445.30C1624.13,1445.30,1624.67,1429.43,1625.21,1429.43C1625.75,1429.43,1626.29,1445.30,1626.82,1445.30L1628.44,1445.30L1630.06,1445.30L1631.68,1445.30L1633.30,1445.30L1634.91,1445.30L1636.53,1445.30L1638.15,1445.30L1639.77,1445.30L1641.39,1445.30L1643.00,1445.30L1644.62,1445.30C1645.16,1445.30,1645.70,1413.57,1646.24,1413.57C1646.78,1413.57,1647.32,1445.30,1647.86,1445.30L1649.47,1445.30L1651.09,1445.30L1652.71,1445.30L1654.33,1445.30L1655.95,1445.30L1657.56,1445.30L1659.18,1445.30C1659.72,1445.30,1660.26,1397.70,1660.80,1397.70C1661.34,1397.70,1661.88,1445.30,1662.42,1445.30L1664.04,1445.30L1665.65,1445.30L1667.27,1445.30L1668.89,1445.30L1670.51,1445.30L1672.12,1445.30L1673.74,1445.30L1675.36,1445.30L1676.98,1445.30L1678.60,1445.30L1680.21,1445.30L1681.83,1445.30L1683.45,1445.30L1685.07,1445.30L1686.69,1445.30L1688.30,1445.30C1688.84,1445.30,1689.38,1429.43,1689.92,1429.43C1690.46,1429.43,1691.00,1445.30,1691.54,1445.30C1692.08,1445.30,1692.62,1429.43,1693.16,1429.43C1693.70,1429.43,1694.24,1445.30,1694.77,1445.30L1696.39,1445.30L1698.01,1445.30L1699.63,1445.30L1701.25,1445.30L1702.86,1445.30L1704.48,1445.30L1706.10,1445.30" stroke="#ec4899" stroke-width="2.8" fill="none" stroke-linejoin="round"/></svg>
<div class="t" style="top:263.01px;font-size:10.5px;line-height:10.5px;font-weight:400;color:#8690a3;right:2137.5px;text-align:right;">8000</div>
<div class="t" style="top:296.01px;font-size:10.5px;line-height:10.5px;font-weight:400;color:#8690a3;right:2137.5px;text-align:right;">6000</div>
<div class="t" style="top:329.01px;font-size:10.5px;line-height:10.5px;font-weight:400;color:#8690a3;right:2137.5px;text-align:right;">4000</div>
<div class="t" style="top:362.01px;font-size:10.5px;line-height:10.5px;font-weight:400;color:#8690a3;right:2137.5px;text-align:right;">2000</div>
<div class="t" style="top:395.01px;font-size:10.5px;line-height:10.5px;font-weight:400;color:#8690a3;right:2137.5px;text-align:right;">0</div>
<div class="t" style="top:418.01px;font-size:10.5px;line-height:10.5px;font-weight:400;color:#8690a3;left:431.0px;transform:translateX(-50%);">Jan 1</div>
<div class="t" style="top:418.01px;font-size:10.5px;line-height:10.5px;font-weight:400;color:#8690a3;left:539.5px;transform:translateX(-50%);">Feb 1</div>
<div class="t" style="top:418.01px;font-size:10.5px;line-height:10.5px;font-weight:400;color:#8690a3;left:637.5px;transform:translateX(-50%);">Mar 1</div>
<div class="t" style="top:418.01px;font-size:10.5px;line-height:10.5px;font-weight:400;color:#8690a3;left:746.0px;transform:translateX(-50%);">Apr 1</div>
<div class="t" style="top:418.01px;font-size:10.5px;line-height:10.5px;font-weight:400;color:#8690a3;left:851.0px;transform:translateX(-50%);">May 1</div>
<div class="t" style="top:418.01px;font-size:10.5px;line-height:10.5px;font-weight:400;color:#8690a3;left:959.5px;transform:translateX(-50%);">Jun 1</div>
<div class="t" style="top:418.01px;font-size:10.5px;line-height:10.5px;font-weight:400;color:#8690a3;left:1064.5px;transform:translateX(-50%);">Jul 1</div>
<div class="t" style="top:418.01px;font-size:10.5px;line-height:10.5px;font-weight:400;color:#8690a3;left:1173.0px;transform:translateX(-50%);">Aug 1</div>
<div class="t" style="top:418.01px;font-size:10.5px;line-height:10.5px;font-weight:400;color:#8690a3;left:1281.5px;transform:translateX(-50%);">Sep 1</div>
<div class="t" style="top:418.01px;font-size:10.5px;line-height:10.5px;font-weight:400;color:#8690a3;left:1386.5px;transform:translateX(-50%);">Oct 1</div>
<div class="t" style="top:418.01px;font-size:10.5px;line-height:10.5px;font-weight:400;color:#8690a3;left:1495.0px;transform:translateX(-50%);">Nov 1</div>
<div class="t" style="top:418.01px;font-size:10.5px;line-height:10.5px;font-weight:400;color:#8690a3;left:1600.0px;transform:translateX(-50%);">Dec 1</div>
<div class="t" style="top:263.01px;font-size:10.5px;line-height:10.5px;font-weight:400;color:#8690a3;right:764.9000000000001px;text-align:right;">6000</div>
<div class="t" style="top:296.01px;font-size:10.5px;line-height:10.5px;font-weight:400;color:#8690a3;right:764.9000000000001px;text-align:right;">3000</div>
<div class="t" style="top:329.01px;font-size:10.5px;line-height:10.5px;font-weight:400;color:#8690a3;right:764.9000000000001px;text-align:right;">0</div>
<div class="t" style="top:362.01px;font-size:10.5px;line-height:10.5px;font-weight:400;color:#8690a3;right:764.9000000000001px;text-align:right;">-3000</div>
<div class="t" style="top:395.01px;font-size:10.5px;line-height:10.5px;font-weight:400;color:#8690a3;right:764.9000000000001px;text-align:right;">-6000</div>
<div class="t" style="top:418.51px;font-size:10.5px;line-height:10.5px;font-weight:400;color:#8690a3;left:1803.6px;transform:translateX(-50%);">Jan 1</div>
<div class="t" style="top:418.51px;font-size:10.5px;line-height:10.5px;font-weight:400;color:#8690a3;left:1853.7535714285714px;transform:translateX(-50%);">Feb 1</div>
<div class="t" style="top:418.51px;font-size:10.5px;line-height:10.5px;font-weight:400;color:#8690a3;left:1899.0535714285713px;transform:translateX(-50%);">Mar 1</div>
<div class="t" style="top:418.51px;font-size:10.5px;line-height:10.5px;font-weight:400;color:#8690a3;left:1949.2071428571428px;transform:translateX(-50%);">Apr 1</div>
<div class="t" style="top:418.51px;font-size:10.5px;line-height:10.5px;font-weight:400;color:#8690a3;left:1997.742857142857px;transform:translateX(-50%);">May 1</div>
<div class="t" style="top:418.51px;font-size:10.5px;line-height:10.5px;font-weight:400;color:#8690a3;left:2047.8964285714285px;transform:translateX(-50%);">Jun 1</div>
<div class="t" style="top:418.51px;font-size:10.5px;line-height:10.5px;font-weight:400;color:#8690a3;left:2096.432142857143px;transform:translateX(-50%);">Jul 1</div>
<div class="t" style="top:418.51px;font-size:10.5px;line-height:10.5px;font-weight:400;color:#8690a3;left:2146.5857142857144px;transform:translateX(-50%);">Aug 1</div>
<div class="t" style="top:418.51px;font-size:10.5px;line-height:10.5px;font-weight:400;color:#8690a3;left:2196.739285714286px;transform:translateX(-50%);">Sep 1</div>
<div class="t" style="top:418.51px;font-size:10.5px;line-height:10.5px;font-weight:400;color:#8690a3;left:2245.275px;transform:translateX(-50%);">Oct 1</div>
<div class="t" style="top:418.51px;font-size:10.5px;line-height:10.5px;font-weight:400;color:#8690a3;left:2295.4285714285716px;transform:translateX(-50%);">Nov 1</div>
<div class="t" style="top:418.51px;font-size:10.5px;line-height:10.5px;font-weight:400;color:#8690a3;left:2343.964285714286px;transform:translateX(-50%);">Dec 1</div>
<div class="t" style="top:600.01px;font-size:10.5px;line-height:10.5px;font-weight:400;color:#8690a3;right:2137.2px;text-align:right;">6000</div>
<div class="t" style="top:679.26px;font-size:10.5px;line-height:10.5px;font-weight:400;color:#8690a3;right:2137.2px;text-align:right;">4500</div>
<div class="t" style="top:758.51px;font-size:10.5px;line-height:10.5px;font-weight:400;color:#8690a3;right:2137.2px;text-align:right;">3000</div>
<div class="t" style="top:837.76px;font-size:10.5px;line-height:10.5px;font-weight:400;color:#8690a3;right:2137.2px;text-align:right;">1500</div>
<div class="t" style="top:917.01px;font-size:10.5px;line-height:10.5px;font-weight:400;color:#8690a3;right:2137.2px;text-align:right;">0</div>
<div class="t" style="top:941.01px;font-size:10.5px;line-height:10.5px;font-weight:400;color:#8690a3;left:431.3px;transform:translateX(-50%);">Jan 1</div>
<div class="t" style="top:941.01px;font-size:10.5px;line-height:10.5px;font-weight:400;color:#8690a3;left:481.4535714285714px;transform:translateX(-50%);">Feb 1</div>
<div class="t" style="top:941.01px;font-size:10.5px;line-height:10.5px;font-weight:400;color:#8690a3;left:526.7535714285715px;transform:translateX(-50%);">Mar 1</div>
<div class="t" style="top:941.01px;font-size:10.5px;line-height:10.5px;font-weight:400;color:#8690a3;left:576.9071428571428px;transform:translateX(-50%);">Apr 1</div>
<div class="t" style="top:941.01px;font-size:10.5px;line-height:10.5px;font-weight:400;color:#8690a3;left:625.4428571428572px;transform:translateX(-50%);">May 1</div>
<div class="t" style="top:941.01px;font-size:10.5px;line-height:10.5px;font-weight:400;color:#8690a3;left:675.5964285714286px;transform:translateX(-50%);">Jun 1</div>
<div class="t" style="top:941.01px;font-size:10.5px;line-height:10.5px;font-weight:400;color:#8690a3;left:724.132142857143px;transform:translateX(-50%);">Jul 1</div>
<div class="t" style="top:941.01px;font-size:10.5px;line-height:10.5px;font-weight:400;color:#8690a3;left:774.2857142857143px;transform:translateX(-50%);">Aug 1</div>
<div class="t" style="top:941.01px;font-size:10.5px;line-height:10.5px;font-weight:400;color:#8690a3;left:824.4392857142858px;transform:translateX(-50%);">Sep 1</div>
<div class="t" style="top:941.01px;font-size:10.5px;line-height:10.5px;font-weight:400;color:#8690a3;left:872.9750000000001px;transform:translateX(-50%);">Oct 1</div>
<div class="t" style="top:941.01px;font-size:10.5px;line-height:10.5px;font-weight:400;color:#8690a3;left:923.1285714285715px;transform:translateX(-50%);">Nov 1</div>
<div class="t" style="top:941.01px;font-size:10.5px;line-height:10.5px;font-weight:400;color:#8690a3;left:971.6642857142858px;transform:translateX(-50%);">Dec 1</div>
<div class="t" style="top:600.01px;font-size:10.5px;line-height:10.5px;font-weight:400;color:#8690a3;right:1451.1px;text-align:right;">12</div>
<div class="t" style="top:679.26px;font-size:10.5px;line-height:10.5px;font-weight:400;color:#8690a3;right:1451.1px;text-align:right;">9</div>
<div class="t" style="top:758.51px;font-size:10.5px;line-height:10.5px;font-weight:400;color:#8690a3;right:1451.1px;text-align:right;">6</div>
<div class="t" style="top:837.76px;font-size:10.5px;line-height:10.5px;font-weight:400;color:#8690a3;right:1451.1px;text-align:right;">3</div>
<div class="t" style="top:917.01px;font-size:10.5px;line-height:10.5px;font-weight:400;color:#8690a3;right:1451.1px;text-align:right;">0</div>
<div class="t" style="top:941.01px;font-size:10.5px;line-height:10.5px;font-weight:400;color:#8690a3;left:1117.4px;transform:translateX(-50%);">Jan 1</div>
<div class="t" style="top:941.01px;font-size:10.5px;line-height:10.5px;font-weight:400;color:#8690a3;left:1167.5535714285716px;transform:translateX(-50%);">Feb 1</div>
<div class="t" style="top:941.01px;font-size:10.5px;line-height:10.5px;font-weight:400;color:#8690a3;left:1212.8535714285715px;transform:translateX(-50%);">Mar 1</div>
<div class="t" style="top:941.01px;font-size:10.5px;line-height:10.5px;font-weight:400;color:#8690a3;left:1263.007142857143px;transform:translateX(-50%);">Apr 1</div>
<div class="t" style="top:941.01px;font-size:10.5px;line-height:10.5px;font-weight:400;color:#8690a3;left:1311.5428571428572px;transform:translateX(-50%);">May 1</div>
<div class="t" style="top:941.01px;font-size:10.5px;line-height:10.5px;font-weight:400;color:#8690a3;left:1361.6964285714287px;transform:translateX(-50%);">Jun 1</div>
<div class="t" style="top:941.01px;font-size:10.5px;line-height:10.5px;font-weight:400;color:#8690a3;left:1410.232142857143px;transform:translateX(-50%);">Jul 1</div>
<div class="t" style="top:941.01px;font-size:10.5px;line-height:10.5px;font-weight:400;color:#8690a3;left:1460.3857142857144px;transform:translateX(-50%);">Aug 1</div>
<div class="t" style="top:941.01px;font-size:10.5px;line-height:10.5px;font-weight:400;color:#8690a3;left:1510.5392857142856px;transform:translateX(-50%);">Sep 1</div>
<div class="t" style="top:941.01px;font-size:10.5px;line-height:10.5px;font-weight:400;color:#8690a3;left:1559.075px;transform:translateX(-50%);">Oct 1</div>
<div class="t" style="top:941.01px;font-size:10.5px;line-height:10.5px;font-weight:400;color:#8690a3;left:1609.2285714285713px;transform:translateX(-50%);">Nov 1</div>
<div class="t" style="top:941.01px;font-size:10.5px;line-height:10.5px;font-weight:400;color:#8690a3;left:1657.7642857142855px;transform:translateX(-50%);">Dec 1</div>
<div class="t" style="top:1123.01px;font-size:10.5px;line-height:10.5px;font-weight:400;color:#8690a3;right:2137.1px;text-align:right;">3300</div>
<div class="t" style="top:1202.31px;font-size:10.5px;line-height:10.5px;font-weight:400;color:#8690a3;right:2137.1px;text-align:right;">2200</div>
<div class="t" style="top:1281.71px;font-size:10.5px;line-height:10.5px;font-weight:400;color:#8690a3;right:2137.1px;text-align:right;">1100</div>
<div class="t" style="top:1361.01px;font-size:10.5px;line-height:10.5px;font-weight:400;color:#8690a3;right:2137.1px;text-align:right;">0</div>
<div class="t" style="top:1123.01px;font-size:10.5px;line-height:10.5px;font-weight:400;color:#8690a3;right:1451.3px;text-align:right;">20</div>
<div class="t" style="top:1202.31px;font-size:10.5px;line-height:10.5px;font-weight:400;color:#8690a3;right:1451.3px;text-align:right;">15</div>
<div class="t" style="top:1281.71px;font-size:10.5px;line-height:10.5px;font-weight:400;color:#8690a3;right:1451.3px;text-align:right;">10</div>
<div class="t" style="top:1361.01px;font-size:10.5px;line-height:10.5px;font-weight:400;color:#8690a3;right:1451.3px;text-align:right;">5</div>
<div class="t" style="top:1440.31px;font-size:10.5px;line-height:10.5px;font-weight:400;color:#8690a3;right:1451.3px;text-align:right;">0</div>
<div class="t" style="top:521.14px;font-size:12px;line-height:12px;font-weight:700;color:#0b1220;letter-spacing:1.3px;left:1781px;">TOP 10 SALES PRODUCTS</div>
<div class="t" style="top:522.19px;font-size:11px;line-height:11px;font-weight:700;color:#0ea35a;letter-spacing:0.6px;right:172px;text-align:right;margin-right:-0.6px;">SEE ALL</div>
<div class="abs" style="left:1757px;top:556px;width:654px;height:1px;background:#f2f4f7"></div>
<div class="t" style="top:572.03px;font-size:12.6px;line-height:12.6px;font-weight:400;color:#596275;left:1781px;">Anti-Shock Space Protective Clear Cover Ca...</div>
<div class="t" style="top:572.72px;font-size:12.5px;line-height:12.5px;font-weight:700;color:#0b1220;right:172px;text-align:right;">20</div>
<div class="abs" style="left:1757px;top:599.0px;width:654px;height:1px;background:#f4f5f8"></div>
<div class="t" style="top:615.38px;font-size:12.6px;line-height:12.6px;font-weight:400;color:#596275;letter-spacing:-0.4px;left:1781px;">TEMPERED GLASS Default</div>
<div class="t" style="top:616.07px;font-size:12.5px;line-height:12.5px;font-weight:700;color:#0b1220;right:172px;text-align:right;">14</div>
<div class="abs" style="left:1757px;top:642.4px;width:654px;height:1px;background:#f4f5f8"></div>
<div class="t" style="top:658.73px;font-size:12.6px;line-height:12.6px;font-weight:400;color:#596275;left:1781px;">Generic AirPods Pro</div>
<div class="t" style="top:659.42px;font-size:12.5px;line-height:12.5px;font-weight:700;color:#0b1220;right:172px;text-align:right;">14</div>
<div class="abs" style="left:1757px;top:685.7px;width:654px;height:1px;background:#f4f5f8"></div>
<div class="t" style="top:702.08px;font-size:12.6px;line-height:12.6px;font-weight:400;color:#596275;left:1781px;">iPhone 6 Brand New Black 16GB</div>
<div class="t" style="top:702.77px;font-size:12.5px;line-height:12.5px;font-weight:700;color:#0b1220;right:172px;text-align:right;">14</div>
<div class="abs" style="left:1757px;top:729.0px;width:654px;height:1px;background:#f4f5f8"></div>
<div class="t" style="top:745.43px;font-size:12.6px;line-height:12.6px;font-weight:400;color:#596275;left:1781px;">Screen Crack/ Faulty</div>
<div class="t" style="top:746.12px;font-size:12.5px;line-height:12.5px;font-weight:700;color:#0b1220;right:172px;text-align:right;">9</div>
<div class="abs" style="left:1757px;top:772.4px;width:654px;height:1px;background:#f4f5f8"></div>
<div class="t" style="top:788.78px;font-size:12.6px;line-height:12.6px;font-weight:400;color:#596275;left:1781px;">Cable</div>
<div class="t" style="top:789.47px;font-size:12.5px;line-height:12.5px;font-weight:700;color:#0b1220;right:172px;text-align:right;">8</div>
<div class="abs" style="left:1757px;top:815.8px;width:654px;height:1px;background:#f4f5f8"></div>
<div class="t" style="top:832.13px;font-size:12.6px;line-height:12.6px;font-weight:400;color:#596275;left:1781px;">AirPods Pro White</div>
<div class="t" style="top:832.82px;font-size:12.5px;line-height:12.5px;font-weight:700;color:#0b1220;right:172px;text-align:right;">7</div>
<div class="abs" style="left:1757px;top:859.1px;width:654px;height:1px;background:#f4f5f8"></div>
<div class="t" style="top:875.48px;font-size:12.6px;line-height:12.6px;font-weight:400;color:#596275;left:1781px;">apple original case</div>
<div class="t" style="top:876.17px;font-size:12.5px;line-height:12.5px;font-weight:700;color:#0b1220;right:172px;text-align:right;">7</div>
<div class="abs" style="left:1757px;top:902.5px;width:654px;height:1px;background:#f4f5f8"></div>
<div class="t" style="top:918.83px;font-size:12.6px;line-height:12.6px;font-weight:400;color:#596275;left:1781px;">defence case</div>
<div class="t" style="top:919.52px;font-size:12.5px;line-height:12.5px;font-weight:700;color:#0b1220;right:172px;text-align:right;">7</div>
<div class="abs" style="left:1757px;top:945.8px;width:654px;height:1px;background:#f4f5f8"></div>
<div class="t" style="top:962.18px;font-size:12.6px;line-height:12.6px;font-weight:400;color:#596275;left:1781px;">Service Fee</div>
<div class="t" style="top:962.87px;font-size:12.5px;line-height:12.5px;font-weight:700;color:#0b1220;right:172px;text-align:right;">6</div>
<div class="t" style="top:1044.14px;font-size:12px;line-height:12px;font-weight:700;color:#0b1220;letter-spacing:1.3px;left:1781px;">TOP 10 REPAIR MODEL</div>
<div class="abs" style="left:1757px;top:1079px;width:654px;height:1px;background:#f2f4f7"></div>
<div class="t" style="top:1095.03px;font-size:12.6px;line-height:12.6px;font-weight:400;color:#596275;left:1781px;">iPhone 16</div>
<div class="t" style="top:1095.72px;font-size:12.5px;line-height:12.5px;font-weight:700;color:#0b1220;right:172px;text-align:right;">17</div>
<div class="abs" style="left:1757px;top:1122.0px;width:654px;height:1px;background:#f4f5f8"></div>
<div class="t" style="top:1138.38px;font-size:12.6px;line-height:12.6px;font-weight:400;color:#596275;left:1781px;">iPhone 13</div>
<div class="t" style="top:1139.07px;font-size:12.5px;line-height:12.5px;font-weight:700;color:#0b1220;right:172px;text-align:right;">15</div>
<div class="abs" style="left:1757px;top:1165.3px;width:654px;height:1px;background:#f4f5f8"></div>
<div class="t" style="top:1181.73px;font-size:12.6px;line-height:12.6px;font-weight:400;color:#596275;left:1781px;">iPhone 13 Mini</div>
<div class="t" style="top:1182.42px;font-size:12.5px;line-height:12.5px;font-weight:700;color:#0b1220;right:172px;text-align:right;">8</div>
<div class="abs" style="left:1757px;top:1208.7px;width:654px;height:1px;background:#f4f5f8"></div>
<div class="t" style="top:1225.08px;font-size:12.6px;line-height:12.6px;font-weight:400;color:#596275;left:1781px;">iPhone 11</div>
<div class="t" style="top:1225.77px;font-size:12.5px;line-height:12.5px;font-weight:700;color:#0b1220;right:172px;text-align:right;">6</div>
<div class="abs" style="left:1757px;top:1252.0px;width:654px;height:1px;background:#f4f5f8"></div>
<div class="t" style="top:1268.43px;font-size:12.6px;line-height:12.6px;font-weight:400;color:#596275;left:1781px;">iPhone 14 Plus</div>
<div class="t" style="top:1269.12px;font-size:12.5px;line-height:12.5px;font-weight:700;color:#0b1220;right:172px;text-align:right;">5</div>
<div class="abs" style="left:1757px;top:1295.4px;width:654px;height:1px;background:#f4f5f8"></div>
<div class="t" style="top:1311.78px;font-size:12.6px;line-height:12.6px;font-weight:400;color:#596275;left:1781px;">Samsung Galaxy S21 Plus (SM-G996B)</div>
<div class="t" style="top:1312.47px;font-size:12.5px;line-height:12.5px;font-weight:700;color:#0b1220;right:172px;text-align:right;">4</div>
<div class="abs" style="left:1757px;top:1338.8px;width:654px;height:1px;background:#f4f5f8"></div>
<div class="t" style="top:1355.13px;font-size:12.6px;line-height:12.6px;font-weight:400;color:#596275;left:1781px;">iPhone 12</div>
<div class="t" style="top:1355.82px;font-size:12.5px;line-height:12.5px;font-weight:700;color:#0b1220;right:172px;text-align:right;">3</div>
<div class="abs" style="left:1757px;top:1382.1px;width:654px;height:1px;background:#f4f5f8"></div>
<div class="t" style="top:1398.48px;font-size:12.6px;line-height:12.6px;font-weight:400;color:#596275;left:1781px;">iPhone Xr</div>
<div class="t" style="top:1399.17px;font-size:12.5px;line-height:12.5px;font-weight:700;color:#0b1220;right:172px;text-align:right;">3</div>
<div class="abs" style="left:1757px;top:1425.5px;width:654px;height:1px;background:#f4f5f8"></div>
<div class="t" style="top:1441.83px;font-size:12.6px;line-height:12.6px;font-weight:400;color:#596275;left:1781px;">iPhone X</div>
<div class="t" style="top:1442.52px;font-size:12.5px;line-height:12.5px;font-weight:700;color:#0b1220;right:172px;text-align:right;">2</div>
<div class="abs" style="left:1757px;top:1468.8px;width:654px;height:1px;background:#f4f5f8"></div>
<div class="t" style="top:1485.18px;font-size:12.6px;line-height:12.6px;font-weight:400;color:#596275;left:1781px;">iPhone 8</div>
<div class="t" style="top:1485.87px;font-size:12.5px;line-height:12.5px;font-weight:700;color:#0b1220;right:172px;text-align:right;">2</div>
<div class="abs" style="left:0;top:62px;width:245px;height:1378px;background:#f3f4f6;border-right:1px solid #e6e8ec"></div>
<div class="abs" style="left:15px;top:77px;width:215px;height:38px;border-radius:7px;background:#00a651"></div>
<svg class="ic" style="left:31px;top:86px;width:19px;height:19px" viewBox="0 0 24 24" fill="none" stroke="#ffffff" stroke-width="2" stroke-linecap="round" stroke-linejoin="round"><path d="M4 11v9a2 2 0 0 0 2 2h12a2 2 0 0 0 2-2v-9"/><path d="M15 22v-5a1.5 1.5 0 0 0-1.5-1.5h-3A1.5 1.5 0 0 0 9 17v5"/><path d="M3 9.5 5 4a2 2 0 0 1 1.9-1.5h10.2A2 2 0 0 1 19 4l2 5.5"/><path d="M3 9.5a3 3 0 0 0 6 0a3 3 0 0 0 6 0a3 3 0 0 0 6 0"/></svg>
<div class="t" style="top:89.06px;font-size:16px;line-height:16px;font-weight:400;color:#ffffff;left:58.5px;">Point of Sales</div>
<svg class="ic" style="left:198px;top:89px;width:15px;height:15px" viewBox="0 0 24 24" fill="none" stroke="#ffffff" stroke-width="2" stroke-linecap="round" stroke-linejoin="round"><path d="M5 12h14"/><path d="m12 5 7 7-7 7"/></svg>
<div class="abs" style="left:0;top:131px;width:245px;height:1px;background:#e7e9ed"></div>
<svg class="ic" style="left:23px;top:140px;width:20px;height:20px" viewBox="0 0 24 24" fill="none" stroke="#4b5563" stroke-width="1.9" stroke-linecap="round" stroke-linejoin="round"><rect width="7" height="9" x="3" y="3" rx="1"/><rect width="7" height="5" x="14" y="3" rx="1"/><rect width="7" height="9" x="14" y="12" rx="1"/><rect width="7" height="5" x="3" y="16" rx="1"/></svg>
<div class="t" style="top:143.15px;font-size:14px;line-height:14px;font-weight:400;color:#3d4656;left:54.5px;">Dashboard</div>
<svg class="ic" style="left:23px;top:177px;width:20px;height:20px" viewBox="0 0 24 24" fill="none" stroke="#4b5563" stroke-width="1.9" stroke-linecap="round" stroke-linejoin="round"><circle cx="8" cy="21" r="1"/><circle cx="19" cy="21" r="1"/><path d="M2.05 2.05h2l2.66 12.42a2 2 0 0 0 2 1.58h9.78a2 2 0 0 0 1.95-1.57l1.65-7.43H5.12"/></svg>
<div class="t" style="top:180.15px;font-size:14px;line-height:14px;font-weight:400;color:#3d4656;left:54.5px;">Orders</div>
<svg class="ic" style="left:207px;top:180px;width:14px;height:14px" viewBox="0 0 24 24" fill="none" stroke="#4b5563" stroke-width="2" stroke-linecap="round" stroke-linejoin="round"><path d="m9 18 6-6-6-6"/></svg>
<svg class="ic" style="left:23px;top:214px;width:20px;height:20px" viewBox="0 0 24 24" fill="none" stroke="#4b5563" stroke-width="1.9" stroke-linecap="round" stroke-linejoin="round"><path d="M11 6a13 13 0 0 0 8.4-2.8A1 1 0 0 1 21 4v12a1 1 0 0 1-1.6.8A13 13 0 0 0 11 14H5a2 2 0 0 1-2-2V8a2 2 0 0 1 2-2z"/><path d="M6 14a12 12 0 0 0 2.4 7.2 2 2 0 0 0 3.2-2.4A8 8 0 0 1 10 14"/><path d="M8 6v8"/></svg>
<div class="t" style="top:217.15px;font-size:14px;line-height:14px;font-weight:400;color:#3d4656;left:54.5px;">Promotion</div>
<svg class="ic" style="left:23px;top:251px;width:20px;height:20px" viewBox="0 0 24 24" fill="none" stroke="#4b5563" stroke-width="1.9" stroke-linecap="round" stroke-linejoin="round"><path d="M16 21v-2a4 4 0 0 0-4-4H6a4 4 0 0 0-4 4v2"/><circle cx="9" cy="7" r="4"/><path d="M22 21v-2a4 4 0 0 0-3-3.87"/><path d="M16 3.13a4 4 0 0 1 0 7.75"/></svg>
<div class="t" style="top:254.15px;font-size:14px;line-height:14px;font-weight:400;color:#3d4656;left:54.5px;">Customers</div>
<svg class="ic" style="left:207px;top:254px;width:14px;height:14px" viewBox="0 0 24 24" fill="none" stroke="#4b5563" stroke-width="2" stroke-linecap="round" stroke-linejoin="round"><path d="m9 18 6-6-6-6"/></svg>
<svg class="ic" style="left:23px;top:288px;width:20px;height:20px" viewBox="0 0 24 24" fill="none" stroke="#4b5563" stroke-width="1.9" stroke-linecap="round" stroke-linejoin="round"><path d="M12.586 2.586A2 2 0 0 0 11.172 2H4a2 2 0 0 0-2 2v7.172a2 2 0 0 0 .586 1.414l8.704 8.704a2.426 2.426 0 0 0 3.42 0l6.58-6.58a2.426 2.426 0 0 0 0-3.42z"/><circle cx="7.5" cy="7.5" r=".5" fill="currentColor"/></svg>
<div class="t" style="top:291.15px;font-size:14px;line-height:14px;font-weight:400;color:#3d4656;left:54.5px;">Products</div>
<svg class="ic" style="left:207px;top:291px;width:14px;height:14px" viewBox="0 0 24 24" fill="none" stroke="#4b5563" stroke-width="2" stroke-linecap="round" stroke-linejoin="round"><path d="m9 18 6-6-6-6"/></svg>
<svg class="ic" style="left:23px;top:325px;width:20px;height:20px" viewBox="0 0 24 24" fill="none" stroke="#4b5563" stroke-width="1.9" stroke-linecap="round" stroke-linejoin="round"><path d="M22 8.35V20a2 2 0 0 1-2 2H4a2 2 0 0 1-2-2V8.35A2 2 0 0 1 3.26 6.5l8-3.2a2 2 0 0 1 1.48 0l8 3.2A2 2 0 0 1 22 8.35Z"/><path d="M6 18h12"/><path d="M6 14h12"/><rect width="12" height="12" x="6" y="10"/></svg>
<div class="t" style="top:328.15px;font-size:14px;line-height:14px;font-weight:400;color:#3d4656;left:54.5px;">Inventory</div>
<svg class="ic" style="left:207px;top:328px;width:14px;height:14px" viewBox="0 0 24 24" fill="none" stroke="#4b5563" stroke-width="2" stroke-linecap="round" stroke-linejoin="round"><path d="m9 18 6-6-6-6"/></svg>
<svg class="ic" style="left:23px;top:362px;width:20px;height:20px" viewBox="0 0 24 24" fill="none" stroke="#4b5563" stroke-width="1.9" stroke-linecap="round" stroke-linejoin="round"><path d="M14 18V6a2 2 0 0 0-2-2H4a2 2 0 0 0-2 2v11a1 1 0 0 0 1 1h2"/><path d="M15 18H9"/><path d="M19 18h2a1 1 0 0 0 1-1v-3.65a1 1 0 0 0-.22-.624l-3.48-4.35A1 1 0 0 0 17.52 8H14"/><circle cx="17" cy="18" r="2"/><circle cx="7" cy="18" r="2"/></svg>
<div class="t" style="top:365.15px;font-size:14px;line-height:14px;font-weight:400;color:#3d4656;left:54.5px;">Purchase</div>
<svg class="ic" style="left:207px;top:365px;width:14px;height:14px" viewBox="0 0 24 24" fill="none" stroke="#4b5563" stroke-width="2" stroke-linecap="round" stroke-linejoin="round"><path d="m9 18 6-6-6-6"/></svg>
<svg class="ic" style="left:23px;top:399px;width:20px;height:20px" viewBox="0 0 24 24" fill="none" stroke="#4b5563" stroke-width="1.9" stroke-linecap="round" stroke-linejoin="round"><line x1="18" x2="18" y1="20" y2="10"/><line x1="12" x2="12" y1="20" y2="4"/><line x1="6" x2="6" y1="20" y2="14"/></svg>
<div class="t" style="top:402.15px;font-size:14px;line-height:14px;font-weight:400;color:#3d4656;left:54.5px;">Reports</div>
<svg class="ic" style="left:207px;top:402px;width:14px;height:14px" viewBox="0 0 24 24" fill="none" stroke="#4b5563" stroke-width="2" stroke-linecap="round" stroke-linejoin="round"><path d="m6 9 6 6 6-6"/></svg>
<svg class="ic" style="left:23px;top:600px;width:20px;height:20px" viewBox="0 0 24 24" fill="none" stroke="#4b5563" stroke-width="1.9" stroke-linecap="round" stroke-linejoin="round"><line x1="12" x2="12" y1="2" y2="22"/><path d="M17 5H9.5a3.5 3.5 0 0 0 0 7h5a3.5 3.5 0 0 1 0 7H6"/></svg>
<div class="t" style="top:603.15px;font-size:14px;line-height:14px;font-weight:400;color:#3d4656;left:54.5px;">Expense</div>
<svg class="ic" style="left:23px;top:637px;width:20px;height:20px" viewBox="0 0 24 24" fill="none" stroke="#4b5563" stroke-width="1.9" stroke-linecap="round" stroke-linejoin="round"><path d="M12.22 2h-.44a2 2 0 0 0-2 2v.18a2 2 0 0 1-1 1.73l-.43.25a2 2 0 0 1-2 0l-.15-.08a2 2 0 0 0-2.73.73l-.22.38a2 2 0 0 0 .73 2.73l.15.1a2 2 0 0 1 1 1.72v.51a2 2 0 0 1-1 1.74l-.15.09a2 2 0 0 0-.73 2.73l.22.38a2 2 0 0 0 2.73.73l.15-.08a2 2 0 0 1 2 0l.43.25a2 2 0 0 1 1 1.73V20a2 2 0 0 0 2 2h.44a2 2 0 0 0 2-2v-.18a2 2 0 0 1 1-1.73l.43-.25a2 2 0 0 1 2 0l.15.08a2 2 0 0 0 2.73-.73l.22-.39a2 2 0 0 0-.73-2.73l-.15-.08a2 2 0 0 1-1-1.74v-.5a2 2 0 0 1 1-1.74l.15-.09a2 2 0 0 0 .73-2.73l-.22-.38a2 2 0 0 0-2.73-.73l-.15.08a2 2 0 0 1-2 0l-.43-.25a2 2 0 0 1-1-1.73V4a2 2 0 0 0-2-2z"/><circle cx="12" cy="12" r="3"/></svg>
<div class="t" style="top:640.15px;font-size:14px;line-height:14px;font-weight:400;color:#3d4656;left:54.5px;">Settings</div>
<svg class="ic" style="left:207px;top:640px;width:14px;height:14px" viewBox="0 0 24 24" fill="none" stroke="#4b5563" stroke-width="2" stroke-linecap="round" stroke-linejoin="round"><path d="m9 18 6-6-6-6"/></svg>
<div class="abs" style="left:42px;top:429px;width:196px;height:30px;border-radius:8px;background:#effcf9"></div>
<div class="t" style="top:437.57px;font-size:13.5px;line-height:13.5px;font-weight:700;color:#0f8a78;left:58px;">Analytics</div>
<div class="t" style="top:470.85px;font-size:14px;line-height:14px;font-weight:400;color:#5c6678;left:58px;">Shift Reports</div>
<div class="t" style="top:503.40px;font-size:14px;line-height:14px;font-weight:400;color:#5c6678;left:58px;">Product Sales Report</div>
<div class="t" style="top:535.95px;font-size:14px;line-height:14px;font-weight:400;color:#5c6678;left:58px;">Inventory Report</div>
<div class="t" style="top:568.50px;font-size:14px;line-height:14px;font-weight:400;color:#5c6678;left:58px;">Payment Report</div>
<div class="abs" style="left:0;top:1366px;width:245px;height:1px;background:#e7e9ed"></div>
<svg class="ic" style="left:27px;top:1390px;width:18px;height:18px" viewBox="0 0 24 24" fill="none" stroke="#5c6678" stroke-width="1.9" stroke-linecap="round" stroke-linejoin="round"><path d="M15 3h6v6"/><path d="M10 14 21 3"/><path d="M18 13v6a2 2 0 0 1-2 2H5a2 2 0 0 1-2-2V8a2 2 0 0 1 2-2h6"/></svg>
<div class="t" style="top:1394.84px;font-size:12px;line-height:12px;font-weight:400;color:#5c6678;left:58.5px;">Back to V5</div>
<div class="abs" style="left:0;top:0;width:2560px;height:62px;background:#1b1b1b"></div>
<div class="abs" style="left:32px;top:23.6px;width:16px;height:2px;background:#9aa1ad;border-radius:1px"></div>
<div class="abs" style="left:32px;top:29.9px;width:16px;height:2px;background:#9aa1ad;border-radius:1px"></div>
<div class="abs" style="left:32px;top:36.4px;width:16px;height:2px;background:#9aa1ad;border-radius:1px"></div>
<svg class="abs" style="left:0;top:0;width:260px;height:62px" viewBox="0 0 260 62" fill="none" stroke-linecap="round" stroke-linejoin="round">
<g stroke="#ffffff">
<path d="M94.6 17.4H84.4A8.8 8.8 0 0 0 84.4 35H94.6" stroke-width="4.6" stroke-linecap="butt"/>
<path d="M100.2 37.2V25.6q0-2.5 2.5-2.5H108" stroke-width="3.8" stroke-linecap="butt" stroke-linejoin="miter"/>
<path d="M110.8 23.15H120.7a3 3 0 0 1 3 3V35.15H114.1a2 2 0 0 1-2-2V31.05a2 2 0 0 1 2-2H123.7" stroke-width="4"/>
<path d="M130.2 23.15H140.3L130.4 35.15H142" stroke-width="4" stroke-linejoin="miter"/>
<path d="M147.2 23.2L151.1 32.6M157.4 23.2L147.7 42.4" stroke-width="3.8"/>
</g>
<g stroke="#05ec90" stroke-width="4.5">
<path d="M164 42V27"/>
<path d="M178.4 19.4A8.85 8.85 0 1 0 178.4 32.7"/>
<circle cx="195.9" cy="26.15" r="8.65"/>
<path d="M230.8 17.25H216.55A4.55 4.55 0 0 0 216.55 26.35H225.5A4.33 4.33 0 0 1 225.5 35H210.6" stroke-linecap="butt" stroke-width="4.4"/>
</g>
<circle cx="181.3" cy="26.3" r="2.35" fill="#05ec90"/>
</svg>
<div class="t" style="top:24.80px;font-size:12.4px;line-height:12.4px;font-weight:400;color:#bfc5ce;left:1235.5px;transform:translateX(-50%);">support line +61 426 663 888</div>
<svg class="abs" style="left:2206px;top:17px;width:28px;height:26px" viewBox="0 0 28 26">
<path d="M14 3.2c-4.3 0-7 3.2-7 7.3v4.6l-2.1 3v1.3h18.2v-1.3l-2.1-3v-4.6c0-4.1-2.7-7.3-7-7.3z" fill="#fb2c3a"/>
<path d="M11.6 21.7a2.6 2.2 0 0 0 4.8 0" stroke="#fb2c3a" stroke-width="1.8" fill="none" stroke-linecap="round"/>
<text x="14" y="14.6" text-anchor="middle" font-family="Liberation Sans" font-weight="700" font-size="10" fill="#fff">3</text>
</svg>
<svg class="abs" style="left:2260px;top:18px;width:26px;height:26px" viewBox="0 0 26 26" fill="none" stroke="#a6adba" stroke-width="1.9" stroke-linecap="round" stroke-linejoin="round">
<path transform="translate(13.05 13.05) scale(0.94) translate(-12 -12)" stroke-width="2" d="M9.937 15.5A2 2 0 0 0 8.5 14.063l-6.135-1.582a.5.5 0 0 1 0-.962L8.5 9.936A2 2 0 0 0 9.937 8.5l1.582-6.135a.5.5 0 0 1 .963 0L14.063 8.5A2 2 0 0 0 15.5 9.937l6.135 1.581a.5.5 0 0 1 0 .964L15.5 14.063a2 2 0 0 0-1.437 1.437l-1.582 6.135a.5.5 0 0 1-.963 0z"/>
<path d="M20.3 3.4v4.4M18.1 5.6h4.4"/>
<circle cx="5.5" cy="20.3" r="1.9"/>
</svg>
<div class="abs" style="left:2307px;top:14px;width:105px;height:33px;border-radius:6px;background:#1e293b;border:1px solid #334155"></div>
<div class="abs" style="left:2320px;top:21px;width:33px;height:19px;border-radius:4px;background:#6b7384"></div>
<div class="t" style="top:24.84px;font-size:12px;line-height:12px;font-weight:700;color:#ffffff;left:2336.5px;transform:translateX(-50%);">ALL</div>
<div class="t" style="top:24.43px;font-size:14.5px;line-height:14.5px;font-weight:400;color:#ffffff;left:2360px;">All</div>
<svg class="ic" style="left:2386px;top:24px;width:13px;height:13px" viewBox="0 0 24 24" fill="none" stroke="#a9b0bc" stroke-width="1.7" stroke-linecap="round" stroke-linejoin="round"><path d="m6 9 6 6 6-6"/></svg>
<div class="abs" style="left:2424px;top:7px;width:114px;height:48px;border-radius:9px;background:#1e293b;border:1px solid #334155"></div>
<svg class="abs" style="left:2436px;top:12px;width:36px;height:36px" viewBox="0 0 36 36">
<defs><clipPath id="av"><circle cx="18" cy="18" r="15.1"/></clipPath></defs>
<circle cx="18" cy="18" r="16.1" fill="none" stroke="#64748b" stroke-width="1.9"/>
<circle cx="18" cy="18" r="15.1" fill="#f9c97c"/>
<g clip-path="url(#av)">
<path d="M4.5 36C6 27 8 22 9.5 14.5 10.5 8 13.5 4.8 18 4.8S25.5 8 26.5 14.5C28 22 30 27 31.5 36z" fill="#3b160f"/>
<ellipse cx="10.6" cy="16.3" rx="1.6" ry="1.9" fill="#f4a08e"/>
<ellipse cx="25.2" cy="16.3" rx="1.6" ry="1.9" fill="#f4a08e"/>
<path d="M11 13.5h13.8v3.5c0 3.6-2.9 5.6-6.9 5.6s-6.9-2-6.9-5.6z" fill="#f79a8a"/>
<rect x="16.3" y="21.5" width="3.4" height="5.5" fill="#f3a393"/>
<path d="M10.5 13.8c0-5 3-8.3 7.4-8.3s7.4 3.3 7.4 8.3z" fill="#3b160f"/>
<path d="M21.6 7.5l.7 6.2h-1.2z" fill="#e9a197"/>
<path d="M7.5 36c.6-5.2 4.5-8.6 10.5-8.6s9.9 3.4 10.5 8.6z" fill="#f4e4de"/>
<path d="M12.9 28.6l.9 7.4M23.4 28.6l-.9 7.4" stroke="#8fb6dc" stroke-width="1.5"/>
<circle cx="14.6" cy="16.1" r=".75" fill="#2b1410"/><circle cx="20.9" cy="16.1" r=".75" fill="#2b1410"/>
</g>
</svg>
<div class="t" style="top:23.43px;font-size:14.5px;line-height:14.5px;font-weight:700;color:#ffffff;left:2482.9px;">owner</div>
</body></html>
